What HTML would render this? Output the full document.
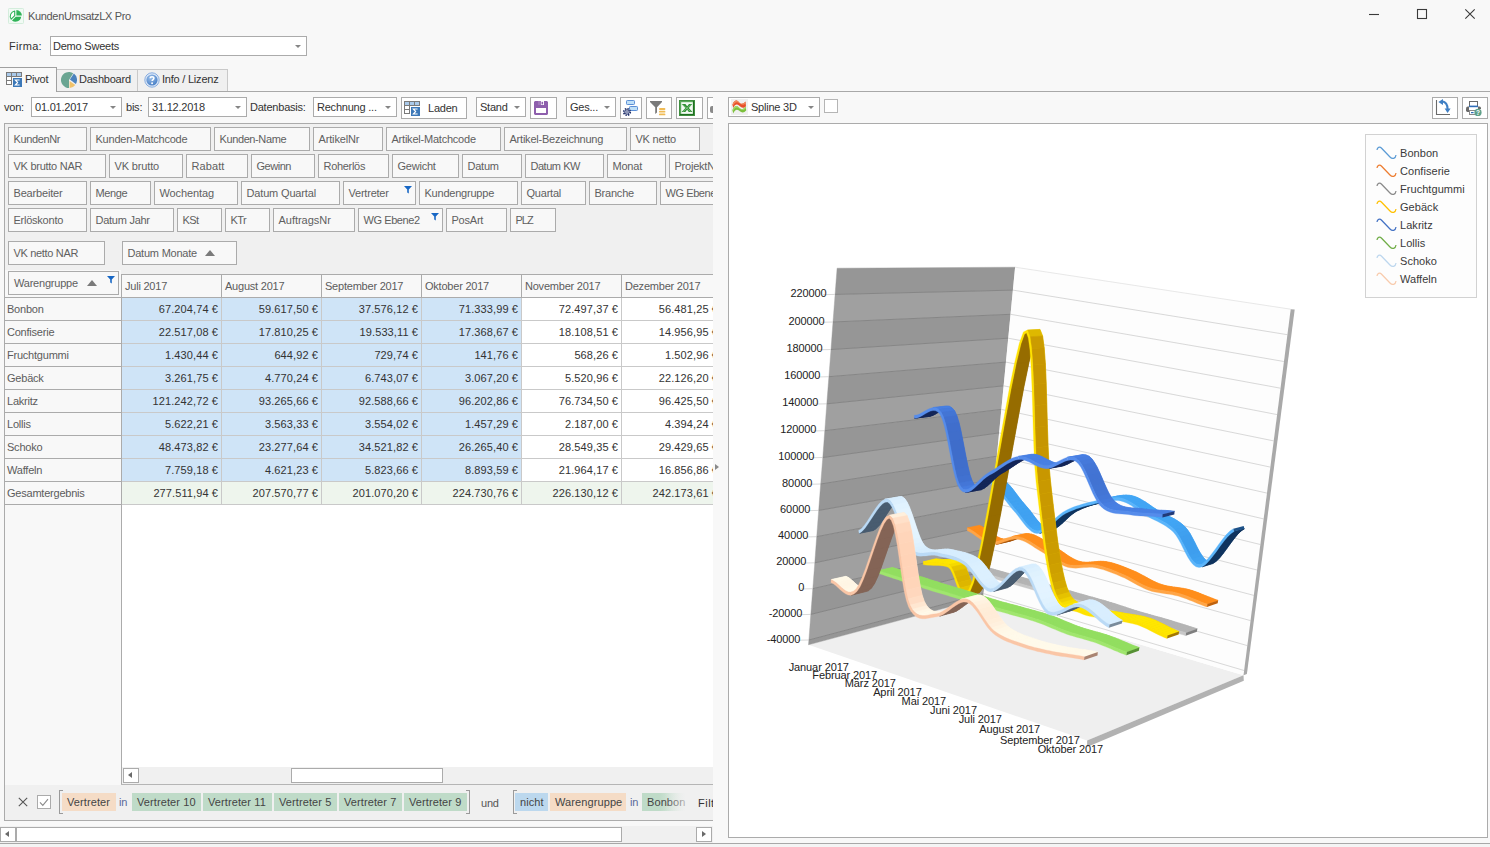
<!DOCTYPE html>
<html lang="de"><head><meta charset="utf-8"><title>KundenUmsatzLX Pro</title>
<style>
*{box-sizing:border-box;margin:0;padding:0}
html,body{width:1490px;height:847px;overflow:hidden;background:#f8f8f8}
body{position:relative;font-family:"Liberation Sans",sans-serif;font-size:11px;color:#333;letter-spacing:-0.22px}
.a{position:absolute}
.t{position:absolute;white-space:nowrap;line-height:13px}
.box{position:absolute;border:1px solid #ababab;background:#fff}
.fld{position:absolute;border:1px solid #ababab;background:#f8f8f8;height:24px;color:#606060;padding-left:4.5px;line-height:22px;white-space:nowrap;overflow:hidden}
.arr{position:absolute;width:0;height:0;border-left:3.5px solid transparent;border-right:3.5px solid transparent;border-top:3.5px solid #858585}
.hl{position:absolute;height:1px;background:#ababab}
.vl{position:absolute;width:1px;background:#ababab}
.cell{position:absolute;height:22px;line-height:22px;text-align:right;padding-right:3px;white-space:nowrap;color:#333;letter-spacing:0.1px}
.chip{position:absolute;top:793px;height:18px;line-height:18px;white-space:nowrap;color:#444;padding-left:5px;letter-spacing:0.1px}
</style></head>
<body>
<div class="t" style="left:28px;top:10px;letter-spacing:-0.33px;color:#555">KundenUmsatzLX Pro</div>
<svg class="a" style="left:8px;top:8px" width="16" height="16" viewBox="0 0 16 16">
<rect x="0.5" y="0.5" width="15" height="15" rx="0.8" fill="#f1faf4" stroke="#d4eddc"/>
<path d="M8.4 7.5V2A5.6 5.6 0 0 1 13.9 7.5Z" fill="#30b358"/>
<path d="M7.8 8.7H13.2A5.6 5.6 0 0 1 4 12.4Z" fill="#30b358"/>
<path d="M6.7 7.7V3A5.3 5.3 0 0 0 3.2 11.2Z" fill="#fff" stroke="#30b358" stroke-width="1.1" stroke-linejoin="round"/>
</svg>
<svg class="a" style="left:1360px;top:4px" width="124" height="22" viewBox="0 0 124 22">
<path d="M9 10.5H19" stroke="#3a3a3a" stroke-width="1.1" fill="none"/>
<rect x="57.5" y="5.5" width="9" height="9" stroke="#3a3a3a" stroke-width="1.1" fill="none"/>
<path d="M105.3 5.3L114.7 14.7M114.7 5.3L105.3 14.7" stroke="#3a3a3a" stroke-width="1.1" fill="none"/>
</svg>
<div class="t" style="left:9px;top:40px;letter-spacing:0.3px">Firma:</div>
<div class="box" style="left:50px;top:36px;width:257px;height:20px"></div>
<div class="t" style="left:53px;top:40px">Demo Sweets</div>
<div class="arr" style="left:295px;top:45px"></div>
<div class="hl" style="left:0;top:91px;width:1490px;background:#a8a8a8"></div>
<div class="a" style="left:56px;top:69px;width:172px;height:22px;background:#f0f0f0;border:1px solid #c9c9c9;border-bottom:none"></div>
<div class="vl" style="left:137px;top:70px;height:21px;background:#c9c9c9"></div>
<div class="a" style="left:-1px;top:67px;width:58px;height:25px;background:#f8f8f8;border:1px solid #a0a0a0;border-bottom:none"></div>
<svg class="a" style="left:6px;top:72px" width="17" height="16" viewBox="0 0 17 16">
<rect x="0.5" y="0.5" width="15" height="4" fill="#a9c9ea" stroke="#7a7a7a"/>
<path d="M5.5 0.5V4.5M10.5 0.5V4.5" stroke="#7a7a7a" fill="none"/>
<rect x="0.5" y="4.5" width="5" height="4" fill="#fff" stroke="#7a7a7a"/>
<rect x="0.5" y="8.5" width="5" height="4" fill="#fff" stroke="#7a7a7a"/>
<rect x="7" y="6" width="9" height="9" fill="#3c78b8"/>
<path d="M13.6 8H9.4L11.6 10.5L9.4 13H13.6" stroke="#fff" stroke-width="1.2" fill="none"/>
</svg>
<div class="t" style="left:25px;top:73px">Pivot</div>
<svg class="a" style="left:61px;top:72px" width="16" height="16" viewBox="0 0 16 16">
<path d="M8 8 L12.2 1.2 A8 8 0 1 0 8 16 Z" fill="#6aa592"/>
<path d="M8.9 7.6 L12.9 1.6 A8 8 0 0 1 14.9 12 Z" fill="#4a82bd"/>
<path d="M8.6 9 L14.3 12.9 A8 8 0 0 1 8.6 16 Z" fill="#f0c26a"/>
</svg>
<div class="t" style="left:79px;top:73px">Dashboard</div>
<svg class="a" style="left:144px;top:72px" width="16" height="16" viewBox="0 0 16 16">
<defs><radialGradient id="ig" cx="0.4" cy="0.3" r="0.8"><stop offset="0" stop-color="#9cc0ea"/><stop offset="1" stop-color="#3f78c2"/></radialGradient></defs>
<circle cx="8" cy="8" r="7.2" fill="#dbe7f7" stroke="#7ea6dc" stroke-width="0.9"/>
<circle cx="8" cy="8" r="5.6" fill="url(#ig)"/>
<path d="M6.2 6.3C6.2 4.2 9.9 4.2 9.9 6.3C9.9 7.6 8.1 7.6 8.1 9.1" stroke="#fff" stroke-width="1.5" fill="none"/>
<circle cx="8.1" cy="11.2" r="0.95" fill="#fff"/>
</svg>
<div class="t" style="left:162px;top:73px">Info / Lizenz</div>
<div class="t" style="left:4px;top:101px">von:</div>
<div class="box" style="left:31px;top:97px;width:91px;height:20px"></div>
<div class="t" style="left:35px;top:101px">01.01.2017</div>
<div class="arr" style="left:110px;top:106px"></div>
<div class="t" style="left:126px;top:101px">bis:</div>
<div class="box" style="left:148px;top:97px;width:99px;height:20px"></div>
<div class="t" style="left:152px;top:101px">31.12.2018</div>
<div class="arr" style="left:235px;top:106px"></div>
<div class="t" style="left:250px;top:101px">Datenbasis:</div>
<div class="box" style="left:313px;top:97px;width:84px;height:20px"></div>
<div class="t" style="left:317px;top:101px">Rechnung ...</div>
<div class="arr" style="left:385px;top:106px"></div>
<div class="box" style="left:401px;top:97px;width:66px;height:22px"></div>
<svg class="a" style="left:404px;top:101px" width="17" height="16" viewBox="0 0 17 16">
<rect x="0.5" y="0.5" width="15" height="4" fill="#a9c9ea" stroke="#7a7a7a"/>
<path d="M5.5 0.5V4.5M10.5 0.5V4.5" stroke="#7a7a7a" fill="none"/>
<rect x="0.5" y="4.5" width="5" height="4" fill="#fff" stroke="#7a7a7a"/>
<rect x="0.5" y="8.5" width="5" height="4" fill="#fff" stroke="#7a7a7a"/>
<rect x="7" y="6" width="9" height="9" fill="#3c78b8"/>
<path d="M13.6 8H9.4L11.6 10.5L9.4 13H13.6" stroke="#fff" stroke-width="1.2" fill="none"/>
</svg>
<div class="t" style="left:428px;top:102px">Laden</div>
<div class="box" style="left:476px;top:97px;width:50px;height:20px"></div>
<div class="t" style="left:480px;top:101px">Stand</div>
<div class="arr" style="left:514px;top:106px"></div>
<div class="box" style="left:530px;top:97px;width:27px;height:22px"></div>
<svg class="a" style="left:534px;top:101px" width="14" height="14" viewBox="0 0 14 14">
<path d="M1 0H13L14 1V13L13 14H1L0 13V1Z" fill="#8e5fad"/>
<rect x="4" y="0" width="6" height="4" fill="#fff"/><rect x="7.5" y="0.8" width="1.6" height="2.6" fill="#8e5fad"/><rect x="4" y="0" width="3" height="4" fill="#8e5fad" opacity="0.85"/>
<rect x="2" y="7" width="10" height="5" fill="#fff"/>
</svg>
<div class="box" style="left:566px;top:97px;width:50px;height:20px"></div>
<div class="t" style="left:570px;top:101px">Ges...</div>
<div class="arr" style="left:604px;top:106px"></div>
<div class="box" style="left:620px;top:97px;width:22px;height:22px"></div>
<svg class="a" style="left:622px;top:99px" width="18" height="18" viewBox="0 0 18 18">
<rect x="4.5" y="1.5" width="8" height="4" rx="0.8" fill="#bfe0f8" stroke="#5b8fd6"/>
<rect x="7.5" y="7.5" width="8" height="4" rx="0.8" fill="#bfe0f8" stroke="#5b8fd6"/>
<circle cx="5" cy="13" r="3.3" fill="none" stroke="#1f2f6a" stroke-width="1.6" stroke-dasharray="1.5 1.09"/>
<circle cx="5" cy="13" r="2.2" fill="#e8ecf6" stroke="#1f2f6a" stroke-width="1"/>
<circle cx="5" cy="13" r="0.8" fill="#1f2f6a"/>
</svg>
<div class="box" style="left:646px;top:97px;width:26px;height:22px"></div>
<svg class="a" style="left:649px;top:100px" width="18" height="17" viewBox="0 0 18 17">
<path d="M1 1H13V2L8 7.2V12.5L6.2 14V7.2L1 2Z" fill="#7a7a7a"/>
<rect x="10" y="8" width="6.4" height="1.9" rx="0.9" fill="#f0bb55"/>
<rect x="10" y="10.7" width="6.4" height="1.9" rx="0.9" fill="#f0bb55"/>
<rect x="10" y="13.4" width="6.4" height="1.9" rx="0.9" fill="#f0bb55"/>
</svg>
<div class="box" style="left:676px;top:97px;width:27px;height:22px"></div>
<svg class="a" style="left:679px;top:100px" width="16" height="16" viewBox="0 0 16 16">
<rect x="0" y="0" width="16" height="16" fill="#3f8f3f"/>
<rect x="1" y="1" width="14" height="14" fill="#1f6f22"/>
<rect x="1" y="1" width="13" height="13" fill="#5aa85a"/>
<rect x="2.2" y="2.2" width="11.6" height="11.6" fill="#f4faf4"/>
<path d="M2.6 4H6.4L8.2 6.2L10 4H13.2L9.9 7.9L13.4 12H9.8L8.1 9.8L6.3 12H2.6L6.4 7.9Z" fill="#2f8f33"/><path d="M3.4 4.5L11.8 11.6M12.2 4.5L4 11.6" stroke="#8fd08f" stroke-width="0.7"/>
</svg>
<div class="a" style="left:707px;top:97px;width:6px;height:22px;border:1px solid #ababab;border-right:none;background:#fff"></div>
<div class="a" style="left:710px;top:106px;width:3px;height:7px;background:#8a8a8a;border-radius:2px 0 0 2px"></div>
<div class="a" style="left:4px;top:123px;width:709px;height:698px;background:#f0f0f0;border:1px solid #ababab;border-right:none"></div>
<div class="a" style="left:5px;top:124px;width:708px;height:150px;overflow:hidden">
<div class="fld" style="left:3px;top:3px;width:79px;letter-spacing:-0.37px">KundenNr</div>
<div class="fld" style="left:85px;top:3px;width:121px">Kunden-Matchcode</div>
<div class="fld" style="left:209px;top:3px;width:96px;letter-spacing:-0.39px">Kunden-Name</div>
<div class="fld" style="left:308px;top:3px;width:70px;letter-spacing:-0.15px">ArtikelNr</div>
<div class="fld" style="left:381px;top:3px;width:115px">Artikel-Matchcode</div>
<div class="fld" style="left:499px;top:3px;width:123px">Artikel-Bezeichnung</div>
<div class="fld" style="left:625px;top:3px;width:70px">VK netto</div>
<div class="fld" style="left:3px;top:30px;width:98px;letter-spacing:-0.27px">VK brutto NAR</div>
<div class="fld" style="left:104px;top:30px;width:74px;letter-spacing:-0.14px">VK brutto</div>
<div class="fld" style="left:181px;top:30px;width:62px;letter-spacing:0.10px">Rabatt</div>
<div class="fld" style="left:246px;top:30px;width:64px;letter-spacing:-0.47px">Gewinn</div>
<div class="fld" style="left:313px;top:30px;width:71px;letter-spacing:-0.30px">Roherlös</div>
<div class="fld" style="left:387px;top:30px;width:67px">Gewicht</div>
<div class="fld" style="left:457px;top:30px;width:60px">Datum</div>
<div class="fld" style="left:520px;top:30px;width:79px;letter-spacing:-0.47px">Datum KW</div>
<div class="fld" style="left:602px;top:30px;width:59px">Monat</div>
<div class="fld" style="left:664px;top:30px;width:91px">ProjektNr</div>
<div class="fld" style="left:3px;top:57px;width:79px;letter-spacing:-0.17px">Bearbeiter</div>
<div class="fld" style="left:85px;top:57px;width:61px;letter-spacing:-0.37px">Menge</div>
<div class="fld" style="left:149px;top:57px;width:84px;letter-spacing:-0.09px">Wochentag</div>
<div class="fld" style="left:236px;top:57px;width:99px;letter-spacing:-0.16px">Datum Quartal</div>
<div class="fld" style="left:338px;top:57px;width:73px">Vertreter</div>
<div class="fld" style="left:414px;top:57px;width:99px">Kundengruppe</div>
<div class="fld" style="left:516px;top:57px;width:65px">Quartal</div>
<div class="fld" style="left:584px;top:57px;width:68px">Branche</div>
<div class="fld" style="left:655px;top:57px;width:100px;letter-spacing:-0.42px">WG Ebene1</div>
<div class="fld" style="left:3px;top:84px;width:79px;letter-spacing:-0.24px">Erlöskonto</div>
<div class="fld" style="left:85px;top:84px;width:84px;letter-spacing:-0.26px">Datum Jahr</div>
<div class="fld" style="left:172px;top:84px;width:45px;letter-spacing:-0.58px">KSt</div>
<div class="fld" style="left:220px;top:84px;width:45px;letter-spacing:-0.60px">KTr</div>
<div class="fld" style="left:268px;top:84px;width:82px;letter-spacing:-0.03px">AuftragsNr</div>
<div class="fld" style="left:353px;top:84px;width:85px;letter-spacing:-0.42px">WG Ebene2</div>
<div class="fld" style="left:441px;top:84px;width:61px">PosArt</div>
<div class="fld" style="left:505px;top:84px;width:46px;letter-spacing:-1.00px">PLZ</div>
<div class="fld" style="left:3px;top:117px;width:97px;letter-spacing:-0.32px">VK netto NAR</div>
<div class="fld" style="left:117px;top:117px;width:115px">Datum Monate</div>
<svg class="a" style="left:399px;top:62px" width="8" height="8" viewBox="0 0 8 8"><path d="M0 0H8L4.8 3.4V7.6L3.2 6.6V3.4Z" fill="#1767c5"/></svg>
<svg class="a" style="left:426px;top:89px" width="8" height="8" viewBox="0 0 8 8"><path d="M0 0H8L4.8 3.4V7.6L3.2 6.6V3.4Z" fill="#1767c5"/></svg>
<div class="a" style="left:200px;top:126px;width:0;height:0;border-left:5px solid transparent;border-right:5px solid transparent;border-bottom:6px solid #7a7a7a"></div>
</div>
<div class="a" style="left:5px;top:270px;width:116px;height:515px;background:#f8f8f8"></div>
<div class="a" style="left:122px;top:275px;width:591px;height:493px;background:#fff"></div>
<div class="fld" style="left:8px;top:271px;width:111px;padding-left:5px">Warengruppe</div>
<div class="a" style="left:87px;top:280px;width:0;height:0;border-left:5px solid transparent;border-right:5px solid transparent;border-bottom:6px solid #7a7a7a"></div>
<svg class="a" style="left:107px;top:276px" width="8" height="8" viewBox="0 0 8 8"><path d="M0 0H8L4.8 3.4V7.6L3.2 6.6V3.4Z" fill="#1767c5"/></svg>
<div class="a" style="left:122px;top:275px;width:591px;height:22px;background:#f8f8f8"></div>
<div class="t" style="left:125px;top:280px;color:#5c5c5c">Juli 2017</div>
<div class="t" style="left:225px;top:280px;color:#5c5c5c">August 2017</div>
<div class="t" style="left:325px;top:280px;color:#5c5c5c">September 2017</div>
<div class="t" style="left:425px;top:280px;color:#5c5c5c">Oktober 2017</div>
<div class="t" style="left:525px;top:280px;color:#5c5c5c">November 2017</div>
<div class="t" style="left:625px;top:280px;color:#5c5c5c">Dezember 2017</div>
<div class="a" style="left:122px;top:298px;width:399px;height:183px;background:#cfe4f7"></div>
<div class="a" style="left:122px;top:482px;width:591px;height:22px;background:#eef5ed"></div>
<div class="a" style="left:122px;top:275px;width:591px;height:240px;overflow:hidden">
<div class="cell" style="left:0px;top:23px;width:99px">67.204,74 €</div>
<div class="cell" style="left:100px;top:23px;width:99px">59.617,50 €</div>
<div class="cell" style="left:200px;top:23px;width:99px">37.576,12 €</div>
<div class="cell" style="left:300px;top:23px;width:99px">71.333,99 €</div>
<div class="cell" style="left:400px;top:23px;width:99px">72.497,37 €</div>
<div class="cell" style="left:500px;top:23px;width:99px">56.481,25 €</div>
<div class="cell" style="left:0px;top:46px;width:99px">22.517,08 €</div>
<div class="cell" style="left:100px;top:46px;width:99px">17.810,25 €</div>
<div class="cell" style="left:200px;top:46px;width:99px">19.533,11 €</div>
<div class="cell" style="left:300px;top:46px;width:99px">17.368,67 €</div>
<div class="cell" style="left:400px;top:46px;width:99px">18.108,51 €</div>
<div class="cell" style="left:500px;top:46px;width:99px">14.956,95 €</div>
<div class="cell" style="left:0px;top:69px;width:99px">1.430,44 €</div>
<div class="cell" style="left:100px;top:69px;width:99px">644,92 €</div>
<div class="cell" style="left:200px;top:69px;width:99px">729,74 €</div>
<div class="cell" style="left:300px;top:69px;width:99px">141,76 €</div>
<div class="cell" style="left:400px;top:69px;width:99px">568,26 €</div>
<div class="cell" style="left:500px;top:69px;width:99px">1.502,96 €</div>
<div class="cell" style="left:0px;top:92px;width:99px">3.261,75 €</div>
<div class="cell" style="left:100px;top:92px;width:99px">4.770,24 €</div>
<div class="cell" style="left:200px;top:92px;width:99px">6.743,07 €</div>
<div class="cell" style="left:300px;top:92px;width:99px">3.067,20 €</div>
<div class="cell" style="left:400px;top:92px;width:99px">5.520,96 €</div>
<div class="cell" style="left:500px;top:92px;width:99px">22.126,20 €</div>
<div class="cell" style="left:0px;top:115px;width:99px">121.242,72 €</div>
<div class="cell" style="left:100px;top:115px;width:99px">93.265,66 €</div>
<div class="cell" style="left:200px;top:115px;width:99px">92.588,66 €</div>
<div class="cell" style="left:300px;top:115px;width:99px">96.202,86 €</div>
<div class="cell" style="left:400px;top:115px;width:99px">76.734,50 €</div>
<div class="cell" style="left:500px;top:115px;width:99px">96.425,50 €</div>
<div class="cell" style="left:0px;top:138px;width:99px">5.622,21 €</div>
<div class="cell" style="left:100px;top:138px;width:99px">3.563,33 €</div>
<div class="cell" style="left:200px;top:138px;width:99px">3.554,02 €</div>
<div class="cell" style="left:300px;top:138px;width:99px">1.457,29 €</div>
<div class="cell" style="left:400px;top:138px;width:99px">2.187,00 €</div>
<div class="cell" style="left:500px;top:138px;width:99px">4.394,24 €</div>
<div class="cell" style="left:0px;top:161px;width:99px">48.473,82 €</div>
<div class="cell" style="left:100px;top:161px;width:99px">23.277,64 €</div>
<div class="cell" style="left:200px;top:161px;width:99px">34.521,82 €</div>
<div class="cell" style="left:300px;top:161px;width:99px">26.265,40 €</div>
<div class="cell" style="left:400px;top:161px;width:99px">28.549,35 €</div>
<div class="cell" style="left:500px;top:161px;width:99px">29.429,65 €</div>
<div class="cell" style="left:0px;top:184px;width:99px">7.759,18 €</div>
<div class="cell" style="left:100px;top:184px;width:99px">4.621,23 €</div>
<div class="cell" style="left:200px;top:184px;width:99px">5.823,66 €</div>
<div class="cell" style="left:300px;top:184px;width:99px">8.893,59 €</div>
<div class="cell" style="left:400px;top:184px;width:99px">21.964,17 €</div>
<div class="cell" style="left:500px;top:184px;width:99px">16.856,86 €</div>
<div class="cell" style="left:0px;top:207px;width:99px">277.511,94 €</div>
<div class="cell" style="left:100px;top:207px;width:99px">207.570,77 €</div>
<div class="cell" style="left:200px;top:207px;width:99px">201.070,20 €</div>
<div class="cell" style="left:300px;top:207px;width:99px">224.730,76 €</div>
<div class="cell" style="left:400px;top:207px;width:99px">226.130,12 €</div>
<div class="cell" style="left:500px;top:207px;width:99px">242.173,61 €</div>
</div>
<div class="t" style="left:7px;top:303px;color:#5c5c5c">Bonbon</div>
<div class="t" style="left:7px;top:326px;color:#5c5c5c">Confiserie</div>
<div class="t" style="left:7px;top:349px;color:#5c5c5c">Fruchtgummi</div>
<div class="t" style="left:7px;top:372px;color:#5c5c5c">Gebäck</div>
<div class="t" style="left:7px;top:395px;color:#5c5c5c">Lakritz</div>
<div class="t" style="left:7px;top:418px;color:#5c5c5c">Lollis</div>
<div class="t" style="left:7px;top:441px;color:#5c5c5c">Schoko</div>
<div class="t" style="left:7px;top:464px;color:#5c5c5c">Waffeln</div>
<div class="t" style="left:7px;top:487px;color:#5c5c5c">Gesamtergebnis</div>
<div class="hl" style="left:121px;top:274px;width:592px"></div>
<div class="hl" style="left:5px;top:297px;width:708px"></div>
<div class="hl" style="left:5px;top:320px;width:117px"></div>
<div class="hl" style="left:122px;top:320px;width:591px;background:#c9c9c9"></div>
<div class="hl" style="left:5px;top:343px;width:117px"></div>
<div class="hl" style="left:122px;top:343px;width:591px;background:#c9c9c9"></div>
<div class="hl" style="left:5px;top:366px;width:117px"></div>
<div class="hl" style="left:122px;top:366px;width:591px;background:#c9c9c9"></div>
<div class="hl" style="left:5px;top:389px;width:117px"></div>
<div class="hl" style="left:122px;top:389px;width:591px;background:#c9c9c9"></div>
<div class="hl" style="left:5px;top:412px;width:117px"></div>
<div class="hl" style="left:122px;top:412px;width:591px;background:#c9c9c9"></div>
<div class="hl" style="left:5px;top:435px;width:117px"></div>
<div class="hl" style="left:122px;top:435px;width:591px;background:#c9c9c9"></div>
<div class="hl" style="left:5px;top:458px;width:117px"></div>
<div class="hl" style="left:122px;top:458px;width:591px;background:#c9c9c9"></div>
<div class="hl" style="left:5px;top:481px;width:117px"></div>
<div class="hl" style="left:122px;top:481px;width:591px;background:#c9c9c9"></div>
<div class="hl" style="left:5px;top:504px;width:117px"></div>
<div class="hl" style="left:122px;top:504px;width:591px;background:#c9c9c9"></div>
<div class="vl" style="left:121px;top:275px;height:22px"></div>
<div class="vl" style="left:221px;top:275px;height:22px"></div>
<div class="vl" style="left:221px;top:298px;height:206px;background:#c9c9c9"></div>
<div class="vl" style="left:321px;top:275px;height:22px"></div>
<div class="vl" style="left:321px;top:298px;height:206px;background:#c9c9c9"></div>
<div class="vl" style="left:421px;top:275px;height:22px"></div>
<div class="vl" style="left:421px;top:298px;height:206px;background:#c9c9c9"></div>
<div class="vl" style="left:521px;top:275px;height:22px"></div>
<div class="vl" style="left:521px;top:298px;height:206px;background:#c9c9c9"></div>
<div class="vl" style="left:621px;top:275px;height:22px"></div>
<div class="vl" style="left:621px;top:298px;height:206px;background:#c9c9c9"></div>
<div class="vl" style="left:121px;top:274px;height:511px"></div>
<div class="a" style="left:715px;top:464px;width:0;height:0;border-top:3.5px solid transparent;border-bottom:3.5px solid transparent;border-left:4px solid #8a8a8a"></div>
<div class="a" style="left:122px;top:767px;width:591px;height:17px;background:#f0f0f0"></div>
<div class="box" style="left:123px;top:768px;width:16px;height:15px"></div>
<div class="a" style="left:128px;top:772px;width:0;height:0;border-top:3.5px solid transparent;border-bottom:3.5px solid transparent;border-right:4px solid #6a6a6a"></div>
<div class="box" style="left:291px;top:768px;width:152px;height:15px"></div>
<div class="hl" style="left:121px;top:784px;width:592px;background:#b5b5b5"></div>
<div class="a" style="left:5px;top:785px;width:708px;height:35px;overflow:hidden;background:#f0f0f0">
<svg class="a" style="left:13px;top:12px" width="10" height="10" viewBox="0 0 10 10"><path d="M0.8 0.8L9.2 9.2M9.2 0.8L0.8 9.2" stroke="#555" stroke-width="1.1"/></svg>
<div class="box" style="left:32px;top:10px;width:14px;height:14px"></div>
<svg class="a" style="left:34px;top:13px" width="10" height="9" viewBox="0 0 10 9"><path d="M1 4.4L3.8 7.4L9 1.2" stroke="#8a8a8a" stroke-width="1.1" fill="none"/></svg>
<div class="a" style="left:54px;top:5px;width:4px;height:24px;border:1px solid #9a9a9a;border-right:none"></div>
<div class="chip" style="left:57px;top:8px;width:54px;background:#f5dcc6;">Vertreter</div>
<div class="t" style="left:114px;top:11px;color:#5a6a9a">in</div>
<div class="chip" style="left:127px;top:8px;width:69px;background:#bfdbc8;">Vertreter 10</div>
<div class="chip" style="left:198px;top:8px;width:69px;background:#bfdbc8;">Vertreter 11</div>
<div class="chip" style="left:269px;top:8px;width:63px;background:#bfdbc8;">Vertreter 5</div>
<div class="chip" style="left:334px;top:8px;width:63px;background:#bfdbc8;">Vertreter 7</div>
<div class="chip" style="left:399px;top:8px;width:63px;background:#bfdbc8;">Vertreter 9</div>
<div class="a" style="left:461px;top:5px;width:4px;height:24px;border:1px solid #9a9a9a;border-left:none"></div>
<div class="t" style="left:476px;top:12px;color:#555">und</div>
<div class="a" style="left:508px;top:5px;width:4px;height:24px;border:1px solid #9a9a9a;border-right:none"></div>
<div class="chip" style="left:510px;top:8px;width:33px;background:#bcd8ee;">nicht</div>
<div class="chip" style="left:545px;top:8px;width:76px;background:#f5dcc6;">Warengruppe</div>
<div class="t" style="left:625px;top:11px;color:#5a6a9a">in</div>
<div class="chip" style="left:637px;top:8px;width:58px;background:linear-gradient(90deg,#bfdbc8 0%,#bfdbc8 30%,#f0f0f0 75%);color:#444">Bonbon</div>
<div class="a" style="left:650px;top:8px;width:50px;height:18px;background:linear-gradient(90deg,rgba(240,240,240,0) 20%,rgba(240,240,240,1) 80%)"></div>
<div class="t" style="left:693px;top:12px;color:#333;letter-spacing:0.5px">Filter</div>
</div>
<div class="hl" style="left:4px;top:820px;width:709px"></div>
<div class="a" style="left:0;top:826px;width:713px;height:17px;background:#f0f0f0"></div>
<div class="box" style="left:0px;top:827px;width:16px;height:15px"></div>
<div class="a" style="left:5px;top:831px;width:0;height:0;border-top:3.5px solid transparent;border-bottom:3.5px solid transparent;border-right:4px solid #6a6a6a"></div>
<div class="box" style="left:16px;top:827px;width:606px;height:15px"></div>
<div class="box" style="left:696px;top:827px;width:16px;height:15px"></div>
<div class="a" style="left:702px;top:831px;width:0;height:0;border-top:3.5px solid transparent;border-bottom:3.5px solid transparent;border-left:4px solid #6a6a6a"></div>
<div class="hl" style="left:0;top:843px;width:1490px;background:#a8a8a8"></div>
<div class="a" style="left:0;top:844px;width:1490px;height:3px;background:#f4f4f4"></div>
<div class="box" style="left:728px;top:123px;width:760px;height:715px"></div>
<div class="box" style="left:728px;top:97px;width:92px;height:20px"></div>
<svg class="a" style="left:731px;top:99px" width="17" height="16" viewBox="0 0 17 16">
<rect x="0" y="0" width="17" height="16" fill="#f0f0f0"/>
<path d="M1.5 5.5C3.5 0.5 6 1 8 3.2S12 5.6 14.5 2.6L15 7.2C12.5 10 10 8.6 8 6.6S4 5 2.2 9Z" fill="#e8502a"/>
<path d="M1.5 5.5C3.5 0.5 6 1 8 3.2S12 5.6 14.5 2.6L14.6 4.2C12 7 10 5.4 8 4S4 2.6 1.9 7Z" fill="#f08a5a"/>
<path d="M1.5 11C3.5 6 6 6.4 8 8.6S12 11 14.8 7.6L15.2 11.6C12.5 14.6 10 13.4 8 11.6S4 10.4 2.2 14.4Z" fill="#7cc03c"/>
<path d="M1.5 11C3.5 6 6 6.4 8 8.6S12 11 14.8 7.6L15 9C12.4 12.4 10 10.8 8 9.4S4 8 1.9 12.4Z" fill="#a6d86a"/>
</svg>
<div class="t" style="left:751px;top:101px">Spline 3D</div>
<div class="arr" style="left:808px;top:106px"></div>
<div class="box" style="left:824px;top:99px;width:14px;height:14px;border-color:#b5b5b5"></div>
<div class="box" style="left:1432px;top:97px;width:26px;height:22px"></div>
<svg class="a" style="left:1435px;top:99px" width="20" height="18" viewBox="0 0 20 18">
<path d="M1.5 1V15.5H15" stroke="#6a6a6a" stroke-width="1.1" fill="none"/>
<path d="M7 2.2C11 3 12.6 6.5 12.6 10" stroke="#3f7fc4" stroke-width="2" fill="none"/>
<path d="M3.4 3L8 0V6Z" fill="#3f7fc4"/>
<path d="M9.6 9.6H15.6L12.6 14Z" fill="#3f7fc4"/>
</svg>
<div class="box" style="left:1462px;top:97px;width:26px;height:22px"></div>
<svg class="a" style="left:1465px;top:100px" width="20" height="17" viewBox="0 0 20 17">
<rect x="4.5" y="1.5" width="8" height="5" fill="#fff" stroke="#6a6a6a"/>
<rect x="4" y="5.6" width="9" height="1.6" fill="#2f6db8"/>
<path d="M1 8.4Q1 6.6 3 6.6H4V12H2.4Q1 12 1 10.6Z" fill="#6a6a6a"/>
<path d="M13 6.6H14.6Q16 6.6 16 8.2V9H13Z" fill="#6a6a6a"/>
<rect x="4.5" y="10.5" width="6" height="4" fill="#fff" stroke="#8a8a8a"/>
<rect x="6" y="12" width="2.6" height="1.2" fill="#2f6db8"/>
<circle cx="13" cy="12.4" r="3.6" fill="#5fa08a"/>
<text x="13" y="14.9" font-size="6.5" font-weight="bold" fill="#fff" text-anchor="middle" font-family="Liberation Sans, sans-serif" letter-spacing="0">?</text>
</svg>
<div class="a" style="left:1365px;top:134px;width:112px;height:164px;border:1px solid #d2d2d2;background:#fdfdfd"></div>
<svg class="a" style="left:1376px;top:146px" width="22" height="14" viewBox="0 0 22 14"><path d="M1 4C1.2 1.4 3.6 0.2 5.6 2.2L14 11C16.2 13.3 19.6 12.8 20 9" stroke="#5b9bd5" stroke-width="1.25" fill="none"/></svg>
<div class="t" style="left:1400px;top:147px;color:#3a3a3a;letter-spacing:0.05px">Bonbon</div>
<svg class="a" style="left:1376px;top:164px" width="22" height="14" viewBox="0 0 22 14"><path d="M1 4C1.2 1.4 3.6 0.2 5.6 2.2L14 11C16.2 13.3 19.6 12.8 20 9" stroke="#ed7d31" stroke-width="1.25" fill="none"/></svg>
<div class="t" style="left:1400px;top:165px;color:#3a3a3a;letter-spacing:0.05px">Confiserie</div>
<svg class="a" style="left:1376px;top:182px" width="22" height="14" viewBox="0 0 22 14"><path d="M1 4C1.2 1.4 3.6 0.2 5.6 2.2L14 11C16.2 13.3 19.6 12.8 20 9" stroke="#8a8a8a" stroke-width="1.25" fill="none"/></svg>
<div class="t" style="left:1400px;top:183px;color:#3a3a3a;letter-spacing:0.05px">Fruchtgummi</div>
<svg class="a" style="left:1376px;top:200px" width="22" height="14" viewBox="0 0 22 14"><path d="M1 4C1.2 1.4 3.6 0.2 5.6 2.2L14 11C16.2 13.3 19.6 12.8 20 9" stroke="#ffc000" stroke-width="1.25" fill="none"/></svg>
<div class="t" style="left:1400px;top:201px;color:#3a3a3a;letter-spacing:0.05px">Gebäck</div>
<svg class="a" style="left:1376px;top:218px" width="22" height="14" viewBox="0 0 22 14"><path d="M1 4C1.2 1.4 3.6 0.2 5.6 2.2L14 11C16.2 13.3 19.6 12.8 20 9" stroke="#4472c4" stroke-width="1.25" fill="none"/></svg>
<div class="t" style="left:1400px;top:219px;color:#3a3a3a;letter-spacing:0.05px">Lakritz</div>
<svg class="a" style="left:1376px;top:236px" width="22" height="14" viewBox="0 0 22 14"><path d="M1 4C1.2 1.4 3.6 0.2 5.6 2.2L14 11C16.2 13.3 19.6 12.8 20 9" stroke="#70ad47" stroke-width="1.25" fill="none"/></svg>
<div class="t" style="left:1400px;top:237px;color:#3a3a3a;letter-spacing:0.05px">Lollis</div>
<svg class="a" style="left:1376px;top:254px" width="22" height="14" viewBox="0 0 22 14"><path d="M1 4C1.2 1.4 3.6 0.2 5.6 2.2L14 11C16.2 13.3 19.6 12.8 20 9" stroke="#bdd7ee" stroke-width="1.25" fill="none"/></svg>
<div class="t" style="left:1400px;top:255px;color:#3a3a3a;letter-spacing:0.05px">Schoko</div>
<svg class="a" style="left:1376px;top:272px" width="22" height="14" viewBox="0 0 22 14"><path d="M1 4C1.2 1.4 3.6 0.2 5.6 2.2L14 11C16.2 13.3 19.6 12.8 20 9" stroke="#f8cbad" stroke-width="1.25" fill="none"/></svg>
<div class="t" style="left:1400px;top:273px;color:#3a3a3a;letter-spacing:0.05px">Waffeln</div>
<svg class="a" style="left:729px;top:124px" width="758" height="713" viewBox="729 124 758 713"><polygon points="808.5,644.8 983.2,597.8 1243.5,675.2 1087.1,740.5" fill="#efefef" /><polygon points="1087.1,740.5 1243.5,675.2 1243.8,680.7 1087.1,747.0" fill="#b2b2b2" /><polygon points="808.5,644.8 983.2,597.8 983.6,593.6 808.9,640.0" fill="#969696" stroke="#969696" stroke-width="0.4"/><polygon points="808.9,640.0 983.6,593.6 985.7,571.0 810.8,614.4" fill="#a0a0a0" stroke="#a0a0a0" stroke-width="0.4"/><polygon points="810.8,614.4 985.7,571.0 987.9,548.3 812.8,588.7" fill="#969696" stroke="#969696" stroke-width="0.4"/><polygon points="812.8,588.7 987.9,548.3 990.1,525.5 814.8,562.8" fill="#a0a0a0" stroke="#a0a0a0" stroke-width="0.4"/><polygon points="814.8,562.8 990.1,525.5 992.4,502.5 816.7,536.7" fill="#969696" stroke="#969696" stroke-width="0.4"/><polygon points="816.7,536.7 992.4,502.5 994.6,479.4 818.7,510.4" fill="#a0a0a0" stroke="#a0a0a0" stroke-width="0.4"/><polygon points="818.7,510.4 994.6,479.4 996.8,456.2 820.7,484.0" fill="#969696" stroke="#969696" stroke-width="0.4"/><polygon points="820.7,484.0 996.8,456.2 999.1,432.9 822.8,457.5" fill="#a0a0a0" stroke="#a0a0a0" stroke-width="0.4"/><polygon points="822.8,457.5 999.1,432.9 1001.3,409.4 824.8,430.7" fill="#969696" stroke="#969696" stroke-width="0.4"/><polygon points="824.8,430.7 1001.3,409.4 1003.6,385.8 826.8,403.8" fill="#a0a0a0" stroke="#a0a0a0" stroke-width="0.4"/><polygon points="826.8,403.8 1003.6,385.8 1005.9,362.1 828.9,376.7" fill="#969696" stroke="#969696" stroke-width="0.4"/><polygon points="828.9,376.7 1005.9,362.1 1008.2,338.2 831.0,349.5" fill="#a0a0a0" stroke="#a0a0a0" stroke-width="0.4"/><polygon points="831.0,349.5 1008.2,338.2 1010.5,314.3 833.0,322.0" fill="#969696" stroke="#969696" stroke-width="0.4"/><polygon points="833.0,322.0 1010.5,314.3 1012.9,290.1 835.1,294.4" fill="#a0a0a0" stroke="#a0a0a0" stroke-width="0.4"/><polygon points="835.1,294.4 1012.9,290.1 1015.1,267.2 837.1,268.2" fill="#969696" stroke="#969696" stroke-width="0.4"/><line x1="808.9" y1="640.0" x2="983.6" y2="593.6" stroke="#868686" stroke-width="1"/><line x1="810.8" y1="614.4" x2="985.7" y2="571.0" stroke="#868686" stroke-width="1"/><line x1="812.8" y1="588.7" x2="987.9" y2="548.3" stroke="#868686" stroke-width="1"/><line x1="814.8" y1="562.8" x2="990.1" y2="525.5" stroke="#868686" stroke-width="1"/><line x1="816.7" y1="536.7" x2="992.4" y2="502.5" stroke="#868686" stroke-width="1"/><line x1="818.7" y1="510.4" x2="994.6" y2="479.4" stroke="#868686" stroke-width="1"/><line x1="820.7" y1="484.0" x2="996.8" y2="456.2" stroke="#868686" stroke-width="1"/><line x1="822.8" y1="457.5" x2="999.1" y2="432.9" stroke="#868686" stroke-width="1"/><line x1="824.8" y1="430.7" x2="1001.3" y2="409.4" stroke="#868686" stroke-width="1"/><line x1="826.8" y1="403.8" x2="1003.6" y2="385.8" stroke="#868686" stroke-width="1"/><line x1="828.9" y1="376.7" x2="1005.9" y2="362.1" stroke="#868686" stroke-width="1"/><line x1="831.0" y1="349.5" x2="1008.2" y2="338.2" stroke="#868686" stroke-width="1"/><line x1="833.0" y1="322.0" x2="1010.5" y2="314.3" stroke="#868686" stroke-width="1"/><line x1="835.1" y1="294.4" x2="1012.9" y2="290.1" stroke="#868686" stroke-width="1"/><polygon points="983.2,597.8 1243.5,675.2 1290.7,309.2 1015.1,267.2" fill="#fdfdfd" /><line x1="983.6" y1="593.6" x2="1244.1" y2="670.5" stroke="#d4d4d4" stroke-width="0.9"/><line x1="985.7" y1="571.0" x2="1247.3" y2="645.6" stroke="#d4d4d4" stroke-width="0.9"/><line x1="987.9" y1="548.3" x2="1250.5" y2="620.6" stroke="#d4d4d4" stroke-width="0.9"/><line x1="990.1" y1="525.5" x2="1253.8" y2="595.4" stroke="#d4d4d4" stroke-width="0.9"/><line x1="992.4" y1="502.5" x2="1257.0" y2="570.0" stroke="#d4d4d4" stroke-width="0.9"/><line x1="994.6" y1="479.4" x2="1260.3" y2="544.5" stroke="#d4d4d4" stroke-width="0.9"/><line x1="996.8" y1="456.2" x2="1263.6" y2="518.9" stroke="#d4d4d4" stroke-width="0.9"/><line x1="999.1" y1="432.9" x2="1267.0" y2="493.1" stroke="#d4d4d4" stroke-width="0.9"/><line x1="1001.3" y1="409.4" x2="1270.3" y2="467.1" stroke="#d4d4d4" stroke-width="0.9"/><line x1="1003.6" y1="385.8" x2="1273.7" y2="440.9" stroke="#d4d4d4" stroke-width="0.9"/><line x1="1005.9" y1="362.1" x2="1277.1" y2="414.6" stroke="#d4d4d4" stroke-width="0.9"/><line x1="1008.2" y1="338.2" x2="1280.5" y2="388.2" stroke="#d4d4d4" stroke-width="0.9"/><line x1="1010.5" y1="314.3" x2="1283.9" y2="361.5" stroke="#d4d4d4" stroke-width="0.9"/><line x1="1012.9" y1="290.1" x2="1287.4" y2="334.7" stroke="#d4d4d4" stroke-width="0.9"/><line x1="1015.1" y1="267.2" x2="1290.7" y2="309.2" stroke="#e2e2e2" stroke-width="0.8"/><polygon points="1290.7,309.2 1294.7,309.6 1246.9,674.0 1243.5,675.2" fill="#a9a9a9" /><polygon points="991.6,481.6 994.0,483.4 996.3,485.6 998.6,488.1 1000.8,490.9 1003.1,493.7 1005.3,496.7 1007.5,499.7 1009.8,502.6 1012.0,505.3 1014.2,507.9 1016.5,510.5 1018.8,513.4 1021.1,516.4 1023.3,519.4 1025.5,522.3 1027.8,524.9 1030.1,527.2 1032.4,529.0 1034.7,530.2 1037.1,530.7 1039.5,530.5 1050.9,527.9 1048.5,528.1 1046.1,527.6 1043.8,526.4 1041.5,524.6 1039.3,522.4 1037.0,519.8 1034.8,517.0 1032.6,514.0 1030.4,511.0 1028.1,508.2 1025.8,505.6 1023.6,503.0 1021.3,500.3 1019.1,497.4 1016.9,494.5 1014.7,491.6 1012.5,488.7 1010.2,486.0 1007.9,483.5 1005.6,481.3 1003.3,479.5" fill="#40a3f2" stroke="#40a3f2" stroke-width="0.5"/><polygon points="991.6,481.6 994.0,483.4 1005.6,481.3 1003.3,479.5" fill="#41a4f3" stroke="#41a4f3" stroke-width="0.4"/><polygon points="994.0,483.4 996.3,485.6 1007.9,483.5 1005.6,481.3" fill="#41a4f3" stroke="#41a4f3" stroke-width="0.4"/><polygon points="996.3,485.6 998.6,488.1 1010.2,486.0 1007.9,483.5" fill="#40a3f2" stroke="#40a3f2" stroke-width="0.4"/><polygon points="998.6,488.1 1000.8,490.9 1012.5,488.7 1010.2,486.0" fill="#40a2f1" stroke="#40a2f1" stroke-width="0.4"/><polygon points="1000.8,490.9 1003.1,493.7 1014.7,491.6 1012.5,488.7" fill="#40a2f1" stroke="#40a2f1" stroke-width="0.4"/><polygon points="1003.1,493.7 1005.3,496.7 1016.9,494.5 1014.7,491.6" fill="#40a1f1" stroke="#40a1f1" stroke-width="0.4"/><polygon points="1005.3,496.7 1007.5,499.7 1019.1,497.4 1016.9,494.5" fill="#40a1f1" stroke="#40a1f1" stroke-width="0.4"/><polygon points="1007.5,499.7 1009.8,502.6 1021.3,500.3 1019.1,497.4" fill="#40a2f1" stroke="#40a2f1" stroke-width="0.4"/><polygon points="1009.8,502.6 1012.0,505.3 1023.6,503.0 1021.3,500.3" fill="#40a2f1" stroke="#40a2f1" stroke-width="0.4"/><polygon points="1012.0,505.3 1014.2,507.9 1025.8,505.6 1023.6,503.0" fill="#40a2f2" stroke="#40a2f2" stroke-width="0.4"/><polygon points="1014.2,507.9 1016.5,510.5 1028.1,508.2 1025.8,505.6" fill="#40a2f1" stroke="#40a2f1" stroke-width="0.4"/><polygon points="1016.5,510.5 1018.8,513.4 1030.4,511.0 1028.1,508.2" fill="#40a2f1" stroke="#40a2f1" stroke-width="0.4"/><polygon points="1018.8,513.4 1021.1,516.4 1032.6,514.0 1030.4,511.0" fill="#40a1f1" stroke="#40a1f1" stroke-width="0.4"/><polygon points="1021.1,516.4 1023.3,519.4 1034.8,517.0 1032.6,514.0" fill="#40a1f1" stroke="#40a1f1" stroke-width="0.4"/><polygon points="1023.3,519.4 1025.5,522.3 1037.0,519.8 1034.8,517.0" fill="#40a2f1" stroke="#40a2f1" stroke-width="0.4"/><polygon points="1025.5,522.3 1027.8,524.9 1039.3,522.4 1037.0,519.8" fill="#40a2f2" stroke="#40a2f2" stroke-width="0.4"/><polygon points="1027.8,524.9 1030.1,527.2 1041.5,524.6 1039.3,522.4" fill="#41a3f3" stroke="#41a3f3" stroke-width="0.4"/><polygon points="1030.1,527.2 1032.4,529.0 1043.8,526.4 1041.5,524.6" fill="#41a5f4" stroke="#41a5f4" stroke-width="0.4"/><polygon points="1032.4,529.0 1034.7,530.2 1046.1,527.6 1043.8,526.4" fill="#42a6f5" stroke="#42a6f5" stroke-width="0.4"/><polygon points="1034.7,530.2 1037.1,530.7 1048.5,528.1 1046.1,527.6" fill="#42a6f5" stroke="#42a6f5" stroke-width="0.4"/><polygon points="1037.1,530.7 1039.5,530.5 1050.9,527.9 1048.5,528.1" fill="#41a5f4" stroke="#41a5f4" stroke-width="0.4"/><polygon points="991.6,481.6 994.0,483.4 996.3,485.6 998.6,488.1 1000.8,490.9 1003.1,493.7 1005.3,496.7 1007.5,499.7 1009.8,502.6 1012.0,505.3 1014.2,507.9 1016.5,510.5 1018.8,513.4 1021.1,516.4 1023.3,519.4 1025.5,522.3 1027.8,524.9 1030.1,527.2 1032.4,529.0 1034.7,530.2 1037.1,530.7 1039.5,530.5 1039.7,533.2 1037.0,533.5 1034.3,532.9 1031.7,531.6 1029.3,529.6 1026.9,527.2 1024.6,524.5 1022.3,521.6 1020.0,518.6 1017.8,515.6 1015.6,512.8 1013.3,510.2 1011.0,507.6 1008.8,504.8 1006.5,501.8 1004.3,498.9 1002.1,495.9 999.9,493.1 997.7,490.4 995.4,488.0 993.2,485.9 990.9,484.1" fill="#5ab4fa" stroke="#5ab4fa" stroke-width="0.3"/><polygon points="1039.7,533.2 1042.6,532.1 1045.4,530.3 1048.3,528.1 1051.2,525.5 1054.1,522.8 1057.0,520.1 1059.9,517.5 1062.7,515.3 1065.5,513.6 1068.2,512.2 1071.0,511.0 1073.8,509.9 1076.5,508.8 1079.3,507.9 1082.1,507.1 1084.8,506.3 1087.6,505.6 1090.4,505.0 1093.1,504.3 1095.9,503.6 1098.7,503.0 1101.5,502.3 1104.3,501.7 1115.5,499.3 1112.7,499.9 1109.9,500.6 1107.1,501.3 1104.3,501.9 1101.6,502.6 1098.8,503.2 1096.1,503.9 1093.3,504.7 1090.6,505.5 1087.8,506.4 1085.1,507.4 1082.3,508.5 1079.6,509.8 1076.8,511.1 1074.0,512.9 1071.2,515.0 1068.4,517.6 1065.5,520.3 1062.6,523.0 1059.7,525.5 1056.8,527.7 1054.0,529.5 1051.2,530.6" fill="#10345f" stroke="#10345f" stroke-width="0.5"/><polygon points="1039.7,533.2 1042.6,532.1 1054.0,529.5 1051.2,530.6" fill="#10345f" stroke="#10345f" stroke-width="0.4"/><polygon points="1042.6,532.1 1045.4,530.3 1056.8,527.7 1054.0,529.5" fill="#10345f" stroke="#10345f" stroke-width="0.4"/><polygon points="1045.4,530.3 1048.3,528.1 1059.7,525.5 1056.8,527.7" fill="#10345f" stroke="#10345f" stroke-width="0.4"/><polygon points="1048.3,528.1 1051.2,525.5 1062.6,523.0 1059.7,525.5" fill="#10345f" stroke="#10345f" stroke-width="0.4"/><polygon points="1051.2,525.5 1054.1,522.8 1065.5,520.3 1062.6,523.0" fill="#10345f" stroke="#10345f" stroke-width="0.4"/><polygon points="1054.1,522.8 1057.0,520.1 1068.4,517.6 1065.5,520.3" fill="#10345f" stroke="#10345f" stroke-width="0.4"/><polygon points="1057.0,520.1 1059.9,517.5 1071.2,515.0 1068.4,517.6" fill="#10345f" stroke="#10345f" stroke-width="0.4"/><polygon points="1059.9,517.5 1062.7,515.3 1074.0,512.9 1071.2,515.0" fill="#10345f" stroke="#10345f" stroke-width="0.4"/><polygon points="1062.7,515.3 1065.5,513.6 1076.8,511.1 1074.0,512.9" fill="#10345f" stroke="#10345f" stroke-width="0.4"/><polygon points="1065.5,513.6 1068.2,512.2 1079.6,509.8 1076.8,511.1" fill="#10345f" stroke="#10345f" stroke-width="0.4"/><polygon points="1068.2,512.2 1071.0,511.0 1082.3,508.5 1079.6,509.8" fill="#10345f" stroke="#10345f" stroke-width="0.4"/><polygon points="1071.0,511.0 1073.8,509.9 1085.1,507.4 1082.3,508.5" fill="#10345f" stroke="#10345f" stroke-width="0.4"/><polygon points="1073.8,509.9 1076.5,508.8 1087.8,506.4 1085.1,507.4" fill="#10345f" stroke="#10345f" stroke-width="0.4"/><polygon points="1076.5,508.8 1079.3,507.9 1090.6,505.5 1087.8,506.4" fill="#10345f" stroke="#10345f" stroke-width="0.4"/><polygon points="1079.3,507.9 1082.1,507.1 1093.3,504.7 1090.6,505.5" fill="#10345f" stroke="#10345f" stroke-width="0.4"/><polygon points="1082.1,507.1 1084.8,506.3 1096.1,503.9 1093.3,504.7" fill="#10345f" stroke="#10345f" stroke-width="0.4"/><polygon points="1084.8,506.3 1087.6,505.6 1098.8,503.2 1096.1,503.9" fill="#10345f" stroke="#10345f" stroke-width="0.4"/><polygon points="1087.6,505.6 1090.4,505.0 1101.6,502.6 1098.8,503.2" fill="#10345f" stroke="#10345f" stroke-width="0.4"/><polygon points="1090.4,505.0 1093.1,504.3 1104.3,501.9 1101.6,502.6" fill="#10345f" stroke="#10345f" stroke-width="0.4"/><polygon points="1093.1,504.3 1095.9,503.6 1107.1,501.3 1104.3,501.9" fill="#10345f" stroke="#10345f" stroke-width="0.4"/><polygon points="1095.9,503.6 1098.7,503.0 1109.9,500.6 1107.1,501.3" fill="#10345f" stroke="#10345f" stroke-width="0.4"/><polygon points="1098.7,503.0 1101.5,502.3 1112.7,499.9 1109.9,500.6" fill="#10345f" stroke="#10345f" stroke-width="0.4"/><polygon points="1101.5,502.3 1104.3,501.7 1115.5,499.3 1112.7,499.9" fill="#10345f" stroke="#10345f" stroke-width="0.4"/><polygon points="1039.5,530.5 1042.1,529.4 1044.8,527.8 1047.6,525.6 1050.4,523.1 1053.3,520.3 1056.2,517.6 1059.2,515.0 1062.1,512.7 1065.0,510.9 1067.8,509.5 1070.6,508.2 1073.4,507.1 1076.2,506.1 1079.0,505.2 1081.8,504.3 1084.6,503.5 1087.4,502.8 1090.1,502.1 1092.9,501.5 1095.7,500.8 1098.5,500.1 1101.3,499.4 1104.1,498.8 1104.3,501.7 1101.5,502.3 1098.7,503.0 1095.9,503.6 1093.1,504.3 1090.4,505.0 1087.6,505.6 1084.8,506.3 1082.1,507.1 1079.3,507.9 1076.5,508.8 1073.8,509.9 1071.0,511.0 1068.2,512.2 1065.5,513.6 1062.7,515.3 1059.9,517.5 1057.0,520.1 1054.1,522.8 1051.2,525.5 1048.3,528.1 1045.4,530.3 1042.6,532.1 1039.7,533.2" fill="#5ab4fa" stroke="#5ab4fa" stroke-width="0.3"/><polygon points="1104.1,498.8 1107.0,498.3 1109.8,497.8 1112.6,497.6 1115.4,497.5 1118.2,497.6 1121.0,498.1 1123.8,498.8 1126.5,499.9 1129.2,501.2 1131.8,502.8 1134.5,504.5 1137.1,506.2 1139.7,508.1 1142.3,509.9 1145.0,511.6 1147.6,513.2 1150.2,514.7 1152.9,516.1 1155.6,517.5 1158.3,518.8 1161.0,520.2 1163.7,521.7 1166.5,523.3 1169.2,525.2 1171.9,527.3 1174.6,529.8 1177.2,533.0 1179.7,536.9 1182.1,541.4 1184.5,546.1 1186.9,550.8 1189.2,555.2 1191.6,559.0 1194.1,562.0 1196.6,564.0 1199.1,564.6 1201.9,563.9 1212.5,560.8 1209.7,561.5 1207.2,560.9 1204.7,559.0 1202.3,556.0 1199.9,552.2 1197.5,547.9 1195.2,543.2 1192.8,538.6 1190.4,534.1 1187.9,530.2 1185.3,527.1 1182.6,524.6 1180.0,522.5 1177.3,520.7 1174.6,519.1 1171.8,517.6 1169.1,516.2 1166.4,514.9 1163.8,513.6 1161.1,512.2 1158.5,510.7 1155.9,509.1 1153.3,507.4 1150.7,505.6 1148.1,503.8 1145.5,502.0 1142.8,500.4 1140.2,498.9 1137.5,497.5 1134.8,496.5 1132.1,495.7 1129.3,495.3 1126.5,495.1 1123.7,495.2 1120.9,495.5 1118.1,495.9 1115.3,496.5" fill="#41a4f3" stroke="#41a4f3" stroke-width="0.5"/><polygon points="1104.1,498.8 1107.0,498.3 1118.1,495.9 1115.3,496.5" fill="#41a5f4" stroke="#41a5f4" stroke-width="0.4"/><polygon points="1107.0,498.3 1109.8,497.8 1120.9,495.5 1118.1,495.9" fill="#41a5f4" stroke="#41a5f4" stroke-width="0.4"/><polygon points="1109.8,497.8 1112.6,497.6 1123.7,495.2 1120.9,495.5" fill="#42a5f4" stroke="#42a5f4" stroke-width="0.4"/><polygon points="1112.6,497.6 1115.4,497.5 1126.5,495.1 1123.7,495.2" fill="#42a5f5" stroke="#42a5f5" stroke-width="0.4"/><polygon points="1115.4,497.5 1118.2,497.6 1129.3,495.3 1126.5,495.1" fill="#42a6f5" stroke="#42a6f5" stroke-width="0.4"/><polygon points="1118.2,497.6 1121.0,498.1 1132.1,495.7 1129.3,495.3" fill="#42a6f5" stroke="#42a6f5" stroke-width="0.4"/><polygon points="1121.0,498.1 1123.8,498.8 1134.8,496.5 1132.1,495.7" fill="#42a6f5" stroke="#42a6f5" stroke-width="0.4"/><polygon points="1123.8,498.8 1126.5,499.9 1137.5,497.5 1134.8,496.5" fill="#42a6f5" stroke="#42a6f5" stroke-width="0.4"/><polygon points="1126.5,499.9 1129.2,501.2 1140.2,498.9 1137.5,497.5" fill="#42a6f5" stroke="#42a6f5" stroke-width="0.4"/><polygon points="1129.2,501.2 1131.8,502.8 1142.8,500.4 1140.2,498.9" fill="#42a5f4" stroke="#42a5f4" stroke-width="0.4"/><polygon points="1131.8,502.8 1134.5,504.5 1145.5,502.0 1142.8,500.4" fill="#42a5f4" stroke="#42a5f4" stroke-width="0.4"/><polygon points="1134.5,504.5 1137.1,506.2 1148.1,503.8 1145.5,502.0" fill="#41a5f4" stroke="#41a5f4" stroke-width="0.4"/><polygon points="1137.1,506.2 1139.7,508.1 1150.7,505.6 1148.1,503.8" fill="#41a5f4" stroke="#41a5f4" stroke-width="0.4"/><polygon points="1139.7,508.1 1142.3,509.9 1153.3,507.4 1150.7,505.6" fill="#41a5f4" stroke="#41a5f4" stroke-width="0.4"/><polygon points="1142.3,509.9 1145.0,511.6 1155.9,509.1 1153.3,507.4" fill="#41a5f4" stroke="#41a5f4" stroke-width="0.4"/><polygon points="1145.0,511.6 1147.6,513.2 1158.5,510.7 1155.9,509.1" fill="#42a5f4" stroke="#42a5f4" stroke-width="0.4"/><polygon points="1147.6,513.2 1150.2,514.7 1161.1,512.2 1158.5,510.7" fill="#42a5f4" stroke="#42a5f4" stroke-width="0.4"/><polygon points="1150.2,514.7 1152.9,516.1 1163.8,513.6 1161.1,512.2" fill="#42a5f5" stroke="#42a5f5" stroke-width="0.4"/><polygon points="1152.9,516.1 1155.6,517.5 1166.4,514.9 1163.8,513.6" fill="#42a6f5" stroke="#42a6f5" stroke-width="0.4"/><polygon points="1155.6,517.5 1158.3,518.8 1169.1,516.2 1166.4,514.9" fill="#42a6f5" stroke="#42a6f5" stroke-width="0.4"/><polygon points="1158.3,518.8 1161.0,520.2 1171.8,517.6 1169.1,516.2" fill="#42a5f5" stroke="#42a5f5" stroke-width="0.4"/><polygon points="1161.0,520.2 1163.7,521.7 1174.6,519.1 1171.8,517.6" fill="#42a5f4" stroke="#42a5f4" stroke-width="0.4"/><polygon points="1163.7,521.7 1166.5,523.3 1177.3,520.7 1174.6,519.1" fill="#42a5f4" stroke="#42a5f4" stroke-width="0.4"/><polygon points="1166.5,523.3 1169.2,525.2 1180.0,522.5 1177.3,520.7" fill="#41a5f4" stroke="#41a5f4" stroke-width="0.4"/><polygon points="1169.2,525.2 1171.9,527.3 1182.6,524.6 1180.0,522.5" fill="#41a4f3" stroke="#41a4f3" stroke-width="0.4"/><polygon points="1171.9,527.3 1174.6,529.8 1185.3,527.1 1182.6,524.6" fill="#41a3f2" stroke="#41a3f2" stroke-width="0.4"/><polygon points="1174.6,529.8 1177.2,533.0 1187.9,530.2 1185.3,527.1" fill="#40a2f1" stroke="#40a2f1" stroke-width="0.4"/><polygon points="1177.2,533.0 1179.7,536.9 1190.4,534.1 1187.9,530.2" fill="#3fa0ef" stroke="#3fa0ef" stroke-width="0.4"/><polygon points="1179.7,536.9 1182.1,541.4 1192.8,538.6 1190.4,534.1" fill="#3e9eee" stroke="#3e9eee" stroke-width="0.4"/><polygon points="1182.1,541.4 1184.5,546.1 1195.2,543.2 1192.8,538.6" fill="#3e9eed" stroke="#3e9eed" stroke-width="0.4"/><polygon points="1184.5,546.1 1186.9,550.8 1197.5,547.9 1195.2,543.2" fill="#3e9eed" stroke="#3e9eed" stroke-width="0.4"/><polygon points="1186.9,550.8 1189.2,555.2 1199.9,552.2 1197.5,547.9" fill="#3e9eee" stroke="#3e9eee" stroke-width="0.4"/><polygon points="1189.2,555.2 1191.6,559.0 1202.3,556.0 1199.9,552.2" fill="#3fa0ef" stroke="#3fa0ef" stroke-width="0.4"/><polygon points="1191.6,559.0 1194.1,562.0 1204.7,559.0 1202.3,556.0" fill="#40a2f1" stroke="#40a2f1" stroke-width="0.4"/><polygon points="1194.1,562.0 1196.6,564.0 1207.2,560.9 1204.7,559.0" fill="#41a4f3" stroke="#41a4f3" stroke-width="0.4"/><polygon points="1196.6,564.0 1199.1,564.6 1209.7,561.5 1207.2,560.9" fill="#42a5f5" stroke="#42a5f5" stroke-width="0.4"/><polygon points="1199.1,564.6 1201.9,563.9 1212.5,560.8 1209.7,561.5" fill="#41a4f3" stroke="#41a4f3" stroke-width="0.4"/><polygon points="1104.1,498.8 1107.0,498.3 1109.8,497.8 1112.6,497.6 1115.4,497.5 1118.2,497.6 1121.0,498.1 1123.8,498.8 1126.5,499.9 1129.2,501.2 1131.8,502.8 1134.5,504.5 1137.1,506.2 1139.7,508.1 1142.3,509.9 1145.0,511.6 1147.6,513.2 1150.2,514.7 1152.9,516.1 1155.6,517.5 1158.3,518.8 1161.0,520.2 1163.7,521.7 1166.5,523.3 1169.2,525.2 1171.9,527.3 1174.6,529.8 1177.2,533.0 1179.7,536.9 1182.1,541.4 1184.5,546.1 1186.9,550.8 1189.2,555.2 1191.6,559.0 1194.1,562.0 1196.6,564.0 1199.1,564.6 1201.9,563.9 1202.5,566.7 1199.1,567.6 1196.0,566.8 1193.0,564.5 1190.4,561.3 1187.8,557.2 1185.4,552.7 1183.0,548.0 1180.7,543.3 1178.3,539.0 1175.9,535.2 1173.5,532.2 1171.0,529.9 1168.4,527.9 1165.7,526.1 1163.1,524.4 1160.4,523.0 1157.7,521.6 1155.0,520.3 1152.3,518.9 1149.6,517.5 1146.9,516.0 1144.2,514.3 1141.6,512.5 1139.0,510.7 1136.3,508.9 1133.8,507.2 1131.2,505.5 1128.6,504.0 1126.0,502.7 1123.3,501.7 1120.7,500.9 1118.0,500.5 1115.3,500.4 1112.6,500.4 1109.9,500.7 1107.1,501.1 1104.3,501.7" fill="#5ab4fa" stroke="#5ab4fa" stroke-width="0.3"/><polygon points="1202.5,566.7 1205.9,564.2 1209.4,560.5 1213.0,556.1 1216.7,551.2 1220.3,546.1 1223.9,541.3 1227.4,537.1 1230.8,533.7 1234.0,531.6 1244.4,528.8 1241.2,530.9 1237.8,534.2 1234.3,538.4 1230.7,543.2 1227.1,548.2 1223.5,553.1 1220.0,557.5 1216.5,561.1 1213.0,563.5" fill="#10345f" stroke="#10345f" stroke-width="0.5"/><polygon points="1202.5,566.7 1205.9,564.2 1216.5,561.1 1213.0,563.5" fill="#10345f" stroke="#10345f" stroke-width="0.4"/><polygon points="1205.9,564.2 1209.4,560.5 1220.0,557.5 1216.5,561.1" fill="#10345f" stroke="#10345f" stroke-width="0.4"/><polygon points="1209.4,560.5 1213.0,556.1 1223.5,553.1 1220.0,557.5" fill="#10345f" stroke="#10345f" stroke-width="0.4"/><polygon points="1213.0,556.1 1216.7,551.2 1227.1,548.2 1223.5,553.1" fill="#10345f" stroke="#10345f" stroke-width="0.4"/><polygon points="1216.7,551.2 1220.3,546.1 1230.7,543.2 1227.1,548.2" fill="#10345f" stroke="#10345f" stroke-width="0.4"/><polygon points="1220.3,546.1 1223.9,541.3 1234.3,538.4 1230.7,543.2" fill="#10345f" stroke="#10345f" stroke-width="0.4"/><polygon points="1223.9,541.3 1227.4,537.1 1237.8,534.2 1234.3,538.4" fill="#10345f" stroke="#10345f" stroke-width="0.4"/><polygon points="1227.4,537.1 1230.8,533.7 1241.2,530.9 1237.8,534.2" fill="#10345f" stroke="#10345f" stroke-width="0.4"/><polygon points="1230.8,533.7 1234.0,531.6 1244.4,528.8 1241.2,530.9" fill="#10345f" stroke="#10345f" stroke-width="0.4"/><polygon points="1201.9,563.9 1205.0,561.6 1208.3,558.2 1211.8,553.8 1215.4,549.0 1219.0,543.9 1222.7,539.0 1226.3,534.6 1229.9,531.1 1233.3,528.8 1234.0,531.6 1230.8,533.7 1227.4,537.1 1223.9,541.3 1220.3,546.1 1216.7,551.2 1213.0,556.1 1209.4,560.5 1205.9,564.2 1202.5,566.7" fill="#5ab4fa" stroke="#5ab4fa" stroke-width="0.3"/><polygon points="1233.3,528.8 1243.7,526.0 1244.4,528.8 1234.0,531.6" fill="#1d5188" /><polygon points="967.5,527.9 969.9,529.1 972.3,530.5 974.7,532.1 977.0,533.8 979.4,535.5 981.7,537.2 984.1,538.7 986.4,540.0 988.8,541.0 991.2,541.6 993.6,541.8 996.1,541.5 1008.0,538.8 1005.5,539.1 1003.1,538.9 1000.7,538.3 998.4,537.3 996.0,536.1 993.7,534.6 991.4,532.9 989.0,531.2 986.7,529.5 984.3,527.9 981.9,526.5 979.5,525.4" fill="#ff8d1c" stroke="#ff8d1c" stroke-width="0.5"/><polygon points="967.5,527.9 969.9,529.1 981.9,526.5 979.5,525.4" fill="#ff8e1c" stroke="#ff8e1c" stroke-width="0.4"/><polygon points="969.9,529.1 972.3,530.5 984.3,527.9 981.9,526.5" fill="#ff8d1c" stroke="#ff8d1c" stroke-width="0.4"/><polygon points="972.3,530.5 974.7,532.1 986.7,529.5 984.3,527.9" fill="#fe8d1c" stroke="#fe8d1c" stroke-width="0.4"/><polygon points="974.7,532.1 977.0,533.8 989.0,531.2 986.7,529.5" fill="#fe8d1b" stroke="#fe8d1b" stroke-width="0.4"/><polygon points="977.0,533.8 979.4,535.5 991.4,532.9 989.0,531.2" fill="#fe8d1b" stroke="#fe8d1b" stroke-width="0.4"/><polygon points="979.4,535.5 981.7,537.2 993.7,534.6 991.4,532.9" fill="#fe8d1b" stroke="#fe8d1b" stroke-width="0.4"/><polygon points="981.7,537.2 984.1,538.7 996.0,536.1 993.7,534.6" fill="#ff8d1c" stroke="#ff8d1c" stroke-width="0.4"/><polygon points="984.1,538.7 986.4,540.0 998.4,537.3 996.0,536.1" fill="#ff8e1c" stroke="#ff8e1c" stroke-width="0.4"/><polygon points="986.4,540.0 988.8,541.0 1000.7,538.3 998.4,537.3" fill="#ff8e1c" stroke="#ff8e1c" stroke-width="0.4"/><polygon points="988.8,541.0 991.2,541.6 1003.1,538.9 1000.7,538.3" fill="#ff8e1c" stroke="#ff8e1c" stroke-width="0.4"/><polygon points="991.2,541.6 993.6,541.8 1005.5,539.1 1003.1,538.9" fill="#ff8e1c" stroke="#ff8e1c" stroke-width="0.4"/><polygon points="993.6,541.8 996.1,541.5 1008.0,538.8 1005.5,539.1" fill="#fe8d1c" stroke="#fe8d1c" stroke-width="0.4"/><polygon points="967.5,527.9 969.9,529.1 972.3,530.5 974.7,532.1 977.0,533.8 979.4,535.5 981.7,537.2 984.1,538.7 986.4,540.0 988.8,541.0 991.2,541.6 993.6,541.8 996.1,541.5 996.3,544.3 993.6,544.6 991.0,544.4 988.5,543.7 986.0,542.7 983.5,541.3 981.1,539.8 978.8,538.1 976.4,536.4 974.1,534.7 971.7,533.1 969.4,531.7 967.1,530.6" fill="#ffa546" stroke="#ffa546" stroke-width="0.3"/><polygon points="996.3,544.3 999.0,543.7 1001.6,542.8 1004.3,541.8 1007.0,540.9 1009.6,540.0 1012.2,539.4 1024.0,536.7 1021.5,537.3 1018.8,538.2 1016.2,539.1 1013.5,540.1 1010.8,540.9 1008.2,541.6" fill="#aa550a" stroke="#aa550a" stroke-width="0.5"/><polygon points="996.3,544.3 999.0,543.7 1010.8,540.9 1008.2,541.6" fill="#aa550a" stroke="#aa550a" stroke-width="0.4"/><polygon points="999.0,543.7 1001.6,542.8 1013.5,540.1 1010.8,540.9" fill="#aa550a" stroke="#aa550a" stroke-width="0.4"/><polygon points="1001.6,542.8 1004.3,541.8 1016.2,539.1 1013.5,540.1" fill="#aa550a" stroke="#aa550a" stroke-width="0.4"/><polygon points="1004.3,541.8 1007.0,540.9 1018.8,538.2 1016.2,539.1" fill="#aa550a" stroke="#aa550a" stroke-width="0.4"/><polygon points="1007.0,540.9 1009.6,540.0 1021.5,537.3 1018.8,538.2" fill="#aa550a" stroke="#aa550a" stroke-width="0.4"/><polygon points="1009.6,540.0 1012.2,539.4 1024.0,536.7 1021.5,537.3" fill="#aa550a" stroke="#aa550a" stroke-width="0.4"/><polygon points="996.1,541.5 998.7,540.9 1001.3,540.1 1004.0,539.1 1006.6,538.1 1009.3,537.2 1012.0,536.6 1012.2,539.4 1009.6,540.0 1007.0,540.9 1004.3,541.8 1001.6,542.8 999.0,543.7 996.3,544.3" fill="#ffa546" stroke="#ffa546" stroke-width="0.3"/><polygon points="1012.0,536.6 1014.7,536.2 1017.4,536.4 1020.0,536.9 1022.6,537.8 1025.2,538.9 1027.7,540.2 1030.2,541.6 1032.7,543.2 1035.2,544.8 1037.6,546.4 1040.1,547.9 1042.6,549.4 1045.1,550.9 1047.7,552.5 1050.2,554.2 1052.7,555.9 1055.2,557.7 1057.7,559.3 1060.2,560.9 1062.7,562.3 1065.2,563.4 1067.8,564.4 1070.4,564.9 1073.0,565.2 1075.7,565.3 1078.4,565.2 1081.2,564.9 1084.0,564.7 1086.8,564.5 1089.6,564.4 1092.4,564.4 1095.2,564.8 1097.9,565.3 1100.7,566.0 1103.4,566.8 1106.1,567.7 1108.8,568.6 1111.6,569.6 1114.3,570.7 1117.0,571.8 1119.7,572.9 1122.4,574.1 1125.2,575.3 1127.9,576.6 1130.6,578.1 1133.3,579.6 1136.0,581.1 1138.7,582.6 1141.4,584.0 1144.2,585.3 1146.9,586.5 1149.6,587.6 1152.4,588.4 1155.2,589.1 1158.1,589.7 1160.9,590.1 1163.8,590.5 1166.7,590.9 1169.6,591.4 1172.6,591.8 1175.5,592.4 1178.4,593.2 1181.3,594.1 1184.2,595.0 1187.1,596.1 1190.0,597.2 1192.9,598.4 1195.8,599.6 1198.6,600.8 1201.5,601.9 1204.4,603.0 1207.4,604.0 1218.1,600.4 1215.2,599.4 1212.3,598.3 1209.5,597.2 1206.6,596.1 1203.7,594.9 1200.9,593.8 1198.0,592.6 1195.1,591.6 1192.3,590.6 1189.4,589.7 1186.5,589.0 1183.5,588.4 1180.6,588.0 1177.7,587.5 1174.8,587.2 1172.0,586.8 1169.1,586.3 1166.3,585.8 1163.5,585.1 1160.7,584.2 1158.0,583.2 1155.3,582.0 1152.6,580.7 1149.9,579.3 1147.2,577.8 1144.5,576.3 1141.8,574.9 1139.1,573.4 1136.4,572.1 1133.7,570.9 1131.0,569.8 1128.3,568.7 1125.6,567.6 1122.9,566.5 1120.2,565.5 1117.5,564.6 1114.8,563.7 1112.1,562.9 1109.3,562.3 1106.6,561.7 1103.8,561.4 1101.0,561.3 1098.2,561.4 1095.4,561.7 1092.7,561.9 1089.9,562.1 1087.2,562.3 1084.5,562.2 1081.9,561.9 1079.3,561.3 1076.8,560.4 1074.3,559.3 1071.8,557.9 1069.3,556.4 1066.8,554.8 1064.3,553.0 1061.8,551.3 1059.3,549.6 1056.8,548.0 1054.3,546.5 1051.8,545.1 1049.3,543.6 1046.9,542.0 1044.4,540.4 1041.9,538.9 1039.4,537.4 1036.9,536.2 1034.4,535.1 1031.8,534.2 1029.2,533.7 1026.6,533.6 1023.9,533.9" fill="#ff8e1c" stroke="#ff8e1c" stroke-width="0.5"/><polygon points="1012.0,536.6 1014.7,536.2 1026.6,533.6 1023.9,533.9" fill="#fe8d1b" stroke="#fe8d1b" stroke-width="0.4"/><polygon points="1014.7,536.2 1017.4,536.4 1029.2,533.7 1026.6,533.6" fill="#ff8e1c" stroke="#ff8e1c" stroke-width="0.4"/><polygon points="1017.4,536.4 1020.0,536.9 1031.8,534.2 1029.2,533.7" fill="#ff8e1c" stroke="#ff8e1c" stroke-width="0.4"/><polygon points="1020.0,536.9 1022.6,537.8 1034.4,535.1 1031.8,534.2" fill="#ff8e1c" stroke="#ff8e1c" stroke-width="0.4"/><polygon points="1022.6,537.8 1025.2,538.9 1036.9,536.2 1034.4,535.1" fill="#ff8e1c" stroke="#ff8e1c" stroke-width="0.4"/><polygon points="1025.2,538.9 1027.7,540.2 1039.4,537.4 1036.9,536.2" fill="#ff8e1c" stroke="#ff8e1c" stroke-width="0.4"/><polygon points="1027.7,540.2 1030.2,541.6 1041.9,538.9 1039.4,537.4" fill="#ff8d1c" stroke="#ff8d1c" stroke-width="0.4"/><polygon points="1030.2,541.6 1032.7,543.2 1044.4,540.4 1041.9,538.9" fill="#ff8d1c" stroke="#ff8d1c" stroke-width="0.4"/><polygon points="1032.7,543.2 1035.2,544.8 1046.9,542.0 1044.4,540.4" fill="#fe8d1c" stroke="#fe8d1c" stroke-width="0.4"/><polygon points="1035.2,544.8 1037.6,546.4 1049.3,543.6 1046.9,542.0" fill="#fe8d1c" stroke="#fe8d1c" stroke-width="0.4"/><polygon points="1037.6,546.4 1040.1,547.9 1051.8,545.1 1049.3,543.6" fill="#ff8d1c" stroke="#ff8d1c" stroke-width="0.4"/><polygon points="1040.1,547.9 1042.6,549.4 1054.3,546.5 1051.8,545.1" fill="#ff8d1c" stroke="#ff8d1c" stroke-width="0.4"/><polygon points="1042.6,549.4 1045.1,550.9 1056.8,548.0 1054.3,546.5" fill="#ff8d1c" stroke="#ff8d1c" stroke-width="0.4"/><polygon points="1045.1,550.9 1047.7,552.5 1059.3,549.6 1056.8,548.0" fill="#fe8d1c" stroke="#fe8d1c" stroke-width="0.4"/><polygon points="1047.7,552.5 1050.2,554.2 1061.8,551.3 1059.3,549.6" fill="#fe8d1c" stroke="#fe8d1c" stroke-width="0.4"/><polygon points="1050.2,554.2 1052.7,555.9 1064.3,553.0 1061.8,551.3" fill="#fe8d1b" stroke="#fe8d1b" stroke-width="0.4"/><polygon points="1052.7,555.9 1055.2,557.7 1066.8,554.8 1064.3,553.0" fill="#fe8d1b" stroke="#fe8d1b" stroke-width="0.4"/><polygon points="1055.2,557.7 1057.7,559.3 1069.3,556.4 1066.8,554.8" fill="#fe8d1c" stroke="#fe8d1c" stroke-width="0.4"/><polygon points="1057.7,559.3 1060.2,560.9 1071.8,557.9 1069.3,556.4" fill="#ff8d1c" stroke="#ff8d1c" stroke-width="0.4"/><polygon points="1060.2,560.9 1062.7,562.3 1074.3,559.3 1071.8,557.9" fill="#ff8e1c" stroke="#ff8e1c" stroke-width="0.4"/><polygon points="1062.7,562.3 1065.2,563.4 1076.8,560.4 1074.3,559.3" fill="#ff8e1c" stroke="#ff8e1c" stroke-width="0.4"/><polygon points="1065.2,563.4 1067.8,564.4 1079.3,561.3 1076.8,560.4" fill="#ff8e1c" stroke="#ff8e1c" stroke-width="0.4"/><polygon points="1067.8,564.4 1070.4,564.9 1081.9,561.9 1079.3,561.3" fill="#ff8e1c" stroke="#ff8e1c" stroke-width="0.4"/><polygon points="1070.4,564.9 1073.0,565.2 1084.5,562.2 1081.9,561.9" fill="#ff8e1c" stroke="#ff8e1c" stroke-width="0.4"/><polygon points="1073.0,565.2 1075.7,565.3 1087.2,562.3 1084.5,562.2" fill="#ff8e1c" stroke="#ff8e1c" stroke-width="0.4"/><polygon points="1075.7,565.3 1078.4,565.2 1089.9,562.1 1087.2,562.3" fill="#ff8d1c" stroke="#ff8d1c" stroke-width="0.4"/><polygon points="1078.4,565.2 1081.2,564.9 1092.7,561.9 1089.9,562.1" fill="#fe8d1c" stroke="#fe8d1c" stroke-width="0.4"/><polygon points="1081.2,564.9 1084.0,564.7 1095.4,561.7 1092.7,561.9" fill="#fe8d1c" stroke="#fe8d1c" stroke-width="0.4"/><polygon points="1084.0,564.7 1086.8,564.5 1098.2,561.4 1095.4,561.7" fill="#fe8d1c" stroke="#fe8d1c" stroke-width="0.4"/><polygon points="1086.8,564.5 1089.6,564.4 1101.0,561.3 1098.2,561.4" fill="#ff8d1c" stroke="#ff8d1c" stroke-width="0.4"/><polygon points="1089.6,564.4 1092.4,564.4 1103.8,561.4 1101.0,561.3" fill="#ff8e1c" stroke="#ff8e1c" stroke-width="0.4"/><polygon points="1092.4,564.4 1095.2,564.8 1106.6,561.7 1103.8,561.4" fill="#ff8e1c" stroke="#ff8e1c" stroke-width="0.4"/><polygon points="1095.2,564.8 1097.9,565.3 1109.3,562.3 1106.6,561.7" fill="#ff8e1c" stroke="#ff8e1c" stroke-width="0.4"/><polygon points="1097.9,565.3 1100.7,566.0 1112.1,562.9 1109.3,562.3" fill="#ff8e1c" stroke="#ff8e1c" stroke-width="0.4"/><polygon points="1100.7,566.0 1103.4,566.8 1114.8,563.7 1112.1,562.9" fill="#ff8e1c" stroke="#ff8e1c" stroke-width="0.4"/><polygon points="1103.4,566.8 1106.1,567.7 1117.5,564.6 1114.8,563.7" fill="#ff8e1c" stroke="#ff8e1c" stroke-width="0.4"/><polygon points="1106.1,567.7 1108.8,568.6 1120.2,565.5 1117.5,564.6" fill="#ff8e1c" stroke="#ff8e1c" stroke-width="0.4"/><polygon points="1108.8,568.6 1111.6,569.6 1122.9,566.5 1120.2,565.5" fill="#ff8e1c" stroke="#ff8e1c" stroke-width="0.4"/><polygon points="1111.6,569.6 1114.3,570.7 1125.6,567.6 1122.9,566.5" fill="#ff8e1c" stroke="#ff8e1c" stroke-width="0.4"/><polygon points="1114.3,570.7 1117.0,571.8 1128.3,568.7 1125.6,567.6" fill="#ff8e1c" stroke="#ff8e1c" stroke-width="0.4"/><polygon points="1117.0,571.8 1119.7,572.9 1131.0,569.8 1128.3,568.7" fill="#ff8e1c" stroke="#ff8e1c" stroke-width="0.4"/><polygon points="1119.7,572.9 1122.4,574.1 1133.7,570.9 1131.0,569.8" fill="#ff8e1c" stroke="#ff8e1c" stroke-width="0.4"/><polygon points="1122.4,574.1 1125.2,575.3 1136.4,572.1 1133.7,570.9" fill="#ff8e1c" stroke="#ff8e1c" stroke-width="0.4"/><polygon points="1125.2,575.3 1127.9,576.6 1139.1,573.4 1136.4,572.1" fill="#ff8e1c" stroke="#ff8e1c" stroke-width="0.4"/><polygon points="1127.9,576.6 1130.6,578.1 1141.8,574.9 1139.1,573.4" fill="#ff8e1c" stroke="#ff8e1c" stroke-width="0.4"/><polygon points="1130.6,578.1 1133.3,579.6 1144.5,576.3 1141.8,574.9" fill="#ff8e1c" stroke="#ff8e1c" stroke-width="0.4"/><polygon points="1133.3,579.6 1136.0,581.1 1147.2,577.8 1144.5,576.3" fill="#ff8e1c" stroke="#ff8e1c" stroke-width="0.4"/><polygon points="1136.0,581.1 1138.7,582.6 1149.9,579.3 1147.2,577.8" fill="#ff8e1c" stroke="#ff8e1c" stroke-width="0.4"/><polygon points="1138.7,582.6 1141.4,584.0 1152.6,580.7 1149.9,579.3" fill="#ff8e1c" stroke="#ff8e1c" stroke-width="0.4"/><polygon points="1141.4,584.0 1144.2,585.3 1155.3,582.0 1152.6,580.7" fill="#ff8e1c" stroke="#ff8e1c" stroke-width="0.4"/><polygon points="1144.2,585.3 1146.9,586.5 1158.0,583.2 1155.3,582.0" fill="#ff8e1c" stroke="#ff8e1c" stroke-width="0.4"/><polygon points="1146.9,586.5 1149.6,587.6 1160.7,584.2 1158.0,583.2" fill="#ff8e1c" stroke="#ff8e1c" stroke-width="0.4"/><polygon points="1149.6,587.6 1152.4,588.4 1163.5,585.1 1160.7,584.2" fill="#ff8e1c" stroke="#ff8e1c" stroke-width="0.4"/><polygon points="1152.4,588.4 1155.2,589.1 1166.3,585.8 1163.5,585.1" fill="#ff8e1c" stroke="#ff8e1c" stroke-width="0.4"/><polygon points="1155.2,589.1 1158.1,589.7 1169.1,586.3 1166.3,585.8" fill="#ff8e1c" stroke="#ff8e1c" stroke-width="0.4"/><polygon points="1158.1,589.7 1160.9,590.1 1172.0,586.8 1169.1,586.3" fill="#ff8e1c" stroke="#ff8e1c" stroke-width="0.4"/><polygon points="1160.9,590.1 1163.8,590.5 1174.8,587.2 1172.0,586.8" fill="#ff8e1c" stroke="#ff8e1c" stroke-width="0.4"/><polygon points="1163.8,590.5 1166.7,590.9 1177.7,587.5 1174.8,587.2" fill="#ff8e1c" stroke="#ff8e1c" stroke-width="0.4"/><polygon points="1166.7,590.9 1169.6,591.4 1180.6,588.0 1177.7,587.5" fill="#ff8e1c" stroke="#ff8e1c" stroke-width="0.4"/><polygon points="1169.6,591.4 1172.6,591.8 1183.5,588.4 1180.6,588.0" fill="#ff8e1c" stroke="#ff8e1c" stroke-width="0.4"/><polygon points="1172.6,591.8 1175.5,592.4 1186.5,589.0 1183.5,588.4" fill="#ff8e1c" stroke="#ff8e1c" stroke-width="0.4"/><polygon points="1175.5,592.4 1178.4,593.2 1189.4,589.7 1186.5,589.0" fill="#ff8e1c" stroke="#ff8e1c" stroke-width="0.4"/><polygon points="1178.4,593.2 1181.3,594.1 1192.3,590.6 1189.4,589.7" fill="#ff8e1c" stroke="#ff8e1c" stroke-width="0.4"/><polygon points="1181.3,594.1 1184.2,595.0 1195.1,591.6 1192.3,590.6" fill="#ff8e1c" stroke="#ff8e1c" stroke-width="0.4"/><polygon points="1184.2,595.0 1187.1,596.1 1198.0,592.6 1195.1,591.6" fill="#ff8e1c" stroke="#ff8e1c" stroke-width="0.4"/><polygon points="1187.1,596.1 1190.0,597.2 1200.9,593.8 1198.0,592.6" fill="#ff8e1c" stroke="#ff8e1c" stroke-width="0.4"/><polygon points="1190.0,597.2 1192.9,598.4 1203.7,594.9 1200.9,593.8" fill="#ff8e1c" stroke="#ff8e1c" stroke-width="0.4"/><polygon points="1192.9,598.4 1195.8,599.6 1206.6,596.1 1203.7,594.9" fill="#ff8e1c" stroke="#ff8e1c" stroke-width="0.4"/><polygon points="1195.8,599.6 1198.6,600.8 1209.5,597.2 1206.6,596.1" fill="#ff8e1c" stroke="#ff8e1c" stroke-width="0.4"/><polygon points="1198.6,600.8 1201.5,601.9 1212.3,598.3 1209.5,597.2" fill="#ff8e1c" stroke="#ff8e1c" stroke-width="0.4"/><polygon points="1201.5,601.9 1204.4,603.0 1215.2,599.4 1212.3,598.3" fill="#ff8e1c" stroke="#ff8e1c" stroke-width="0.4"/><polygon points="1204.4,603.0 1207.4,604.0 1218.1,600.4 1215.2,599.4" fill="#ff8e1c" stroke="#ff8e1c" stroke-width="0.4"/><polygon points="1012.0,536.6 1014.7,536.2 1017.4,536.4 1020.0,536.9 1022.6,537.8 1025.2,538.9 1027.7,540.2 1030.2,541.6 1032.7,543.2 1035.2,544.8 1037.6,546.4 1040.1,547.9 1042.6,549.4 1045.1,550.9 1047.7,552.5 1050.2,554.2 1052.7,555.9 1055.2,557.7 1057.7,559.3 1060.2,560.9 1062.7,562.3 1065.2,563.4 1067.8,564.4 1070.4,564.9 1073.0,565.2 1075.7,565.3 1078.4,565.2 1081.2,564.9 1084.0,564.7 1086.8,564.5 1089.6,564.4 1092.4,564.4 1095.2,564.8 1097.9,565.3 1100.7,566.0 1103.4,566.8 1106.1,567.7 1108.8,568.6 1111.6,569.6 1114.3,570.7 1117.0,571.8 1119.7,572.9 1122.4,574.1 1125.2,575.3 1127.9,576.6 1130.6,578.1 1133.3,579.6 1136.0,581.1 1138.7,582.6 1141.4,584.0 1144.2,585.3 1146.9,586.5 1149.6,587.6 1152.4,588.4 1155.2,589.1 1158.1,589.7 1160.9,590.1 1163.8,590.5 1166.7,590.9 1169.6,591.4 1172.6,591.8 1175.5,592.4 1178.4,593.2 1181.3,594.1 1184.2,595.0 1187.1,596.1 1190.0,597.2 1192.9,598.4 1195.8,599.6 1198.6,600.8 1201.5,601.9 1204.4,603.0 1207.4,604.0 1206.9,606.9 1204.0,605.9 1201.0,604.8 1198.1,603.7 1195.2,602.5 1192.4,601.3 1189.5,600.2 1186.6,599.0 1183.8,598.0 1180.9,597.0 1178.1,596.1 1175.2,595.4 1172.3,594.8 1169.4,594.3 1166.5,593.9 1163.6,593.5 1160.7,593.1 1157.8,592.6 1154.9,592.1 1152.1,591.4 1149.2,590.5 1146.4,589.4 1143.6,588.2 1140.8,586.8 1138.1,585.4 1135.4,583.9 1132.7,582.4 1130.0,580.9 1127.3,579.4 1124.6,578.1 1121.9,576.9 1119.2,575.8 1116.5,574.6 1113.8,573.5 1111.1,572.5 1108.4,571.5 1105.7,570.5 1103.0,569.6 1100.4,568.9 1097.7,568.2 1095.0,567.7 1092.3,567.3 1089.6,567.3 1086.8,567.4 1084.0,567.6 1081.3,567.8 1078.5,568.0 1075.7,568.2 1072.9,568.1 1070.2,567.8 1067.5,567.2 1064.8,566.2 1062.2,565.0 1059.6,563.6 1057.0,562.0 1054.5,560.3 1052.0,558.6 1049.5,556.8 1047.0,555.1 1044.5,553.5 1042.0,552.0 1039.5,550.6 1037.0,549.0 1034.5,547.4 1032.1,545.8 1029.6,544.3 1027.1,542.8 1024.7,541.6 1022.2,540.5 1019.7,539.7 1017.3,539.2 1014.8,539.0 1012.2,539.4" fill="#ffa546" stroke="#ffa546" stroke-width="0.3"/><polygon points="1207.4,604.0 1218.1,600.4 1217.7,603.3 1206.9,606.9" fill="#c0620d" /><polygon points="944.1,561.6 946.6,562.3 949.0,563.0 951.5,563.7 953.9,564.4 956.4,565.1 958.8,565.8 961.3,566.5 963.8,567.2 966.3,567.9 968.7,568.6 971.2,569.3 973.7,570.0 976.2,570.8 978.7,571.5 981.2,572.2 983.7,572.9 986.3,573.6 988.8,574.4 991.3,575.1 993.9,575.8 996.4,576.5 998.9,577.3 1001.5,578.0 1004.1,578.7 1006.6,579.5 1009.2,580.2 1011.8,580.9 1014.4,581.7 1016.9,582.4 1019.5,583.2 1022.1,583.9 1024.7,584.7 1027.4,585.4 1030.0,586.2 1032.6,586.9 1035.2,587.7 1037.9,588.4 1040.5,589.2 1043.1,589.9 1045.8,590.7 1048.4,591.4 1051.1,592.2 1053.8,593.0 1056.5,593.7 1059.1,594.5 1061.8,595.3 1064.5,596.0 1067.2,596.8 1069.9,597.6 1072.6,598.4 1075.3,599.2 1078.1,599.9 1080.8,600.7 1083.5,601.5 1086.3,602.3 1089.0,603.1 1091.8,603.9 1094.5,604.7 1097.3,605.5 1100.1,606.3 1102.9,607.2 1105.6,608.1 1108.4,609.0 1111.2,609.9 1114.0,610.8 1116.8,611.8 1119.6,612.7 1122.4,613.6 1125.2,614.5 1128.1,615.4 1130.9,616.2 1133.7,617.1 1136.6,617.9 1139.5,618.6 1142.3,619.4 1145.2,620.2 1148.1,621.0 1151.0,621.8 1153.9,622.7 1156.8,623.5 1159.7,624.4 1162.6,625.3 1165.5,626.2 1168.5,627.2 1171.4,628.1 1174.3,629.0 1177.3,630.0 1180.2,630.9 1183.2,631.8 1186.1,632.7 1197.3,628.8 1194.3,627.9 1191.4,627.0 1188.5,626.1 1185.5,625.1 1182.6,624.2 1179.7,623.3 1176.8,622.4 1173.9,621.5 1171.0,620.6 1168.1,619.7 1165.2,618.9 1162.4,618.1 1159.5,617.3 1156.6,616.5 1153.7,615.7 1150.9,614.9 1148.0,614.1 1145.2,613.3 1142.4,612.5 1139.5,611.7 1136.7,610.8 1133.9,610.0 1131.1,609.1 1128.4,608.2 1125.6,607.2 1122.8,606.3 1120.0,605.4 1117.3,604.5 1114.5,603.6 1111.7,602.8 1109.0,602.0 1106.2,601.1 1103.5,600.3 1100.7,599.6 1098.0,598.8 1095.3,598.0 1092.6,597.2 1089.8,596.5 1087.1,595.7 1084.4,594.9 1081.7,594.2 1079.0,593.4 1076.4,592.7 1073.7,591.9 1071.0,591.1 1068.3,590.4 1065.7,589.6 1063.0,588.9 1060.4,588.1 1057.7,587.4 1055.1,586.6 1052.5,585.9 1049.8,585.1 1047.2,584.4 1044.6,583.6 1042.0,582.9 1039.4,582.2 1036.8,581.4 1034.2,580.7 1031.6,580.0 1029.0,579.2 1026.4,578.5 1023.9,577.8 1021.3,577.0 1018.8,576.3 1016.2,575.6 1013.7,574.9 1011.1,574.2 1008.6,573.4 1006.0,572.7 1003.5,572.0 1001.0,571.3 998.5,570.6 996.0,569.9 993.5,569.2 991.0,568.4 988.5,567.7 986.0,567.0 983.5,566.3 981.0,565.6 978.6,564.9 976.1,564.2 973.6,563.5 971.2,562.8 968.7,562.1 966.3,561.4 963.8,560.7 961.4,560.1 959.0,559.4 956.6,558.7" fill="#b4b4b4" stroke="#b4b4b4" stroke-width="0.5"/><polygon points="944.1,561.6 946.6,562.3 959.0,559.4 956.6,558.7" fill="#b4b4b4" stroke="#b4b4b4" stroke-width="0.4"/><polygon points="946.6,562.3 949.0,563.0 961.4,560.1 959.0,559.4" fill="#b4b4b4" stroke="#b4b4b4" stroke-width="0.4"/><polygon points="949.0,563.0 951.5,563.7 963.8,560.7 961.4,560.1" fill="#b4b4b4" stroke="#b4b4b4" stroke-width="0.4"/><polygon points="951.5,563.7 953.9,564.4 966.3,561.4 963.8,560.7" fill="#b4b4b4" stroke="#b4b4b4" stroke-width="0.4"/><polygon points="953.9,564.4 956.4,565.1 968.7,562.1 966.3,561.4" fill="#b4b4b4" stroke="#b4b4b4" stroke-width="0.4"/><polygon points="956.4,565.1 958.8,565.8 971.2,562.8 968.7,562.1" fill="#b4b4b4" stroke="#b4b4b4" stroke-width="0.4"/><polygon points="958.8,565.8 961.3,566.5 973.6,563.5 971.2,562.8" fill="#b4b4b4" stroke="#b4b4b4" stroke-width="0.4"/><polygon points="961.3,566.5 963.8,567.2 976.1,564.2 973.6,563.5" fill="#b4b4b4" stroke="#b4b4b4" stroke-width="0.4"/><polygon points="963.8,567.2 966.3,567.9 978.6,564.9 976.1,564.2" fill="#b4b4b4" stroke="#b4b4b4" stroke-width="0.4"/><polygon points="966.3,567.9 968.7,568.6 981.0,565.6 978.6,564.9" fill="#b4b4b4" stroke="#b4b4b4" stroke-width="0.4"/><polygon points="968.7,568.6 971.2,569.3 983.5,566.3 981.0,565.6" fill="#b4b4b4" stroke="#b4b4b4" stroke-width="0.4"/><polygon points="971.2,569.3 973.7,570.0 986.0,567.0 983.5,566.3" fill="#b4b4b4" stroke="#b4b4b4" stroke-width="0.4"/><polygon points="973.7,570.0 976.2,570.8 988.5,567.7 986.0,567.0" fill="#b4b4b4" stroke="#b4b4b4" stroke-width="0.4"/><polygon points="976.2,570.8 978.7,571.5 991.0,568.4 988.5,567.7" fill="#b4b4b4" stroke="#b4b4b4" stroke-width="0.4"/><polygon points="978.7,571.5 981.2,572.2 993.5,569.2 991.0,568.4" fill="#b4b4b4" stroke="#b4b4b4" stroke-width="0.4"/><polygon points="981.2,572.2 983.7,572.9 996.0,569.9 993.5,569.2" fill="#b4b4b4" stroke="#b4b4b4" stroke-width="0.4"/><polygon points="983.7,572.9 986.3,573.6 998.5,570.6 996.0,569.9" fill="#b4b4b4" stroke="#b4b4b4" stroke-width="0.4"/><polygon points="986.3,573.6 988.8,574.4 1001.0,571.3 998.5,570.6" fill="#b4b4b4" stroke="#b4b4b4" stroke-width="0.4"/><polygon points="988.8,574.4 991.3,575.1 1003.5,572.0 1001.0,571.3" fill="#b4b4b4" stroke="#b4b4b4" stroke-width="0.4"/><polygon points="991.3,575.1 993.9,575.8 1006.0,572.7 1003.5,572.0" fill="#b4b4b4" stroke="#b4b4b4" stroke-width="0.4"/><polygon points="993.9,575.8 996.4,576.5 1008.6,573.4 1006.0,572.7" fill="#b4b4b4" stroke="#b4b4b4" stroke-width="0.4"/><polygon points="996.4,576.5 998.9,577.3 1011.1,574.2 1008.6,573.4" fill="#b4b4b4" stroke="#b4b4b4" stroke-width="0.4"/><polygon points="998.9,577.3 1001.5,578.0 1013.7,574.9 1011.1,574.2" fill="#b4b4b4" stroke="#b4b4b4" stroke-width="0.4"/><polygon points="1001.5,578.0 1004.1,578.7 1016.2,575.6 1013.7,574.9" fill="#b4b4b4" stroke="#b4b4b4" stroke-width="0.4"/><polygon points="1004.1,578.7 1006.6,579.5 1018.8,576.3 1016.2,575.6" fill="#b4b4b4" stroke="#b4b4b4" stroke-width="0.4"/><polygon points="1006.6,579.5 1009.2,580.2 1021.3,577.0 1018.8,576.3" fill="#b4b4b4" stroke="#b4b4b4" stroke-width="0.4"/><polygon points="1009.2,580.2 1011.8,580.9 1023.9,577.8 1021.3,577.0" fill="#b4b4b4" stroke="#b4b4b4" stroke-width="0.4"/><polygon points="1011.8,580.9 1014.4,581.7 1026.4,578.5 1023.9,577.8" fill="#b4b4b4" stroke="#b4b4b4" stroke-width="0.4"/><polygon points="1014.4,581.7 1016.9,582.4 1029.0,579.2 1026.4,578.5" fill="#b4b4b4" stroke="#b4b4b4" stroke-width="0.4"/><polygon points="1016.9,582.4 1019.5,583.2 1031.6,580.0 1029.0,579.2" fill="#b4b4b4" stroke="#b4b4b4" stroke-width="0.4"/><polygon points="1019.5,583.2 1022.1,583.9 1034.2,580.7 1031.6,580.0" fill="#b4b4b4" stroke="#b4b4b4" stroke-width="0.4"/><polygon points="1022.1,583.9 1024.7,584.7 1036.8,581.4 1034.2,580.7" fill="#b4b4b4" stroke="#b4b4b4" stroke-width="0.4"/><polygon points="1024.7,584.7 1027.4,585.4 1039.4,582.2 1036.8,581.4" fill="#b4b4b4" stroke="#b4b4b4" stroke-width="0.4"/><polygon points="1027.4,585.4 1030.0,586.2 1042.0,582.9 1039.4,582.2" fill="#b4b4b4" stroke="#b4b4b4" stroke-width="0.4"/><polygon points="1030.0,586.2 1032.6,586.9 1044.6,583.6 1042.0,582.9" fill="#b4b4b4" stroke="#b4b4b4" stroke-width="0.4"/><polygon points="1032.6,586.9 1035.2,587.7 1047.2,584.4 1044.6,583.6" fill="#b4b4b4" stroke="#b4b4b4" stroke-width="0.4"/><polygon points="1035.2,587.7 1037.9,588.4 1049.8,585.1 1047.2,584.4" fill="#b4b4b4" stroke="#b4b4b4" stroke-width="0.4"/><polygon points="1037.9,588.4 1040.5,589.2 1052.5,585.9 1049.8,585.1" fill="#b4b4b4" stroke="#b4b4b4" stroke-width="0.4"/><polygon points="1040.5,589.2 1043.1,589.9 1055.1,586.6 1052.5,585.9" fill="#b4b4b4" stroke="#b4b4b4" stroke-width="0.4"/><polygon points="1043.1,589.9 1045.8,590.7 1057.7,587.4 1055.1,586.6" fill="#b4b4b4" stroke="#b4b4b4" stroke-width="0.4"/><polygon points="1045.8,590.7 1048.4,591.4 1060.4,588.1 1057.7,587.4" fill="#b4b4b4" stroke="#b4b4b4" stroke-width="0.4"/><polygon points="1048.4,591.4 1051.1,592.2 1063.0,588.9 1060.4,588.1" fill="#b4b4b4" stroke="#b4b4b4" stroke-width="0.4"/><polygon points="1051.1,592.2 1053.8,593.0 1065.7,589.6 1063.0,588.9" fill="#b4b4b4" stroke="#b4b4b4" stroke-width="0.4"/><polygon points="1053.8,593.0 1056.5,593.7 1068.3,590.4 1065.7,589.6" fill="#b4b4b4" stroke="#b4b4b4" stroke-width="0.4"/><polygon points="1056.5,593.7 1059.1,594.5 1071.0,591.1 1068.3,590.4" fill="#b4b4b4" stroke="#b4b4b4" stroke-width="0.4"/><polygon points="1059.1,594.5 1061.8,595.3 1073.7,591.9 1071.0,591.1" fill="#b4b4b4" stroke="#b4b4b4" stroke-width="0.4"/><polygon points="1061.8,595.3 1064.5,596.0 1076.4,592.7 1073.7,591.9" fill="#b4b4b4" stroke="#b4b4b4" stroke-width="0.4"/><polygon points="1064.5,596.0 1067.2,596.8 1079.0,593.4 1076.4,592.7" fill="#b4b4b4" stroke="#b4b4b4" stroke-width="0.4"/><polygon points="1067.2,596.8 1069.9,597.6 1081.7,594.2 1079.0,593.4" fill="#b4b4b4" stroke="#b4b4b4" stroke-width="0.4"/><polygon points="1069.9,597.6 1072.6,598.4 1084.4,594.9 1081.7,594.2" fill="#b4b4b4" stroke="#b4b4b4" stroke-width="0.4"/><polygon points="1072.6,598.4 1075.3,599.2 1087.1,595.7 1084.4,594.9" fill="#b4b4b4" stroke="#b4b4b4" stroke-width="0.4"/><polygon points="1075.3,599.2 1078.1,599.9 1089.8,596.5 1087.1,595.7" fill="#b4b4b4" stroke="#b4b4b4" stroke-width="0.4"/><polygon points="1078.1,599.9 1080.8,600.7 1092.6,597.2 1089.8,596.5" fill="#b4b4b4" stroke="#b4b4b4" stroke-width="0.4"/><polygon points="1080.8,600.7 1083.5,601.5 1095.3,598.0 1092.6,597.2" fill="#b4b4b4" stroke="#b4b4b4" stroke-width="0.4"/><polygon points="1083.5,601.5 1086.3,602.3 1098.0,598.8 1095.3,598.0" fill="#b4b4b4" stroke="#b4b4b4" stroke-width="0.4"/><polygon points="1086.3,602.3 1089.0,603.1 1100.7,599.6 1098.0,598.8" fill="#b4b4b4" stroke="#b4b4b4" stroke-width="0.4"/><polygon points="1089.0,603.1 1091.8,603.9 1103.5,600.3 1100.7,599.6" fill="#b4b4b4" stroke="#b4b4b4" stroke-width="0.4"/><polygon points="1091.8,603.9 1094.5,604.7 1106.2,601.1 1103.5,600.3" fill="#b4b4b4" stroke="#b4b4b4" stroke-width="0.4"/><polygon points="1094.5,604.7 1097.3,605.5 1109.0,602.0 1106.2,601.1" fill="#b4b4b4" stroke="#b4b4b4" stroke-width="0.4"/><polygon points="1097.3,605.5 1100.1,606.3 1111.7,602.8 1109.0,602.0" fill="#b4b4b4" stroke="#b4b4b4" stroke-width="0.4"/><polygon points="1100.1,606.3 1102.9,607.2 1114.5,603.6 1111.7,602.8" fill="#b4b4b4" stroke="#b4b4b4" stroke-width="0.4"/><polygon points="1102.9,607.2 1105.6,608.1 1117.3,604.5 1114.5,603.6" fill="#b4b4b4" stroke="#b4b4b4" stroke-width="0.4"/><polygon points="1105.6,608.1 1108.4,609.0 1120.0,605.4 1117.3,604.5" fill="#b4b4b4" stroke="#b4b4b4" stroke-width="0.4"/><polygon points="1108.4,609.0 1111.2,609.9 1122.8,606.3 1120.0,605.4" fill="#b4b4b4" stroke="#b4b4b4" stroke-width="0.4"/><polygon points="1111.2,609.9 1114.0,610.8 1125.6,607.2 1122.8,606.3" fill="#b4b4b4" stroke="#b4b4b4" stroke-width="0.4"/><polygon points="1114.0,610.8 1116.8,611.8 1128.4,608.2 1125.6,607.2" fill="#b4b4b4" stroke="#b4b4b4" stroke-width="0.4"/><polygon points="1116.8,611.8 1119.6,612.7 1131.1,609.1 1128.4,608.2" fill="#b4b4b4" stroke="#b4b4b4" stroke-width="0.4"/><polygon points="1119.6,612.7 1122.4,613.6 1133.9,610.0 1131.1,609.1" fill="#b4b4b4" stroke="#b4b4b4" stroke-width="0.4"/><polygon points="1122.4,613.6 1125.2,614.5 1136.7,610.8 1133.9,610.0" fill="#b4b4b4" stroke="#b4b4b4" stroke-width="0.4"/><polygon points="1125.2,614.5 1128.1,615.4 1139.5,611.7 1136.7,610.8" fill="#b4b4b4" stroke="#b4b4b4" stroke-width="0.4"/><polygon points="1128.1,615.4 1130.9,616.2 1142.4,612.5 1139.5,611.7" fill="#b4b4b4" stroke="#b4b4b4" stroke-width="0.4"/><polygon points="1130.9,616.2 1133.7,617.1 1145.2,613.3 1142.4,612.5" fill="#b4b4b4" stroke="#b4b4b4" stroke-width="0.4"/><polygon points="1133.7,617.1 1136.6,617.9 1148.0,614.1 1145.2,613.3" fill="#b4b4b4" stroke="#b4b4b4" stroke-width="0.4"/><polygon points="1136.6,617.9 1139.5,618.6 1150.9,614.9 1148.0,614.1" fill="#b4b4b4" stroke="#b4b4b4" stroke-width="0.4"/><polygon points="1139.5,618.6 1142.3,619.4 1153.7,615.7 1150.9,614.9" fill="#b4b4b4" stroke="#b4b4b4" stroke-width="0.4"/><polygon points="1142.3,619.4 1145.2,620.2 1156.6,616.5 1153.7,615.7" fill="#b4b4b4" stroke="#b4b4b4" stroke-width="0.4"/><polygon points="1145.2,620.2 1148.1,621.0 1159.5,617.3 1156.6,616.5" fill="#b4b4b4" stroke="#b4b4b4" stroke-width="0.4"/><polygon points="1148.1,621.0 1151.0,621.8 1162.4,618.1 1159.5,617.3" fill="#b4b4b4" stroke="#b4b4b4" stroke-width="0.4"/><polygon points="1151.0,621.8 1153.9,622.7 1165.2,618.9 1162.4,618.1" fill="#b4b4b4" stroke="#b4b4b4" stroke-width="0.4"/><polygon points="1153.9,622.7 1156.8,623.5 1168.1,619.7 1165.2,618.9" fill="#b4b4b4" stroke="#b4b4b4" stroke-width="0.4"/><polygon points="1156.8,623.5 1159.7,624.4 1171.0,620.6 1168.1,619.7" fill="#b4b4b4" stroke="#b4b4b4" stroke-width="0.4"/><polygon points="1159.7,624.4 1162.6,625.3 1173.9,621.5 1171.0,620.6" fill="#b4b4b4" stroke="#b4b4b4" stroke-width="0.4"/><polygon points="1162.6,625.3 1165.5,626.2 1176.8,622.4 1173.9,621.5" fill="#b4b4b4" stroke="#b4b4b4" stroke-width="0.4"/><polygon points="1165.5,626.2 1168.5,627.2 1179.7,623.3 1176.8,622.4" fill="#b4b4b4" stroke="#b4b4b4" stroke-width="0.4"/><polygon points="1168.5,627.2 1171.4,628.1 1182.6,624.2 1179.7,623.3" fill="#b4b4b4" stroke="#b4b4b4" stroke-width="0.4"/><polygon points="1171.4,628.1 1174.3,629.0 1185.5,625.1 1182.6,624.2" fill="#b4b4b4" stroke="#b4b4b4" stroke-width="0.4"/><polygon points="1174.3,629.0 1177.3,630.0 1188.5,626.1 1185.5,625.1" fill="#b4b4b4" stroke="#b4b4b4" stroke-width="0.4"/><polygon points="1177.3,630.0 1180.2,630.9 1191.4,627.0 1188.5,626.1" fill="#b4b4b4" stroke="#b4b4b4" stroke-width="0.4"/><polygon points="1180.2,630.9 1183.2,631.8 1194.3,627.9 1191.4,627.0" fill="#b4b4b4" stroke="#b4b4b4" stroke-width="0.4"/><polygon points="1183.2,631.8 1186.1,632.7 1197.3,628.8 1194.3,627.9" fill="#b4b4b4" stroke="#b4b4b4" stroke-width="0.4"/><polygon points="944.1,561.6 946.6,562.3 949.0,563.0 951.5,563.7 953.9,564.4 956.4,565.1 958.8,565.8 961.3,566.5 963.8,567.2 966.3,567.9 968.7,568.6 971.2,569.3 973.7,570.0 976.2,570.8 978.7,571.5 981.2,572.2 983.7,572.9 986.3,573.6 988.8,574.4 991.3,575.1 993.9,575.8 996.4,576.5 998.9,577.3 1001.5,578.0 1004.1,578.7 1006.6,579.5 1009.2,580.2 1011.8,580.9 1014.4,581.7 1016.9,582.4 1019.5,583.2 1022.1,583.9 1024.7,584.7 1027.4,585.4 1030.0,586.2 1032.6,586.9 1035.2,587.7 1037.9,588.4 1040.5,589.2 1043.1,589.9 1045.8,590.7 1048.4,591.4 1051.1,592.2 1053.8,593.0 1056.5,593.7 1059.1,594.5 1061.8,595.3 1064.5,596.0 1067.2,596.8 1069.9,597.6 1072.6,598.4 1075.3,599.2 1078.1,599.9 1080.8,600.7 1083.5,601.5 1086.3,602.3 1089.0,603.1 1091.8,603.9 1094.5,604.7 1097.3,605.5 1100.1,606.3 1102.9,607.2 1105.6,608.1 1108.4,609.0 1111.2,609.9 1114.0,610.8 1116.8,611.8 1119.6,612.7 1122.4,613.6 1125.2,614.5 1128.1,615.4 1130.9,616.2 1133.7,617.1 1136.6,617.9 1139.5,618.6 1142.3,619.4 1145.2,620.2 1148.1,621.0 1151.0,621.8 1153.9,622.7 1156.8,623.5 1159.7,624.4 1162.6,625.3 1165.5,626.2 1168.5,627.2 1171.4,628.1 1174.3,629.0 1177.3,630.0 1180.2,630.9 1183.2,631.8 1186.1,632.7 1185.7,635.7 1182.8,634.8 1179.8,633.9 1176.9,633.0 1173.9,632.0 1171.0,631.1 1168.1,630.1 1165.2,629.2 1162.2,628.3 1159.3,627.4 1156.4,626.5 1153.5,625.6 1150.7,624.8 1147.8,624.0 1144.9,623.2 1142.0,622.4 1139.1,621.6 1136.3,620.8 1133.4,620.0 1130.5,619.2 1127.7,618.3 1124.9,617.4 1122.0,616.5 1119.2,615.6 1116.4,614.7 1113.6,613.8 1110.8,612.8 1108.1,611.9 1105.3,611.0 1102.5,610.1 1099.7,609.2 1097.0,608.4 1094.2,607.6 1091.5,606.8 1088.7,606.0 1086.0,605.2 1083.2,604.4 1080.5,603.6 1077.8,602.8 1075.0,602.0 1072.3,601.3 1069.6,600.5 1066.9,599.7 1064.2,598.9 1061.5,598.1 1058.8,597.4 1056.2,596.6 1053.5,595.8 1050.8,595.1 1048.1,594.3 1045.5,593.5 1042.8,592.8 1040.2,592.0 1037.6,591.3 1034.9,590.5 1032.3,589.7 1029.7,589.0 1027.1,588.2 1024.5,587.5 1021.8,586.7 1019.3,586.0 1016.7,585.2 1014.1,584.5 1011.5,583.8 1008.9,583.0 1006.3,582.3 1003.8,581.5 1001.2,580.8 998.7,580.1 996.1,579.3 993.6,578.6 991.0,577.9 988.5,577.2 986.0,576.4 983.5,575.7 981.0,575.0 978.5,574.3 975.9,573.5 973.5,572.8 971.0,572.1 968.5,571.4 966.0,570.7 963.5,570.0 961.0,569.3 958.6,568.5 956.1,567.8 953.7,567.1 951.2,566.4 948.8,565.7 946.3,565.0 943.9,564.3" fill="#c8c8c8" stroke="#c8c8c8" stroke-width="0.3"/><polygon points="1186.1,632.7 1197.3,628.8 1196.9,631.8 1185.7,635.7" fill="#7e7e7e" /><polygon points="923.3,561.8 925.7,562.2 928.2,562.4 930.7,562.5 933.2,562.6 935.8,562.6 938.3,562.7 940.9,562.9 943.5,563.2 946.0,563.7 948.7,564.6 951.3,567.0 953.6,571.5 955.7,577.0 957.8,582.8 959.8,588.0 961.9,592.0 963.9,593.9 966.1,593.5 978.7,590.1 976.6,590.6 974.6,588.7 972.5,584.8 970.5,579.6 968.4,573.8 966.3,568.4 964.0,564.0 961.4,561.6 958.7,560.7 956.2,560.2 953.7,559.9 951.1,559.7 948.6,559.6 946.0,559.6 943.5,559.5 941.0,559.4 938.6,559.2 936.1,558.8" fill="#f4d800" stroke="#f4d800" stroke-width="0.5"/><polygon points="923.3,561.8 925.7,562.2 938.6,559.2 936.1,558.8" fill="#fee700" stroke="#fee700" stroke-width="0.4"/><polygon points="925.7,562.2 928.2,562.4 941.0,559.4 938.6,559.2" fill="#fee700" stroke="#fee700" stroke-width="0.4"/><polygon points="928.2,562.4 930.7,562.5 943.5,559.5 941.0,559.4" fill="#fee600" stroke="#fee600" stroke-width="0.4"/><polygon points="930.7,562.5 933.2,562.6 946.0,559.6 943.5,559.5" fill="#fde600" stroke="#fde600" stroke-width="0.4"/><polygon points="933.2,562.6 935.8,562.6 948.6,559.6 946.0,559.6" fill="#fde600" stroke="#fde600" stroke-width="0.4"/><polygon points="935.8,562.6 938.3,562.7 951.1,559.7 948.6,559.6" fill="#fee600" stroke="#fee600" stroke-width="0.4"/><polygon points="938.3,562.7 940.9,562.9 953.7,559.9 951.1,559.7" fill="#fee600" stroke="#fee600" stroke-width="0.4"/><polygon points="940.9,562.9 943.5,563.2 956.2,560.2 953.7,559.9" fill="#fee700" stroke="#fee700" stroke-width="0.4"/><polygon points="943.5,563.2 946.0,563.7 958.7,560.7 956.2,560.2" fill="#ffe800" stroke="#ffe800" stroke-width="0.4"/><polygon points="946.0,563.7 948.7,564.6 961.4,561.6 958.7,560.7" fill="#fee600" stroke="#fee600" stroke-width="0.4"/><polygon points="948.7,564.6 951.3,567.0 964.0,564.0 961.4,561.6" fill="#f5d900" stroke="#f5d900" stroke-width="0.4"/><polygon points="951.3,567.0 953.6,571.5 966.3,568.4 964.0,564.0" fill="#e6c400" stroke="#e6c400" stroke-width="0.4"/><polygon points="953.6,571.5 955.7,577.0 968.4,573.8 966.3,568.4" fill="#ddb600" stroke="#ddb600" stroke-width="0.4"/><polygon points="955.7,577.0 957.8,582.8 970.5,579.6 968.4,573.8" fill="#dab200" stroke="#dab200" stroke-width="0.4"/><polygon points="957.8,582.8 959.8,588.0 972.5,584.8 970.5,579.6" fill="#ddb600" stroke="#ddb600" stroke-width="0.4"/><polygon points="959.8,588.0 961.9,592.0 974.6,588.7 972.5,584.8" fill="#e6c400" stroke="#e6c400" stroke-width="0.4"/><polygon points="961.9,592.0 963.9,593.9 976.6,590.6 974.6,588.7" fill="#f6db00" stroke="#f6db00" stroke-width="0.4"/><polygon points="963.9,593.9 966.1,593.5 978.7,590.1 976.6,590.6" fill="#f2d500" stroke="#f2d500" stroke-width="0.4"/><polygon points="923.3,561.8 925.7,562.2 928.2,562.4 930.7,562.5 933.2,562.6 935.8,562.6 938.3,562.7 940.9,562.9 943.5,563.2 946.0,563.7 948.7,564.6 951.3,567.0 953.6,571.5 955.7,577.0 957.8,582.8 959.8,588.0 961.9,592.0 963.9,593.9 966.1,593.5 966.8,596.0 963.6,596.7 960.9,594.2 958.5,589.8 956.4,584.3 954.4,578.5 952.3,573.2 950.3,569.2 948.1,567.3 945.8,566.6 943.3,566.0 940.8,565.7 938.3,565.5 935.8,565.4 933.2,565.4 930.7,565.3 928.2,565.2 925.6,565.0 923.2,564.6" fill="#ffe200" stroke="#ffe200" stroke-width="0.3"/><polygon points="966.8,596.0 970.1,591.5 973.7,582.6 977.8,567.1 982.6,544.6 988.0,516.7 993.7,485.3 999.6,452.2 1005.4,419.5 1011.1,389.2 1016.4,363.3 1021.0,344.1 1024.6,333.9 1026.5,332.9 1039.1,332.1 1037.2,333.2 1033.6,343.2 1029.0,362.2 1023.7,387.8 1018.1,417.9 1012.2,450.3 1006.3,483.0 1000.6,514.1 995.2,541.7 990.4,564.1 986.3,579.4 982.7,588.2 979.4,592.7" fill="#966c00" stroke="#966c00" stroke-width="0.5"/><polygon points="966.8,596.0 970.1,591.5 982.7,588.2 979.4,592.7" fill="#966c00" stroke="#966c00" stroke-width="0.4"/><polygon points="970.1,591.5 973.7,582.6 986.3,579.4 982.7,588.2" fill="#966c00" stroke="#966c00" stroke-width="0.4"/><polygon points="973.7,582.6 977.8,567.1 990.4,564.1 986.3,579.4" fill="#966c00" stroke="#966c00" stroke-width="0.4"/><polygon points="977.8,567.1 982.6,544.6 995.2,541.7 990.4,564.1" fill="#966c00" stroke="#966c00" stroke-width="0.4"/><polygon points="982.6,544.6 988.0,516.7 1000.6,514.1 995.2,541.7" fill="#966c00" stroke="#966c00" stroke-width="0.4"/><polygon points="988.0,516.7 993.7,485.3 1006.3,483.0 1000.6,514.1" fill="#966c00" stroke="#966c00" stroke-width="0.4"/><polygon points="993.7,485.3 999.6,452.2 1012.2,450.3 1006.3,483.0" fill="#966c00" stroke="#966c00" stroke-width="0.4"/><polygon points="999.6,452.2 1005.4,419.5 1018.1,417.9 1012.2,450.3" fill="#966c00" stroke="#966c00" stroke-width="0.4"/><polygon points="1005.4,419.5 1011.1,389.2 1023.7,387.8 1018.1,417.9" fill="#966c00" stroke="#966c00" stroke-width="0.4"/><polygon points="1011.1,389.2 1016.4,363.3 1029.0,362.2 1023.7,387.8" fill="#966c00" stroke="#966c00" stroke-width="0.4"/><polygon points="1016.4,363.3 1021.0,344.1 1033.6,343.2 1029.0,362.2" fill="#966c00" stroke="#966c00" stroke-width="0.4"/><polygon points="1021.0,344.1 1024.6,333.9 1037.2,333.2 1033.6,343.2" fill="#966c00" stroke="#966c00" stroke-width="0.4"/><polygon points="1024.6,333.9 1026.5,332.9 1039.1,332.1 1037.2,333.2" fill="#966c00" stroke="#966c00" stroke-width="0.4"/><polygon points="966.1,593.5 968.8,589.6 972.2,581.2 976.2,566.0 981.0,543.6 986.3,515.8 992.0,484.4 997.9,451.4 1003.8,418.7 1009.4,388.3 1014.7,362.4 1019.4,342.9 1023.4,331.9 1027.4,330.1 1026.5,332.9 1024.6,333.9 1021.0,344.1 1016.4,363.3 1011.1,389.2 1005.4,419.5 999.6,452.2 993.7,485.3 988.0,516.7 982.6,544.6 977.8,567.1 973.7,582.6 970.1,591.5 966.8,596.0" fill="#ffe200" stroke="#ffe200" stroke-width="0.3"/><polygon points="1027.4,330.1 1030.0,336.7 1031.7,348.7 1032.8,365.1 1033.7,384.5 1034.4,405.7 1035.0,427.4 1035.7,448.1 1036.6,466.6 1037.9,481.6 1039.3,494.5 1040.8,507.3 1042.3,520.0 1043.9,532.3 1045.4,544.1 1047.1,555.3 1048.8,565.6 1050.6,575.0 1052.6,583.3 1054.6,590.3 1056.8,595.8 1059.0,599.9 1061.4,602.8 1063.9,604.9 1066.5,606.2 1069.2,607.1 1071.9,607.7 1074.7,608.3 1077.6,609.0 1080.4,610.1 1083.2,611.3 1085.9,612.2 1088.7,613.0 1091.5,613.6 1094.4,614.1 1097.3,614.5 1100.2,614.9 1103.1,615.3 1106.0,615.7 1108.9,616.3 1111.8,616.9 1114.7,617.4 1117.6,617.8 1120.6,618.3 1123.5,618.7 1126.5,619.3 1129.4,619.8 1132.4,620.5 1135.4,621.2 1138.3,622.1 1141.3,623.2 1144.2,624.4 1147.1,625.8 1150.0,627.2 1152.9,628.7 1155.9,630.2 1158.8,631.7 1161.7,633.1 1164.6,634.4 1167.5,635.6 1179.1,631.6 1176.2,630.4 1173.3,629.1 1170.4,627.7 1167.5,626.2 1164.6,624.7 1161.7,623.3 1158.8,621.9 1155.9,620.5 1153.0,619.3 1150.1,618.3 1147.1,617.4 1144.2,616.6 1141.2,616.0 1138.3,615.4 1135.3,614.9 1132.4,614.5 1129.5,614.0 1126.6,613.6 1123.7,613.1 1120.8,612.5 1117.9,612.0 1115.0,611.6 1112.1,611.2 1109.2,610.8 1106.4,610.4 1103.5,609.9 1100.7,609.3 1098.0,608.5 1095.2,607.6 1092.5,606.4 1089.7,605.3 1086.8,604.6 1084.0,604.1 1081.3,603.5 1078.6,602.6 1076.0,601.3 1073.6,599.3 1071.2,596.4 1069.0,592.3 1066.8,586.9 1064.8,579.9 1062.9,571.7 1061.1,562.5 1059.4,552.2 1057.7,541.2 1056.2,529.5 1054.7,517.3 1053.2,504.8 1051.7,492.0 1050.3,479.3 1049.0,464.5 1048.1,446.2 1047.4,425.7 1046.8,404.2 1046.2,383.2 1045.4,364.0 1044.2,347.8 1042.6,335.9 1040.0,329.4" fill="#edcd00" stroke="#edcd00" stroke-width="0.5"/><polygon points="1027.4,330.1 1030.0,336.7 1042.6,335.9 1040.0,329.4" fill="#deb800" stroke="#deb800" stroke-width="0.4"/><polygon points="1030.0,336.7 1031.7,348.7 1044.2,347.8 1042.6,335.9" fill="#cb9c00" stroke="#cb9c00" stroke-width="0.4"/><polygon points="1031.7,348.7 1032.8,365.1 1045.4,364.0 1044.2,347.8" fill="#c89700" stroke="#c89700" stroke-width="0.4"/><polygon points="1032.8,365.1 1033.7,384.5 1046.2,383.2 1045.4,364.0" fill="#c79600" stroke="#c79600" stroke-width="0.4"/><polygon points="1033.7,384.5 1034.4,405.7 1046.8,404.2 1046.2,383.2" fill="#c69500" stroke="#c69500" stroke-width="0.4"/><polygon points="1034.4,405.7 1035.0,427.4 1047.4,425.7 1046.8,404.2" fill="#c69500" stroke="#c69500" stroke-width="0.4"/><polygon points="1035.0,427.4 1035.7,448.1 1048.1,446.2 1047.4,425.7" fill="#c69500" stroke="#c69500" stroke-width="0.4"/><polygon points="1035.7,448.1 1036.6,466.6 1049.0,464.5 1048.1,446.2" fill="#c79600" stroke="#c79600" stroke-width="0.4"/><polygon points="1036.6,466.6 1037.9,481.6 1050.3,479.3 1049.0,464.5" fill="#c89700" stroke="#c89700" stroke-width="0.4"/><polygon points="1037.9,481.6 1039.3,494.5 1051.7,492.0 1050.3,479.3" fill="#c99900" stroke="#c99900" stroke-width="0.4"/><polygon points="1039.3,494.5 1040.8,507.3 1053.2,504.8 1051.7,492.0" fill="#c99900" stroke="#c99900" stroke-width="0.4"/><polygon points="1040.8,507.3 1042.3,520.0 1054.7,517.3 1053.2,504.8" fill="#c99900" stroke="#c99900" stroke-width="0.4"/><polygon points="1042.3,520.0 1043.9,532.3 1056.2,529.5 1054.7,517.3" fill="#ca9a00" stroke="#ca9a00" stroke-width="0.4"/><polygon points="1043.9,532.3 1045.4,544.1 1057.7,541.2 1056.2,529.5" fill="#ca9b00" stroke="#ca9b00" stroke-width="0.4"/><polygon points="1045.4,544.1 1047.1,555.3 1059.4,552.2 1057.7,541.2" fill="#cb9c00" stroke="#cb9c00" stroke-width="0.4"/><polygon points="1047.1,555.3 1048.8,565.6 1061.1,562.5 1059.4,552.2" fill="#cc9d00" stroke="#cc9d00" stroke-width="0.4"/><polygon points="1048.8,565.6 1050.6,575.0 1062.9,571.7 1061.1,562.5" fill="#cea000" stroke="#cea000" stroke-width="0.4"/><polygon points="1050.6,575.0 1052.6,583.3 1064.8,579.9 1062.9,571.7" fill="#d0a300" stroke="#d0a300" stroke-width="0.4"/><polygon points="1052.6,583.3 1054.6,590.3 1066.8,586.9 1064.8,579.9" fill="#d4a900" stroke="#d4a900" stroke-width="0.4"/><polygon points="1054.6,590.3 1056.8,595.8 1069.0,592.3 1066.8,586.9" fill="#dbb300" stroke="#dbb300" stroke-width="0.4"/><polygon points="1056.8,595.8 1059.0,599.9 1071.2,596.4 1069.0,592.3" fill="#e5c200" stroke="#e5c200" stroke-width="0.4"/><polygon points="1059.0,599.9 1061.4,602.8 1073.6,599.3 1071.2,596.4" fill="#f0d100" stroke="#f0d100" stroke-width="0.4"/><polygon points="1061.4,602.8 1063.9,604.9 1076.0,601.3 1073.6,599.3" fill="#f8de00" stroke="#f8de00" stroke-width="0.4"/><polygon points="1063.9,604.9 1066.5,606.2 1078.6,602.6 1076.0,601.3" fill="#fde500" stroke="#fde500" stroke-width="0.4"/><polygon points="1066.5,606.2 1069.2,607.1 1081.3,603.5 1078.6,602.6" fill="#ffe800" stroke="#ffe800" stroke-width="0.4"/><polygon points="1069.2,607.1 1071.9,607.7 1084.0,604.1 1081.3,603.5" fill="#ffe800" stroke="#ffe800" stroke-width="0.4"/><polygon points="1071.9,607.7 1074.7,608.3 1086.8,604.6 1084.0,604.1" fill="#ffe800" stroke="#ffe800" stroke-width="0.4"/><polygon points="1074.7,608.3 1077.6,609.0 1089.7,605.3 1086.8,604.6" fill="#ffe800" stroke="#ffe800" stroke-width="0.4"/><polygon points="1077.6,609.0 1080.4,610.1 1092.5,606.4 1089.7,605.3" fill="#ffe800" stroke="#ffe800" stroke-width="0.4"/><polygon points="1080.4,610.1 1083.2,611.3 1095.2,607.6 1092.5,606.4" fill="#ffe800" stroke="#ffe800" stroke-width="0.4"/><polygon points="1083.2,611.3 1085.9,612.2 1098.0,608.5 1095.2,607.6" fill="#ffe800" stroke="#ffe800" stroke-width="0.4"/><polygon points="1085.9,612.2 1088.7,613.0 1100.7,609.3 1098.0,608.5" fill="#ffe800" stroke="#ffe800" stroke-width="0.4"/><polygon points="1088.7,613.0 1091.5,613.6 1103.5,609.9 1100.7,609.3" fill="#ffe800" stroke="#ffe800" stroke-width="0.4"/><polygon points="1091.5,613.6 1094.4,614.1 1106.4,610.4 1103.5,609.9" fill="#ffe700" stroke="#ffe700" stroke-width="0.4"/><polygon points="1094.4,614.1 1097.3,614.5 1109.2,610.8 1106.4,610.4" fill="#fee700" stroke="#fee700" stroke-width="0.4"/><polygon points="1097.3,614.5 1100.2,614.9 1112.1,611.2 1109.2,610.8" fill="#fee700" stroke="#fee700" stroke-width="0.4"/><polygon points="1100.2,614.9 1103.1,615.3 1115.0,611.6 1112.1,611.2" fill="#fee700" stroke="#fee700" stroke-width="0.4"/><polygon points="1103.1,615.3 1106.0,615.7 1117.9,612.0 1115.0,611.6" fill="#ffe700" stroke="#ffe700" stroke-width="0.4"/><polygon points="1106.0,615.7 1108.9,616.3 1120.8,612.5 1117.9,612.0" fill="#ffe800" stroke="#ffe800" stroke-width="0.4"/><polygon points="1108.9,616.3 1111.8,616.9 1123.7,613.1 1120.8,612.5" fill="#ffe800" stroke="#ffe800" stroke-width="0.4"/><polygon points="1111.8,616.9 1114.7,617.4 1126.6,613.6 1123.7,613.1" fill="#ffe700" stroke="#ffe700" stroke-width="0.4"/><polygon points="1114.7,617.4 1117.6,617.8 1129.5,614.0 1126.6,613.6" fill="#ffe700" stroke="#ffe700" stroke-width="0.4"/><polygon points="1117.6,617.8 1120.6,618.3 1132.4,614.5 1129.5,614.0" fill="#ffe700" stroke="#ffe700" stroke-width="0.4"/><polygon points="1120.6,618.3 1123.5,618.7 1135.3,614.9 1132.4,614.5" fill="#ffe700" stroke="#ffe700" stroke-width="0.4"/><polygon points="1123.5,618.7 1126.5,619.3 1138.3,615.4 1135.3,614.9" fill="#ffe700" stroke="#ffe700" stroke-width="0.4"/><polygon points="1126.5,619.3 1129.4,619.8 1141.2,616.0 1138.3,615.4" fill="#ffe800" stroke="#ffe800" stroke-width="0.4"/><polygon points="1129.4,619.8 1132.4,620.5 1144.2,616.6 1141.2,616.0" fill="#ffe800" stroke="#ffe800" stroke-width="0.4"/><polygon points="1132.4,620.5 1135.4,621.2 1147.1,617.4 1144.2,616.6" fill="#ffe800" stroke="#ffe800" stroke-width="0.4"/><polygon points="1135.4,621.2 1138.3,622.1 1150.1,618.3 1147.1,617.4" fill="#ffe800" stroke="#ffe800" stroke-width="0.4"/><polygon points="1138.3,622.1 1141.3,623.2 1153.0,619.3 1150.1,618.3" fill="#ffe800" stroke="#ffe800" stroke-width="0.4"/><polygon points="1141.3,623.2 1144.2,624.4 1155.9,620.5 1153.0,619.3" fill="#ffe700" stroke="#ffe700" stroke-width="0.4"/><polygon points="1144.2,624.4 1147.1,625.8 1158.8,621.9 1155.9,620.5" fill="#fee700" stroke="#fee700" stroke-width="0.4"/><polygon points="1147.1,625.8 1150.0,627.2 1161.7,623.3 1158.8,621.9" fill="#fee600" stroke="#fee600" stroke-width="0.4"/><polygon points="1150.0,627.2 1152.9,628.7 1164.6,624.7 1161.7,623.3" fill="#fee600" stroke="#fee600" stroke-width="0.4"/><polygon points="1152.9,628.7 1155.9,630.2 1167.5,626.2 1164.6,624.7" fill="#fee600" stroke="#fee600" stroke-width="0.4"/><polygon points="1155.9,630.2 1158.8,631.7 1170.4,627.7 1167.5,626.2" fill="#fee600" stroke="#fee600" stroke-width="0.4"/><polygon points="1158.8,631.7 1161.7,633.1 1173.3,629.1 1170.4,627.7" fill="#fee700" stroke="#fee700" stroke-width="0.4"/><polygon points="1161.7,633.1 1164.6,634.4 1176.2,630.4 1173.3,629.1" fill="#fee700" stroke="#fee700" stroke-width="0.4"/><polygon points="1164.6,634.4 1167.5,635.6 1179.1,631.6 1176.2,630.4" fill="#ffe700" stroke="#ffe700" stroke-width="0.4"/><polygon points="1027.4,330.1 1030.0,336.7 1031.7,348.7 1032.8,365.1 1033.7,384.5 1034.4,405.7 1035.0,427.4 1035.7,448.1 1036.6,466.6 1037.9,481.6 1039.3,494.5 1040.8,507.3 1042.3,520.0 1043.9,532.3 1045.4,544.1 1047.1,555.3 1048.8,565.6 1050.6,575.0 1052.6,583.3 1054.6,590.3 1056.8,595.8 1059.0,599.9 1061.4,602.8 1063.9,604.9 1066.5,606.2 1069.2,607.1 1071.9,607.7 1074.7,608.3 1077.6,609.0 1080.4,610.1 1083.2,611.3 1085.9,612.2 1088.7,613.0 1091.5,613.6 1094.4,614.1 1097.3,614.5 1100.2,614.9 1103.1,615.3 1106.0,615.7 1108.9,616.3 1111.8,616.9 1114.7,617.4 1117.6,617.8 1120.6,618.3 1123.5,618.7 1126.5,619.3 1129.4,619.8 1132.4,620.5 1135.4,621.2 1138.3,622.1 1141.3,623.2 1144.2,624.4 1147.1,625.8 1150.0,627.2 1152.9,628.7 1155.9,630.2 1158.8,631.7 1161.7,633.1 1164.6,634.4 1167.5,635.6 1167.0,638.6 1164.1,637.4 1161.1,636.1 1158.2,634.7 1155.2,633.2 1152.3,631.7 1149.4,630.2 1146.6,628.7 1143.7,627.4 1140.8,626.2 1137.9,625.1 1135.0,624.3 1132.1,623.5 1129.2,622.9 1126.2,622.3 1123.3,621.8 1120.4,621.3 1117.4,620.9 1114.5,620.4 1111.6,619.9 1108.7,619.3 1105.8,618.8 1102.9,618.3 1100.0,617.9 1097.1,617.5 1094.2,617.1 1091.3,616.6 1088.4,616.0 1085.6,615.2 1082.8,614.2 1080.0,613.0 1077.3,611.9 1074.5,611.2 1071.7,610.7 1068.9,610.1 1066.0,609.1 1063.2,607.6 1060.4,605.4 1057.8,602.1 1055.3,597.6 1053.0,591.7 1050.9,584.5 1048.9,576.0 1047.1,566.5 1045.3,556.0 1043.7,544.8 1042.1,533.0 1040.6,520.6 1039.1,507.9 1037.6,495.1 1036.1,482.2 1034.8,467.0 1033.9,448.4 1033.2,427.7 1032.6,406.0 1031.9,384.9 1031.0,365.5 1029.9,349.4 1028.3,337.9 1026.5,332.9" fill="#ffe200" stroke="#ffe200" stroke-width="0.3"/><polygon points="1167.5,635.6 1179.1,631.6 1178.6,634.6 1167.0,638.6" fill="#a47800" /><polygon points="914.4,418.2 917.1,417.9 919.8,416.9 922.6,415.4 925.3,413.8 928.0,412.3 930.7,411.1 933.2,410.5 946.5,409.0 944.0,409.6 941.3,410.7 938.6,412.2 935.9,413.8 933.2,415.3 930.4,416.3 927.7,416.6" fill="#142658" stroke="#142658" stroke-width="0.5"/><polygon points="914.4,418.2 917.1,417.9 930.4,416.3 927.7,416.6" fill="#142658" stroke="#142658" stroke-width="0.4"/><polygon points="917.1,417.9 919.8,416.9 933.2,415.3 930.4,416.3" fill="#142658" stroke="#142658" stroke-width="0.4"/><polygon points="919.8,416.9 922.6,415.4 935.9,413.8 933.2,415.3" fill="#142658" stroke="#142658" stroke-width="0.4"/><polygon points="922.6,415.4 925.3,413.8 938.6,412.2 935.9,413.8" fill="#142658" stroke="#142658" stroke-width="0.4"/><polygon points="925.3,413.8 928.0,412.3 941.3,410.7 938.6,412.2" fill="#142658" stroke="#142658" stroke-width="0.4"/><polygon points="928.0,412.3 930.7,411.1 944.0,409.6 941.3,410.7" fill="#142658" stroke="#142658" stroke-width="0.4"/><polygon points="930.7,411.1 933.2,410.5 946.5,409.0 944.0,409.6" fill="#142658" stroke="#142658" stroke-width="0.4"/><polygon points="914.3,415.2 916.9,414.9 919.5,414.0 922.1,412.6 924.9,410.9 927.6,409.4 930.4,408.2 933.2,407.5 933.2,410.5 930.7,411.1 928.0,412.3 925.3,413.8 922.6,415.4 919.8,416.9 917.1,417.9 914.4,418.2" fill="#558ceb" stroke="#558ceb" stroke-width="0.3"/><polygon points="933.2,407.5 936.0,407.8 938.7,409.3 941.3,412.3 943.7,417.3 945.8,424.1 947.7,432.3 949.6,441.4 951.4,450.9 953.2,460.3 955.0,469.2 956.9,476.9 958.9,483.0 961.1,486.9 963.3,488.9 965.7,489.5 978.7,487.2 976.4,486.5 974.2,484.6 972.1,480.7 970.0,474.7 968.1,467.0 966.3,458.3 964.5,449.0 962.7,439.6 960.9,430.6 959.0,422.4 956.9,415.7 954.6,410.8 952.0,407.8 949.3,406.3 946.5,406.0" fill="#4374d4" stroke="#4374d4" stroke-width="0.5"/><polygon points="933.2,407.5 936.0,407.8 949.3,406.3 946.5,406.0" fill="#4880e3" stroke="#4880e3" stroke-width="0.4"/><polygon points="936.0,407.8 938.7,409.3 952.0,407.8 949.3,406.3" fill="#477fe2" stroke="#477fe2" stroke-width="0.4"/><polygon points="938.7,409.3 941.3,412.3 954.6,410.8 952.0,407.8" fill="#457adc" stroke="#457adc" stroke-width="0.4"/><polygon points="941.3,412.3 943.7,417.3 956.9,415.7 954.6,410.8" fill="#4375d4" stroke="#4375d4" stroke-width="0.4"/><polygon points="943.7,417.3 945.8,424.1 959.0,422.4 956.9,415.7" fill="#4170cf" stroke="#4170cf" stroke-width="0.4"/><polygon points="945.8,424.1 947.7,432.3 960.9,430.6 959.0,422.4" fill="#406ecc" stroke="#406ecc" stroke-width="0.4"/><polygon points="947.7,432.3 949.6,441.4 962.7,439.6 960.9,430.6" fill="#406ecb" stroke="#406ecb" stroke-width="0.4"/><polygon points="949.6,441.4 951.4,450.9 964.5,449.0 962.7,439.6" fill="#3f6dca" stroke="#3f6dca" stroke-width="0.4"/><polygon points="951.4,450.9 953.2,460.3 966.3,458.3 964.5,449.0" fill="#3f6dca" stroke="#3f6dca" stroke-width="0.4"/><polygon points="953.2,460.3 955.0,469.2 968.1,467.0 966.3,458.3" fill="#406ecb" stroke="#406ecb" stroke-width="0.4"/><polygon points="955.0,469.2 956.9,476.9 970.0,474.7 968.1,467.0" fill="#406fcd" stroke="#406fcd" stroke-width="0.4"/><polygon points="956.9,476.9 958.9,483.0 972.1,480.7 970.0,474.7" fill="#4171d0" stroke="#4171d0" stroke-width="0.4"/><polygon points="958.9,483.0 961.1,486.9 974.2,484.6 972.1,480.7" fill="#4476d7" stroke="#4476d7" stroke-width="0.4"/><polygon points="961.1,486.9 963.3,488.9 976.4,486.5 974.2,484.6" fill="#467cdf" stroke="#467cdf" stroke-width="0.4"/><polygon points="963.3,488.9 965.7,489.5 978.7,487.2 976.4,486.5" fill="#487fe3" stroke="#487fe3" stroke-width="0.4"/><polygon points="933.2,407.5 936.0,407.8 938.7,409.3 941.3,412.3 943.7,417.3 945.8,424.1 947.7,432.3 949.6,441.4 951.4,450.9 953.2,460.3 955.0,469.2 956.9,476.9 958.9,483.0 961.1,486.9 963.3,488.9 965.7,489.5 965.6,492.5 962.7,491.7 960.0,489.3 957.5,484.7 955.4,478.3 953.4,470.3 951.5,461.4 949.7,451.9 947.9,442.5 946.1,433.5 944.2,425.5 942.2,419.0 940.1,414.6 937.9,412.0 935.6,410.8 933.2,410.5" fill="#558ceb" stroke="#558ceb" stroke-width="0.3"/><polygon points="965.6,492.5 968.6,491.9 971.5,490.4 974.5,488.1 977.5,485.3 980.5,482.4 983.5,479.6 986.4,477.2 989.3,475.3 992.2,473.7 995.2,471.9 998.2,469.9 1001.1,467.9 1004.1,465.9 1007.0,464.1 1010.0,462.4 1012.9,461.1 1015.7,460.1 1018.5,459.5 1031.4,457.4 1028.6,458.0 1025.7,459.0 1022.9,460.3 1019.9,462.0 1017.0,463.8 1014.1,465.7 1011.1,467.7 1008.1,469.6 1005.2,471.5 1002.3,473.1 999.4,474.9 996.5,477.4 993.5,480.1 990.6,483.0 987.6,485.7 984.6,488.0 981.6,489.6 978.7,490.1" fill="#142658" stroke="#142658" stroke-width="0.5"/><polygon points="965.6,492.5 968.6,491.9 981.6,489.6 978.7,490.1" fill="#142658" stroke="#142658" stroke-width="0.4"/><polygon points="968.6,491.9 971.5,490.4 984.6,488.0 981.6,489.6" fill="#142658" stroke="#142658" stroke-width="0.4"/><polygon points="971.5,490.4 974.5,488.1 987.6,485.7 984.6,488.0" fill="#142658" stroke="#142658" stroke-width="0.4"/><polygon points="974.5,488.1 977.5,485.3 990.6,483.0 987.6,485.7" fill="#142658" stroke="#142658" stroke-width="0.4"/><polygon points="977.5,485.3 980.5,482.4 993.5,480.1 990.6,483.0" fill="#142658" stroke="#142658" stroke-width="0.4"/><polygon points="980.5,482.4 983.5,479.6 996.5,477.4 993.5,480.1" fill="#142658" stroke="#142658" stroke-width="0.4"/><polygon points="983.5,479.6 986.4,477.2 999.4,474.9 996.5,477.4" fill="#142658" stroke="#142658" stroke-width="0.4"/><polygon points="986.4,477.2 989.3,475.3 1002.3,473.1 999.4,474.9" fill="#142658" stroke="#142658" stroke-width="0.4"/><polygon points="989.3,475.3 992.2,473.7 1005.2,471.5 1002.3,473.1" fill="#142658" stroke="#142658" stroke-width="0.4"/><polygon points="992.2,473.7 995.2,471.9 1008.1,469.6 1005.2,471.5" fill="#142658" stroke="#142658" stroke-width="0.4"/><polygon points="995.2,471.9 998.2,469.9 1011.1,467.7 1008.1,469.6" fill="#142658" stroke="#142658" stroke-width="0.4"/><polygon points="998.2,469.9 1001.1,467.9 1014.1,465.7 1011.1,467.7" fill="#142658" stroke="#142658" stroke-width="0.4"/><polygon points="1001.1,467.9 1004.1,465.9 1017.0,463.8 1014.1,465.7" fill="#142658" stroke="#142658" stroke-width="0.4"/><polygon points="1004.1,465.9 1007.0,464.1 1019.9,462.0 1017.0,463.8" fill="#142658" stroke="#142658" stroke-width="0.4"/><polygon points="1007.0,464.1 1010.0,462.4 1022.9,460.3 1019.9,462.0" fill="#142658" stroke="#142658" stroke-width="0.4"/><polygon points="1010.0,462.4 1012.9,461.1 1025.7,459.0 1022.9,460.3" fill="#142658" stroke="#142658" stroke-width="0.4"/><polygon points="1012.9,461.1 1015.7,460.1 1028.6,458.0 1025.7,459.0" fill="#142658" stroke="#142658" stroke-width="0.4"/><polygon points="1015.7,460.1 1018.5,459.5 1031.4,457.4 1028.6,458.0" fill="#142658" stroke="#142658" stroke-width="0.4"/><polygon points="965.7,489.5 968.2,489.0 970.9,487.5 973.8,485.4 976.7,482.7 979.7,479.8 982.7,476.9 985.8,474.4 988.8,472.5 991.7,470.8 994.6,469.0 997.5,467.0 1000.5,465.0 1003.5,463.1 1006.5,461.2 1009.5,459.5 1012.5,458.1 1015.5,457.0 1018.4,456.4 1018.5,459.5 1015.7,460.1 1012.9,461.1 1010.0,462.4 1007.0,464.1 1004.1,465.9 1001.1,467.9 998.2,469.9 995.2,471.9 992.2,473.7 989.3,475.3 986.4,477.2 983.5,479.6 980.5,482.4 977.5,485.3 974.5,488.1 971.5,490.4 968.6,491.9 965.6,492.5" fill="#558ceb" stroke="#558ceb" stroke-width="0.3"/><polygon points="1018.4,456.4 1021.4,456.4 1024.3,456.9 1027.1,457.8 1029.9,459.1 1032.6,460.5 1035.3,461.9 1038.0,463.3 1040.7,464.4 1043.5,465.2 1046.2,465.6 1049.0,465.3 1061.7,463.1 1058.9,463.4 1056.2,463.1 1053.5,462.3 1050.8,461.1 1048.1,459.8 1045.4,458.4 1042.7,457.0 1039.9,455.7 1037.1,454.8 1034.2,454.3 1031.3,454.3" fill="#4880e3" stroke="#4880e3" stroke-width="0.5"/><polygon points="1018.4,456.4 1021.4,456.4 1034.2,454.3 1031.3,454.3" fill="#487fe3" stroke="#487fe3" stroke-width="0.4"/><polygon points="1021.4,456.4 1024.3,456.9 1037.1,454.8 1034.2,454.3" fill="#4880e4" stroke="#4880e4" stroke-width="0.4"/><polygon points="1024.3,456.9 1027.1,457.8 1039.9,455.7 1037.1,454.8" fill="#4880e4" stroke="#4880e4" stroke-width="0.4"/><polygon points="1027.1,457.8 1029.9,459.1 1042.7,457.0 1039.9,455.7" fill="#4880e3" stroke="#4880e3" stroke-width="0.4"/><polygon points="1029.9,459.1 1032.6,460.5 1045.4,458.4 1042.7,457.0" fill="#487fe3" stroke="#487fe3" stroke-width="0.4"/><polygon points="1032.6,460.5 1035.3,461.9 1048.1,459.8 1045.4,458.4" fill="#487fe3" stroke="#487fe3" stroke-width="0.4"/><polygon points="1035.3,461.9 1038.0,463.3 1050.8,461.1 1048.1,459.8" fill="#487fe3" stroke="#487fe3" stroke-width="0.4"/><polygon points="1038.0,463.3 1040.7,464.4 1053.5,462.3 1050.8,461.1" fill="#4880e4" stroke="#4880e4" stroke-width="0.4"/><polygon points="1040.7,464.4 1043.5,465.2 1056.2,463.1 1053.5,462.3" fill="#4880e4" stroke="#4880e4" stroke-width="0.4"/><polygon points="1043.5,465.2 1046.2,465.6 1058.9,463.4 1056.2,463.1" fill="#4880e4" stroke="#4880e4" stroke-width="0.4"/><polygon points="1046.2,465.6 1049.0,465.3 1061.7,463.1 1058.9,463.4" fill="#477fe2" stroke="#477fe2" stroke-width="0.4"/><polygon points="1018.4,456.4 1021.4,456.4 1024.3,456.9 1027.1,457.8 1029.9,459.1 1032.6,460.5 1035.3,461.9 1038.0,463.3 1040.7,464.4 1043.5,465.2 1046.2,465.6 1049.0,465.3 1049.2,468.4 1046.1,468.7 1043.2,468.3 1040.3,467.5 1037.5,466.3 1034.7,464.9 1032.0,463.5 1029.3,462.1 1026.6,460.9 1023.9,460.0 1021.2,459.5 1018.5,459.5" fill="#558ceb" stroke="#558ceb" stroke-width="0.3"/><polygon points="1049.2,468.4 1052.3,467.5 1055.4,466.1 1058.5,464.5 1061.6,462.9 1064.6,461.4 1067.6,460.4 1080.2,458.2 1077.2,459.3 1074.2,460.7 1071.1,462.3 1068.0,463.9 1064.9,465.3 1061.9,466.2" fill="#142658" stroke="#142658" stroke-width="0.5"/><polygon points="1049.2,468.4 1052.3,467.5 1064.9,465.3 1061.9,466.2" fill="#142658" stroke="#142658" stroke-width="0.4"/><polygon points="1052.3,467.5 1055.4,466.1 1068.0,463.9 1064.9,465.3" fill="#142658" stroke="#142658" stroke-width="0.4"/><polygon points="1055.4,466.1 1058.5,464.5 1071.1,462.3 1068.0,463.9" fill="#142658" stroke="#142658" stroke-width="0.4"/><polygon points="1058.5,464.5 1061.6,462.9 1074.2,460.7 1071.1,462.3" fill="#142658" stroke="#142658" stroke-width="0.4"/><polygon points="1061.6,462.9 1064.6,461.4 1077.2,459.3 1074.2,460.7" fill="#142658" stroke="#142658" stroke-width="0.4"/><polygon points="1064.6,461.4 1067.6,460.4 1080.2,458.2 1077.2,459.3" fill="#142658" stroke="#142658" stroke-width="0.4"/><polygon points="1049.0,465.3 1051.9,464.4 1054.9,463.1 1058.0,461.5 1061.1,459.9 1064.2,458.4 1067.4,457.3 1067.6,460.4 1064.6,461.4 1061.6,462.9 1058.5,464.5 1055.4,466.1 1052.3,467.5 1049.2,468.4" fill="#558ceb" stroke="#558ceb" stroke-width="0.3"/><polygon points="1067.4,457.3 1070.5,456.8 1073.6,457.1 1076.6,458.5 1079.5,461.2 1082.2,465.0 1084.8,469.7 1087.3,475.0 1089.7,480.5 1092.1,486.2 1094.5,491.6 1096.9,496.5 1099.4,500.6 1102.0,503.7 1104.6,506.0 1107.4,507.7 1110.2,508.9 1113.1,509.7 1116.1,510.3 1119.1,510.6 1122.1,510.8 1125.2,511.0 1128.3,511.3 1131.3,511.7 1134.4,512.2 1137.5,512.5 1140.6,512.7 1143.7,512.9 1146.8,513.0 1149.9,513.1 1153.1,513.2 1156.3,513.4 1159.4,513.7 1162.6,514.2 1174.6,511.3 1171.5,510.9 1168.3,510.6 1165.2,510.4 1162.0,510.3 1158.9,510.2 1155.8,510.1 1152.7,509.9 1149.6,509.7 1146.6,509.4 1143.5,508.9 1140.5,508.5 1137.4,508.3 1134.3,508.1 1131.3,507.9 1128.3,507.5 1125.4,507.0 1122.5,506.2 1119.7,505.0 1117.0,503.3 1114.3,501.1 1111.8,498.0 1109.3,493.9 1106.9,489.0 1104.5,483.7 1102.1,478.1 1099.7,472.6 1097.3,467.4 1094.7,462.8 1092.1,459.0 1089.2,456.3 1086.2,455.0 1083.1,454.6 1080.0,455.2" fill="#477de0" stroke="#477de0" stroke-width="0.5"/><polygon points="1067.4,457.3 1070.5,456.8 1083.1,454.6 1080.0,455.2" fill="#477fe2" stroke="#477fe2" stroke-width="0.4"/><polygon points="1070.5,456.8 1073.6,457.1 1086.2,455.0 1083.1,454.6" fill="#4880e4" stroke="#4880e4" stroke-width="0.4"/><polygon points="1073.6,457.1 1076.6,458.5 1089.2,456.3 1086.2,455.0" fill="#487fe3" stroke="#487fe3" stroke-width="0.4"/><polygon points="1076.6,458.5 1079.5,461.2 1092.1,459.0 1089.2,456.3" fill="#467cdf" stroke="#467cdf" stroke-width="0.4"/><polygon points="1079.5,461.2 1082.2,465.0 1094.7,462.8 1092.1,459.0" fill="#4579da" stroke="#4579da" stroke-width="0.4"/><polygon points="1082.2,465.0 1084.8,469.7 1097.3,467.4 1094.7,462.8" fill="#4376d6" stroke="#4376d6" stroke-width="0.4"/><polygon points="1084.8,469.7 1087.3,475.0 1099.7,472.6 1097.3,467.4" fill="#4374d4" stroke="#4374d4" stroke-width="0.4"/><polygon points="1087.3,475.0 1089.7,480.5 1102.1,478.1 1099.7,472.6" fill="#4273d3" stroke="#4273d3" stroke-width="0.4"/><polygon points="1089.7,480.5 1092.1,486.2 1104.5,483.7 1102.1,478.1" fill="#4273d2" stroke="#4273d2" stroke-width="0.4"/><polygon points="1092.1,486.2 1094.5,491.6 1106.9,489.0 1104.5,483.7" fill="#4274d3" stroke="#4274d3" stroke-width="0.4"/><polygon points="1094.5,491.6 1096.9,496.5 1109.3,493.9 1106.9,489.0" fill="#4375d5" stroke="#4375d5" stroke-width="0.4"/><polygon points="1096.9,496.5 1099.4,500.6 1111.8,498.0 1109.3,493.9" fill="#4477d8" stroke="#4477d8" stroke-width="0.4"/><polygon points="1099.4,500.6 1102.0,503.7 1114.3,501.1 1111.8,498.0" fill="#457adc" stroke="#457adc" stroke-width="0.4"/><polygon points="1102.0,503.7 1104.6,506.0 1117.0,503.3 1114.3,501.1" fill="#477de0" stroke="#477de0" stroke-width="0.4"/><polygon points="1104.6,506.0 1107.4,507.7 1119.7,505.0 1117.0,503.3" fill="#477fe2" stroke="#477fe2" stroke-width="0.4"/><polygon points="1107.4,507.7 1110.2,508.9 1122.5,506.2 1119.7,505.0" fill="#4880e3" stroke="#4880e3" stroke-width="0.4"/><polygon points="1110.2,508.9 1113.1,509.7 1125.4,507.0 1122.5,506.2" fill="#4880e4" stroke="#4880e4" stroke-width="0.4"/><polygon points="1113.1,509.7 1116.1,510.3 1128.3,507.5 1125.4,507.0" fill="#4880e4" stroke="#4880e4" stroke-width="0.4"/><polygon points="1116.1,510.3 1119.1,510.6 1131.3,507.9 1128.3,507.5" fill="#4880e4" stroke="#4880e4" stroke-width="0.4"/><polygon points="1119.1,510.6 1122.1,510.8 1134.3,508.1 1131.3,507.9" fill="#4880e4" stroke="#4880e4" stroke-width="0.4"/><polygon points="1122.1,510.8 1125.2,511.0 1137.4,508.3 1134.3,508.1" fill="#4880e4" stroke="#4880e4" stroke-width="0.4"/><polygon points="1125.2,511.0 1128.3,511.3 1140.5,508.5 1137.4,508.3" fill="#4880e4" stroke="#4880e4" stroke-width="0.4"/><polygon points="1128.3,511.3 1131.3,511.7 1143.5,508.9 1140.5,508.5" fill="#4880e4" stroke="#4880e4" stroke-width="0.4"/><polygon points="1131.3,511.7 1134.4,512.2 1146.6,509.4 1143.5,508.9" fill="#4880e4" stroke="#4880e4" stroke-width="0.4"/><polygon points="1134.4,512.2 1137.5,512.5 1149.6,509.7 1146.6,509.4" fill="#4880e4" stroke="#4880e4" stroke-width="0.4"/><polygon points="1137.5,512.5 1140.6,512.7 1152.7,509.9 1149.6,509.7" fill="#4880e4" stroke="#4880e4" stroke-width="0.4"/><polygon points="1140.6,512.7 1143.7,512.9 1155.8,510.1 1152.7,509.9" fill="#4880e3" stroke="#4880e3" stroke-width="0.4"/><polygon points="1143.7,512.9 1146.8,513.0 1158.9,510.2 1155.8,510.1" fill="#4880e3" stroke="#4880e3" stroke-width="0.4"/><polygon points="1146.8,513.0 1149.9,513.1 1162.0,510.3 1158.9,510.2" fill="#4880e3" stroke="#4880e3" stroke-width="0.4"/><polygon points="1149.9,513.1 1153.1,513.2 1165.2,510.4 1162.0,510.3" fill="#4880e3" stroke="#4880e3" stroke-width="0.4"/><polygon points="1153.1,513.2 1156.3,513.4 1168.3,510.6 1165.2,510.4" fill="#4880e4" stroke="#4880e4" stroke-width="0.4"/><polygon points="1156.3,513.4 1159.4,513.7 1171.5,510.9 1168.3,510.6" fill="#4880e4" stroke="#4880e4" stroke-width="0.4"/><polygon points="1159.4,513.7 1162.6,514.2 1174.6,511.3 1171.5,510.9" fill="#4880e4" stroke="#4880e4" stroke-width="0.4"/><polygon points="1067.4,457.3 1070.5,456.8 1073.6,457.1 1076.6,458.5 1079.5,461.2 1082.2,465.0 1084.8,469.7 1087.3,475.0 1089.7,480.5 1092.1,486.2 1094.5,491.6 1096.9,496.5 1099.4,500.6 1102.0,503.7 1104.6,506.0 1107.4,507.7 1110.2,508.9 1113.1,509.7 1116.1,510.3 1119.1,510.6 1122.1,510.8 1125.2,511.0 1128.3,511.3 1131.3,511.7 1134.4,512.2 1137.5,512.5 1140.6,512.7 1143.7,512.9 1146.8,513.0 1149.9,513.1 1153.1,513.2 1156.3,513.4 1159.4,513.7 1162.6,514.2 1162.4,517.4 1159.2,517.0 1156.1,516.7 1153.0,516.5 1149.8,516.3 1146.7,516.2 1143.6,516.1 1140.4,515.9 1137.3,515.7 1134.2,515.4 1131.1,514.9 1128.1,514.5 1125.0,514.2 1122.0,514.0 1118.9,513.8 1115.8,513.5 1112.8,512.9 1109.7,512.0 1106.7,510.7 1103.8,508.9 1100.9,506.4 1098.1,503.0 1095.5,498.6 1092.9,493.5 1090.5,488.1 1088.1,482.4 1085.7,476.9 1083.3,471.8 1080.9,467.3 1078.4,463.8 1075.9,461.4 1073.2,460.2 1070.5,459.9 1067.6,460.4" fill="#558ceb" stroke="#558ceb" stroke-width="0.3"/><polygon points="1162.6,514.2 1174.6,511.3 1174.3,514.5 1162.4,517.4" fill="#213a79" /><polygon points="878.8,570.6 881.3,571.4 883.8,572.2 886.3,573.0 888.8,573.8 891.3,574.7 893.8,575.5 896.3,576.3 898.9,577.1 901.4,578.0 903.9,578.8 906.5,579.6 909.0,580.5 911.5,581.3 914.1,582.1 916.7,583.0 919.2,583.8 921.8,584.7 924.4,585.5 927.0,586.3 929.6,587.1 932.2,587.9 934.8,588.7 937.4,589.5 940.0,590.3 942.6,591.0 945.3,591.8 947.9,592.6 950.5,593.4 953.2,594.2 955.9,595.0 958.5,595.9 961.2,596.7 963.9,597.6 966.5,598.5 969.2,599.4 971.9,600.3 974.6,601.2 977.3,602.0 980.0,602.9 982.7,603.7 985.4,604.5 988.2,605.3 990.9,606.1 993.7,606.8 996.4,607.6 999.2,608.3 1002.0,609.0 1004.7,609.8 1007.5,610.5 1010.3,611.3 1013.1,612.1 1015.9,612.9 1018.7,613.7 1021.6,614.4 1024.4,615.2 1027.2,616.0 1030.1,616.9 1032.9,617.8 1035.7,618.7 1038.6,619.6 1041.5,620.7 1044.3,621.8 1047.2,622.9 1050.0,624.1 1052.9,625.3 1055.7,626.5 1058.6,627.7 1061.5,628.9 1064.3,630.0 1067.2,631.1 1070.1,632.1 1073.0,633.0 1076.0,633.8 1078.9,634.7 1081.9,635.5 1084.9,636.3 1087.8,637.2 1090.8,638.0 1093.8,639.0 1096.8,640.0 1099.8,641.1 1102.8,642.2 1105.8,643.5 1108.8,644.7 1111.8,646.0 1114.8,647.3 1117.8,648.5 1120.8,649.7 1123.8,650.9 1126.9,652.0 1139.3,647.6 1136.3,646.5 1133.3,645.4 1130.3,644.2 1127.3,642.9 1124.3,641.7 1121.3,640.4 1118.4,639.2 1115.4,638.0 1112.4,636.9 1109.4,635.8 1106.5,634.8 1103.5,633.9 1100.5,633.0 1097.6,632.2 1094.6,631.4 1091.7,630.6 1088.7,629.7 1085.8,628.9 1082.9,628.0 1080.0,627.0 1077.1,626.0 1074.3,624.9 1071.4,623.7 1068.6,622.5 1065.7,621.4 1062.9,620.2 1060.1,619.0 1057.2,617.8 1054.4,616.8 1051.6,615.7 1048.7,614.8 1045.9,613.9 1043.1,613.0 1040.2,612.2 1037.4,611.4 1034.6,610.6 1031.8,609.9 1029.0,609.1 1026.2,608.4 1023.4,607.6 1020.7,606.8 1017.9,606.1 1015.1,605.3 1012.3,604.6 1009.6,603.9 1006.8,603.1 1004.1,602.4 1001.4,601.7 998.7,600.9 996.0,600.1 993.3,599.3 990.6,598.4 987.9,597.6 985.2,596.7 982.5,595.8 979.9,594.9 977.2,594.1 974.5,593.2 971.9,592.3 969.2,591.5 966.6,590.7 963.9,589.9 961.3,589.1 958.7,588.4 956.1,587.6 953.4,586.9 950.8,586.1 948.2,585.3 945.6,584.5 943.0,583.8 940.5,583.0 937.9,582.1 935.3,581.3 932.8,580.5 930.2,579.7 927.7,578.8 925.1,578.0 922.6,577.2 920.0,576.4 917.5,575.5 915.0,574.7 912.5,573.9 910.0,573.1 907.5,572.3 905.0,571.5 902.5,570.7 900.0,569.9 897.5,569.1 895.0,568.3 892.5,567.5" fill="#92de60" stroke="#92de60" stroke-width="0.5"/><polygon points="878.8,570.6 881.3,571.4 895.0,568.3 892.5,567.5" fill="#92de60" stroke="#92de60" stroke-width="0.4"/><polygon points="881.3,571.4 883.8,572.2 897.5,569.1 895.0,568.3" fill="#92de60" stroke="#92de60" stroke-width="0.4"/><polygon points="883.8,572.2 886.3,573.0 900.0,569.9 897.5,569.1" fill="#92de60" stroke="#92de60" stroke-width="0.4"/><polygon points="886.3,573.0 888.8,573.8 902.5,570.7 900.0,569.9" fill="#92de60" stroke="#92de60" stroke-width="0.4"/><polygon points="888.8,573.8 891.3,574.7 905.0,571.5 902.5,570.7" fill="#92de60" stroke="#92de60" stroke-width="0.4"/><polygon points="891.3,574.7 893.8,575.5 907.5,572.3 905.0,571.5" fill="#92de60" stroke="#92de60" stroke-width="0.4"/><polygon points="893.8,575.5 896.3,576.3 910.0,573.1 907.5,572.3" fill="#92de60" stroke="#92de60" stroke-width="0.4"/><polygon points="896.3,576.3 898.9,577.1 912.5,573.9 910.0,573.1" fill="#92de60" stroke="#92de60" stroke-width="0.4"/><polygon points="898.9,577.1 901.4,578.0 915.0,574.7 912.5,573.9" fill="#92de60" stroke="#92de60" stroke-width="0.4"/><polygon points="901.4,578.0 903.9,578.8 917.5,575.5 915.0,574.7" fill="#92de60" stroke="#92de60" stroke-width="0.4"/><polygon points="903.9,578.8 906.5,579.6 920.0,576.4 917.5,575.5" fill="#92de60" stroke="#92de60" stroke-width="0.4"/><polygon points="906.5,579.6 909.0,580.5 922.6,577.2 920.0,576.4" fill="#92de60" stroke="#92de60" stroke-width="0.4"/><polygon points="909.0,580.5 911.5,581.3 925.1,578.0 922.6,577.2" fill="#92de60" stroke="#92de60" stroke-width="0.4"/><polygon points="911.5,581.3 914.1,582.1 927.7,578.8 925.1,578.0" fill="#92de60" stroke="#92de60" stroke-width="0.4"/><polygon points="914.1,582.1 916.7,583.0 930.2,579.7 927.7,578.8" fill="#92de60" stroke="#92de60" stroke-width="0.4"/><polygon points="916.7,583.0 919.2,583.8 932.8,580.5 930.2,579.7" fill="#92de60" stroke="#92de60" stroke-width="0.4"/><polygon points="919.2,583.8 921.8,584.7 935.3,581.3 932.8,580.5" fill="#92de60" stroke="#92de60" stroke-width="0.4"/><polygon points="921.8,584.7 924.4,585.5 937.9,582.1 935.3,581.3" fill="#92de60" stroke="#92de60" stroke-width="0.4"/><polygon points="924.4,585.5 927.0,586.3 940.5,583.0 937.9,582.1" fill="#92de60" stroke="#92de60" stroke-width="0.4"/><polygon points="927.0,586.3 929.6,587.1 943.0,583.8 940.5,583.0" fill="#92de60" stroke="#92de60" stroke-width="0.4"/><polygon points="929.6,587.1 932.2,587.9 945.6,584.5 943.0,583.8" fill="#92de60" stroke="#92de60" stroke-width="0.4"/><polygon points="932.2,587.9 934.8,588.7 948.2,585.3 945.6,584.5" fill="#92de60" stroke="#92de60" stroke-width="0.4"/><polygon points="934.8,588.7 937.4,589.5 950.8,586.1 948.2,585.3" fill="#92de60" stroke="#92de60" stroke-width="0.4"/><polygon points="937.4,589.5 940.0,590.3 953.4,586.9 950.8,586.1" fill="#92de60" stroke="#92de60" stroke-width="0.4"/><polygon points="940.0,590.3 942.6,591.0 956.1,587.6 953.4,586.9" fill="#92de60" stroke="#92de60" stroke-width="0.4"/><polygon points="942.6,591.0 945.3,591.8 958.7,588.4 956.1,587.6" fill="#92de60" stroke="#92de60" stroke-width="0.4"/><polygon points="945.3,591.8 947.9,592.6 961.3,589.1 958.7,588.4" fill="#92de60" stroke="#92de60" stroke-width="0.4"/><polygon points="947.9,592.6 950.5,593.4 963.9,589.9 961.3,589.1" fill="#92de60" stroke="#92de60" stroke-width="0.4"/><polygon points="950.5,593.4 953.2,594.2 966.6,590.7 963.9,589.9" fill="#92de60" stroke="#92de60" stroke-width="0.4"/><polygon points="953.2,594.2 955.9,595.0 969.2,591.5 966.6,590.7" fill="#92de60" stroke="#92de60" stroke-width="0.4"/><polygon points="955.9,595.0 958.5,595.9 971.9,592.3 969.2,591.5" fill="#92de60" stroke="#92de60" stroke-width="0.4"/><polygon points="958.5,595.9 961.2,596.7 974.5,593.2 971.9,592.3" fill="#92de60" stroke="#92de60" stroke-width="0.4"/><polygon points="961.2,596.7 963.9,597.6 977.2,594.1 974.5,593.2" fill="#92de60" stroke="#92de60" stroke-width="0.4"/><polygon points="963.9,597.6 966.5,598.5 979.9,594.9 977.2,594.1" fill="#92de60" stroke="#92de60" stroke-width="0.4"/><polygon points="966.5,598.5 969.2,599.4 982.5,595.8 979.9,594.9" fill="#92de60" stroke="#92de60" stroke-width="0.4"/><polygon points="969.2,599.4 971.9,600.3 985.2,596.7 982.5,595.8" fill="#92de60" stroke="#92de60" stroke-width="0.4"/><polygon points="971.9,600.3 974.6,601.2 987.9,597.6 985.2,596.7" fill="#92de60" stroke="#92de60" stroke-width="0.4"/><polygon points="974.6,601.2 977.3,602.0 990.6,598.4 987.9,597.6" fill="#92de60" stroke="#92de60" stroke-width="0.4"/><polygon points="977.3,602.0 980.0,602.9 993.3,599.3 990.6,598.4" fill="#92de60" stroke="#92de60" stroke-width="0.4"/><polygon points="980.0,602.9 982.7,603.7 996.0,600.1 993.3,599.3" fill="#92de60" stroke="#92de60" stroke-width="0.4"/><polygon points="982.7,603.7 985.4,604.5 998.7,600.9 996.0,600.1" fill="#92de60" stroke="#92de60" stroke-width="0.4"/><polygon points="985.4,604.5 988.2,605.3 1001.4,601.7 998.7,600.9" fill="#92de60" stroke="#92de60" stroke-width="0.4"/><polygon points="988.2,605.3 990.9,606.1 1004.1,602.4 1001.4,601.7" fill="#92de60" stroke="#92de60" stroke-width="0.4"/><polygon points="990.9,606.1 993.7,606.8 1006.8,603.1 1004.1,602.4" fill="#92de60" stroke="#92de60" stroke-width="0.4"/><polygon points="993.7,606.8 996.4,607.6 1009.6,603.9 1006.8,603.1" fill="#92de60" stroke="#92de60" stroke-width="0.4"/><polygon points="996.4,607.6 999.2,608.3 1012.3,604.6 1009.6,603.9" fill="#92de60" stroke="#92de60" stroke-width="0.4"/><polygon points="999.2,608.3 1002.0,609.0 1015.1,605.3 1012.3,604.6" fill="#92de60" stroke="#92de60" stroke-width="0.4"/><polygon points="1002.0,609.0 1004.7,609.8 1017.9,606.1 1015.1,605.3" fill="#92de60" stroke="#92de60" stroke-width="0.4"/><polygon points="1004.7,609.8 1007.5,610.5 1020.7,606.8 1017.9,606.1" fill="#92de60" stroke="#92de60" stroke-width="0.4"/><polygon points="1007.5,610.5 1010.3,611.3 1023.4,607.6 1020.7,606.8" fill="#92de60" stroke="#92de60" stroke-width="0.4"/><polygon points="1010.3,611.3 1013.1,612.1 1026.2,608.4 1023.4,607.6" fill="#92de60" stroke="#92de60" stroke-width="0.4"/><polygon points="1013.1,612.1 1015.9,612.9 1029.0,609.1 1026.2,608.4" fill="#92de60" stroke="#92de60" stroke-width="0.4"/><polygon points="1015.9,612.9 1018.7,613.7 1031.8,609.9 1029.0,609.1" fill="#92de60" stroke="#92de60" stroke-width="0.4"/><polygon points="1018.7,613.7 1021.6,614.4 1034.6,610.6 1031.8,609.9" fill="#92de60" stroke="#92de60" stroke-width="0.4"/><polygon points="1021.6,614.4 1024.4,615.2 1037.4,611.4 1034.6,610.6" fill="#92de60" stroke="#92de60" stroke-width="0.4"/><polygon points="1024.4,615.2 1027.2,616.0 1040.2,612.2 1037.4,611.4" fill="#92de60" stroke="#92de60" stroke-width="0.4"/><polygon points="1027.2,616.0 1030.1,616.9 1043.1,613.0 1040.2,612.2" fill="#92de60" stroke="#92de60" stroke-width="0.4"/><polygon points="1030.1,616.9 1032.9,617.8 1045.9,613.9 1043.1,613.0" fill="#92de60" stroke="#92de60" stroke-width="0.4"/><polygon points="1032.9,617.8 1035.7,618.7 1048.7,614.8 1045.9,613.9" fill="#92de60" stroke="#92de60" stroke-width="0.4"/><polygon points="1035.7,618.7 1038.6,619.6 1051.6,615.7 1048.7,614.8" fill="#92de60" stroke="#92de60" stroke-width="0.4"/><polygon points="1038.6,619.6 1041.5,620.7 1054.4,616.8 1051.6,615.7" fill="#92de60" stroke="#92de60" stroke-width="0.4"/><polygon points="1041.5,620.7 1044.3,621.8 1057.2,617.8 1054.4,616.8" fill="#92de60" stroke="#92de60" stroke-width="0.4"/><polygon points="1044.3,621.8 1047.2,622.9 1060.1,619.0 1057.2,617.8" fill="#92de60" stroke="#92de60" stroke-width="0.4"/><polygon points="1047.2,622.9 1050.0,624.1 1062.9,620.2 1060.1,619.0" fill="#92de60" stroke="#92de60" stroke-width="0.4"/><polygon points="1050.0,624.1 1052.9,625.3 1065.7,621.4 1062.9,620.2" fill="#92de60" stroke="#92de60" stroke-width="0.4"/><polygon points="1052.9,625.3 1055.7,626.5 1068.6,622.5 1065.7,621.4" fill="#92de60" stroke="#92de60" stroke-width="0.4"/><polygon points="1055.7,626.5 1058.6,627.7 1071.4,623.7 1068.6,622.5" fill="#92de60" stroke="#92de60" stroke-width="0.4"/><polygon points="1058.6,627.7 1061.5,628.9 1074.3,624.9 1071.4,623.7" fill="#92de60" stroke="#92de60" stroke-width="0.4"/><polygon points="1061.5,628.9 1064.3,630.0 1077.1,626.0 1074.3,624.9" fill="#92de60" stroke="#92de60" stroke-width="0.4"/><polygon points="1064.3,630.0 1067.2,631.1 1080.0,627.0 1077.1,626.0" fill="#92de60" stroke="#92de60" stroke-width="0.4"/><polygon points="1067.2,631.1 1070.1,632.1 1082.9,628.0 1080.0,627.0" fill="#92de60" stroke="#92de60" stroke-width="0.4"/><polygon points="1070.1,632.1 1073.0,633.0 1085.8,628.9 1082.9,628.0" fill="#92de60" stroke="#92de60" stroke-width="0.4"/><polygon points="1073.0,633.0 1076.0,633.8 1088.7,629.7 1085.8,628.9" fill="#92de60" stroke="#92de60" stroke-width="0.4"/><polygon points="1076.0,633.8 1078.9,634.7 1091.7,630.6 1088.7,629.7" fill="#92de60" stroke="#92de60" stroke-width="0.4"/><polygon points="1078.9,634.7 1081.9,635.5 1094.6,631.4 1091.7,630.6" fill="#92de60" stroke="#92de60" stroke-width="0.4"/><polygon points="1081.9,635.5 1084.9,636.3 1097.6,632.2 1094.6,631.4" fill="#92de60" stroke="#92de60" stroke-width="0.4"/><polygon points="1084.9,636.3 1087.8,637.2 1100.5,633.0 1097.6,632.2" fill="#92de60" stroke="#92de60" stroke-width="0.4"/><polygon points="1087.8,637.2 1090.8,638.0 1103.5,633.9 1100.5,633.0" fill="#92de60" stroke="#92de60" stroke-width="0.4"/><polygon points="1090.8,638.0 1093.8,639.0 1106.5,634.8 1103.5,633.9" fill="#92de60" stroke="#92de60" stroke-width="0.4"/><polygon points="1093.8,639.0 1096.8,640.0 1109.4,635.8 1106.5,634.8" fill="#92de60" stroke="#92de60" stroke-width="0.4"/><polygon points="1096.8,640.0 1099.8,641.1 1112.4,636.9 1109.4,635.8" fill="#92de60" stroke="#92de60" stroke-width="0.4"/><polygon points="1099.8,641.1 1102.8,642.2 1115.4,638.0 1112.4,636.9" fill="#92de60" stroke="#92de60" stroke-width="0.4"/><polygon points="1102.8,642.2 1105.8,643.5 1118.4,639.2 1115.4,638.0" fill="#92de60" stroke="#92de60" stroke-width="0.4"/><polygon points="1105.8,643.5 1108.8,644.7 1121.3,640.4 1118.4,639.2" fill="#92de60" stroke="#92de60" stroke-width="0.4"/><polygon points="1108.8,644.7 1111.8,646.0 1124.3,641.7 1121.3,640.4" fill="#92de60" stroke="#92de60" stroke-width="0.4"/><polygon points="1111.8,646.0 1114.8,647.3 1127.3,642.9 1124.3,641.7" fill="#92de60" stroke="#92de60" stroke-width="0.4"/><polygon points="1114.8,647.3 1117.8,648.5 1130.3,644.2 1127.3,642.9" fill="#92de60" stroke="#92de60" stroke-width="0.4"/><polygon points="1117.8,648.5 1120.8,649.7 1133.3,645.4 1130.3,644.2" fill="#92de60" stroke="#92de60" stroke-width="0.4"/><polygon points="1120.8,649.7 1123.8,650.9 1136.3,646.5 1133.3,645.4" fill="#92de60" stroke="#92de60" stroke-width="0.4"/><polygon points="1123.8,650.9 1126.9,652.0 1139.3,647.6 1136.3,646.5" fill="#92de60" stroke="#92de60" stroke-width="0.4"/><polygon points="878.8,570.6 881.3,571.4 883.8,572.2 886.3,573.0 888.8,573.8 891.3,574.7 893.8,575.5 896.3,576.3 898.9,577.1 901.4,578.0 903.9,578.8 906.5,579.6 909.0,580.5 911.5,581.3 914.1,582.1 916.7,583.0 919.2,583.8 921.8,584.7 924.4,585.5 927.0,586.3 929.6,587.1 932.2,587.9 934.8,588.7 937.4,589.5 940.0,590.3 942.6,591.0 945.3,591.8 947.9,592.6 950.5,593.4 953.2,594.2 955.9,595.0 958.5,595.9 961.2,596.7 963.9,597.6 966.5,598.5 969.2,599.4 971.9,600.3 974.6,601.2 977.3,602.0 980.0,602.9 982.7,603.7 985.4,604.5 988.2,605.3 990.9,606.1 993.7,606.8 996.4,607.6 999.2,608.3 1002.0,609.0 1004.7,609.8 1007.5,610.5 1010.3,611.3 1013.1,612.1 1015.9,612.9 1018.7,613.7 1021.6,614.4 1024.4,615.2 1027.2,616.0 1030.1,616.9 1032.9,617.8 1035.7,618.7 1038.6,619.6 1041.5,620.7 1044.3,621.8 1047.2,622.9 1050.0,624.1 1052.9,625.3 1055.7,626.5 1058.6,627.7 1061.5,628.9 1064.3,630.0 1067.2,631.1 1070.1,632.1 1073.0,633.0 1076.0,633.8 1078.9,634.7 1081.9,635.5 1084.9,636.3 1087.8,637.2 1090.8,638.0 1093.8,639.0 1096.8,640.0 1099.8,641.1 1102.8,642.2 1105.8,643.5 1108.8,644.7 1111.8,646.0 1114.8,647.3 1117.8,648.5 1120.8,649.7 1123.8,650.9 1126.9,652.0 1126.4,655.2 1123.4,654.1 1120.3,652.9 1117.3,651.6 1114.3,650.4 1111.3,649.1 1108.3,647.8 1105.3,646.6 1102.4,645.4 1099.4,644.2 1096.4,643.1 1093.5,642.1 1090.5,641.2 1087.5,640.3 1084.5,639.4 1081.6,638.6 1078.6,637.8 1075.7,637.0 1072.7,636.1 1069.8,635.2 1066.8,634.2 1063.9,633.1 1061.0,632.0 1058.1,630.8 1055.3,629.6 1052.4,628.4 1049.6,627.2 1046.7,626.0 1043.9,624.8 1041.1,623.7 1038.2,622.7 1035.4,621.7 1032.6,620.8 1029.7,619.9 1026.9,619.1 1024.1,618.3 1021.3,617.5 1018.5,616.7 1015.6,615.9 1012.8,615.2 1010.0,614.4 1007.3,613.6 1004.5,612.8 1001.7,612.1 998.9,611.3 996.2,610.6 993.4,609.8 990.6,609.1 987.9,608.3 985.2,607.5 982.4,606.7 979.7,605.9 977.0,605.0 974.3,604.2 971.6,603.3 968.9,602.4 966.2,601.5 963.5,600.6 960.9,599.7 958.2,598.8 955.6,598.0 952.9,597.2 950.3,596.4 947.6,595.6 945.0,594.8 942.4,594.0 939.7,593.2 937.1,592.5 934.5,591.7 931.9,590.9 929.3,590.1 926.7,589.3 924.1,588.4 921.5,587.6 918.9,586.7 916.4,585.9 913.8,585.1 911.3,584.2 908.7,583.4 906.2,582.5 903.6,581.7 901.1,580.9 898.6,580.0 896.1,579.2 893.5,578.4 891.0,577.6 888.5,576.7 886.0,575.9 883.5,575.1 881.1,574.3 878.6,573.5" fill="#a0e66e" stroke="#a0e66e" stroke-width="0.3"/><polygon points="1126.9,652.0 1139.3,647.6 1138.9,650.7 1126.4,655.2" fill="#569034" /><polygon points="859.2,533.4 862.0,531.4 865.0,528.2 867.9,524.1 870.9,519.6 873.9,514.9 876.9,510.5 879.8,506.7 882.6,503.8 885.1,502.2 899.3,499.6 896.7,501.2 893.9,504.1 891.1,507.9 888.1,512.3 885.1,516.9 882.1,521.4 879.2,525.4 876.2,528.6 873.4,530.5" fill="#485c70" stroke="#485c70" stroke-width="0.5"/><polygon points="859.2,533.4 862.0,531.4 876.2,528.6 873.4,530.5" fill="#485c70" stroke="#485c70" stroke-width="0.4"/><polygon points="862.0,531.4 865.0,528.2 879.2,525.4 876.2,528.6" fill="#485c70" stroke="#485c70" stroke-width="0.4"/><polygon points="865.0,528.2 867.9,524.1 882.1,521.4 879.2,525.4" fill="#485c70" stroke="#485c70" stroke-width="0.4"/><polygon points="867.9,524.1 870.9,519.6 885.1,516.9 882.1,521.4" fill="#485c70" stroke="#485c70" stroke-width="0.4"/><polygon points="870.9,519.6 873.9,514.9 888.1,512.3 885.1,516.9" fill="#485c70" stroke="#485c70" stroke-width="0.4"/><polygon points="873.9,514.9 876.9,510.5 891.1,507.9 888.1,512.3" fill="#485c70" stroke="#485c70" stroke-width="0.4"/><polygon points="876.9,510.5 879.8,506.7 893.9,504.1 891.1,507.9" fill="#485c70" stroke="#485c70" stroke-width="0.4"/><polygon points="879.8,506.7 882.6,503.8 896.7,501.2 893.9,504.1" fill="#485c70" stroke="#485c70" stroke-width="0.4"/><polygon points="882.6,503.8 885.1,502.2 899.3,499.6 896.7,501.2" fill="#485c70" stroke="#485c70" stroke-width="0.4"/><polygon points="858.6,530.6 861.3,528.7 864.0,525.7 866.9,521.8 869.8,517.3 872.8,512.6 875.8,508.1 878.8,504.1 881.8,501.0 884.8,499.2 885.1,502.2 882.6,503.8 879.8,506.7 876.9,510.5 873.9,514.9 870.9,519.6 867.9,524.1 865.0,528.2 862.0,531.4 859.2,533.4" fill="#badaf6" stroke="#badaf6" stroke-width="0.3"/><polygon points="884.8,499.2 887.8,499.1 890.6,501.1 893.1,504.9 895.4,509.9 897.7,515.8 899.8,522.2 901.9,528.7 904.0,535.0 906.2,540.7 908.4,545.3 910.7,548.6 913.0,550.7 915.5,552.1 918.0,552.8 920.6,553.1 923.3,553.0 926.1,552.8 928.8,552.4 931.7,552.2 934.5,552.2 937.3,552.6 940.0,553.3 942.7,553.9 945.5,554.5 948.2,555.1 951.0,555.8 953.7,556.6 956.5,557.6 959.2,558.8 962.0,560.2 964.7,561.8 967.5,564.1 970.1,567.0 972.7,570.3 975.3,573.8 977.8,577.4 980.3,580.8 982.8,583.8 985.4,586.2 988.0,587.9 990.6,588.7 993.3,588.3 1006.9,584.7 1004.2,585.1 1001.6,584.3 999.0,582.7 996.5,580.2 994.0,577.3 991.5,573.9 988.9,570.4 986.4,567.0 983.8,563.7 981.2,560.8 978.5,558.6 975.7,556.9 973.0,555.5 970.3,554.4 967.5,553.4 964.8,552.6 962.0,551.9 959.3,551.3 956.6,550.7 953.9,550.1 951.1,549.5 948.4,549.1 945.6,549.1 942.8,549.3 940.0,549.7 937.3,549.9 934.6,550.0 932.0,549.7 929.5,549.0 927.0,547.6 924.7,545.6 922.4,542.3 920.2,537.7 918.1,532.1 916.0,525.9 913.9,519.4 911.7,513.1 909.5,507.2 907.2,502.3 904.7,498.6 901.9,496.6 899.0,496.7" fill="#daeffe" stroke="#daeffe" stroke-width="0.5"/><polygon points="884.8,499.2 887.8,499.1 901.9,496.6 899.0,496.7" fill="#d7eefe" stroke="#d7eefe" stroke-width="0.4"/><polygon points="887.8,499.1 890.6,501.1 904.7,498.6 901.9,496.6" fill="#d8eefe" stroke="#d8eefe" stroke-width="0.4"/><polygon points="890.6,501.1 893.1,504.9 907.2,502.3 904.7,498.6" fill="#ddf0fe" stroke="#ddf0fe" stroke-width="0.4"/><polygon points="893.1,504.9 895.4,509.9 909.5,507.2 907.2,502.3" fill="#e1f3ff" stroke="#e1f3ff" stroke-width="0.4"/><polygon points="895.4,509.9 897.7,515.8 911.7,513.1 909.5,507.2" fill="#e4f4ff" stroke="#e4f4ff" stroke-width="0.4"/><polygon points="897.7,515.8 899.8,522.2 913.9,519.4 911.7,513.1" fill="#e5f4ff" stroke="#e5f4ff" stroke-width="0.4"/><polygon points="899.8,522.2 901.9,528.7 916.0,525.9 913.9,519.4" fill="#e5f5ff" stroke="#e5f5ff" stroke-width="0.4"/><polygon points="901.9,528.7 904.0,535.0 918.1,532.1 916.0,525.9" fill="#e5f4ff" stroke="#e5f4ff" stroke-width="0.4"/><polygon points="904.0,535.0 906.2,540.7 920.2,537.7 918.1,532.1" fill="#e3f4ff" stroke="#e3f4ff" stroke-width="0.4"/><polygon points="906.2,540.7 908.4,545.3 922.4,542.3 920.2,537.7" fill="#e1f2fe" stroke="#e1f2fe" stroke-width="0.4"/><polygon points="908.4,545.3 910.7,548.6 924.7,545.6 922.4,542.3" fill="#ddf0fe" stroke="#ddf0fe" stroke-width="0.4"/><polygon points="910.7,548.6 913.0,550.7 927.0,547.6 924.7,545.6" fill="#d9effe" stroke="#d9effe" stroke-width="0.4"/><polygon points="913.0,550.7 915.5,552.1 929.5,549.0 927.0,547.6" fill="#d7edfe" stroke="#d7edfe" stroke-width="0.4"/><polygon points="915.5,552.1 918.0,552.8 932.0,549.7 929.5,549.0" fill="#d6edfe" stroke="#d6edfe" stroke-width="0.4"/><polygon points="918.0,552.8 920.6,553.1 934.6,550.0 932.0,549.7" fill="#d6edfe" stroke="#d6edfe" stroke-width="0.4"/><polygon points="920.6,553.1 923.3,553.0 937.3,549.9 934.6,550.0" fill="#d7edfe" stroke="#d7edfe" stroke-width="0.4"/><polygon points="923.3,553.0 926.1,552.8 940.0,549.7 937.3,549.9" fill="#d7eefe" stroke="#d7eefe" stroke-width="0.4"/><polygon points="926.1,552.8 928.8,552.4 942.8,549.3 940.0,549.7" fill="#d7eefe" stroke="#d7eefe" stroke-width="0.4"/><polygon points="928.8,552.4 931.7,552.2 945.6,549.1 942.8,549.3" fill="#d7eefe" stroke="#d7eefe" stroke-width="0.4"/><polygon points="931.7,552.2 934.5,552.2 948.4,549.1 945.6,549.1" fill="#d7edfe" stroke="#d7edfe" stroke-width="0.4"/><polygon points="934.5,552.2 937.3,552.6 951.1,549.5 948.4,549.1" fill="#d6edfe" stroke="#d6edfe" stroke-width="0.4"/><polygon points="937.3,552.6 940.0,553.3 953.9,550.1 951.1,549.5" fill="#d6edfe" stroke="#d6edfe" stroke-width="0.4"/><polygon points="940.0,553.3 942.7,553.9 956.6,550.7 953.9,550.1" fill="#d6edfe" stroke="#d6edfe" stroke-width="0.4"/><polygon points="942.7,553.9 945.5,554.5 959.3,551.3 956.6,550.7" fill="#d6edfe" stroke="#d6edfe" stroke-width="0.4"/><polygon points="945.5,554.5 948.2,555.1 962.0,551.9 959.3,551.3" fill="#d6edfe" stroke="#d6edfe" stroke-width="0.4"/><polygon points="948.2,555.1 951.0,555.8 964.8,552.6 962.0,551.9" fill="#d6edfe" stroke="#d6edfe" stroke-width="0.4"/><polygon points="951.0,555.8 953.7,556.6 967.5,553.4 964.8,552.6" fill="#d6edfe" stroke="#d6edfe" stroke-width="0.4"/><polygon points="953.7,556.6 956.5,557.6 970.3,554.4 967.5,553.4" fill="#d6edfe" stroke="#d6edfe" stroke-width="0.4"/><polygon points="956.5,557.6 959.2,558.8 973.0,555.5 970.3,554.4" fill="#d6edfe" stroke="#d6edfe" stroke-width="0.4"/><polygon points="959.2,558.8 962.0,560.2 975.7,556.9 973.0,555.5" fill="#d6edfe" stroke="#d6edfe" stroke-width="0.4"/><polygon points="962.0,560.2 964.7,561.8 978.5,558.6 975.7,556.9" fill="#d7eefe" stroke="#d7eefe" stroke-width="0.4"/><polygon points="964.7,561.8 967.5,564.1 981.2,560.8 978.5,558.6" fill="#d8eefe" stroke="#d8eefe" stroke-width="0.4"/><polygon points="967.5,564.1 970.1,567.0 983.8,563.7 981.2,560.8" fill="#daeffe" stroke="#daeffe" stroke-width="0.4"/><polygon points="970.1,567.0 972.7,570.3 986.4,567.0 983.8,563.7" fill="#dbf0fe" stroke="#dbf0fe" stroke-width="0.4"/><polygon points="972.7,570.3 975.3,573.8 988.9,570.4 986.4,567.0" fill="#dcf0fe" stroke="#dcf0fe" stroke-width="0.4"/><polygon points="975.3,573.8 977.8,577.4 991.5,573.9 988.9,570.4" fill="#dcf0fe" stroke="#dcf0fe" stroke-width="0.4"/><polygon points="977.8,577.4 980.3,580.8 994.0,577.3 991.5,573.9" fill="#dcf0fe" stroke="#dcf0fe" stroke-width="0.4"/><polygon points="980.3,580.8 982.8,583.8 996.5,580.2 994.0,577.3" fill="#dbeffe" stroke="#dbeffe" stroke-width="0.4"/><polygon points="982.8,583.8 985.4,586.2 999.0,582.7 996.5,580.2" fill="#d9eefe" stroke="#d9eefe" stroke-width="0.4"/><polygon points="985.4,586.2 988.0,587.9 1001.6,584.3 999.0,582.7" fill="#d7eefe" stroke="#d7eefe" stroke-width="0.4"/><polygon points="988.0,587.9 990.6,588.7 1004.2,585.1 1001.6,584.3" fill="#d6edfe" stroke="#d6edfe" stroke-width="0.4"/><polygon points="990.6,588.7 993.3,588.3 1006.9,584.7 1004.2,585.1" fill="#d8eefe" stroke="#d8eefe" stroke-width="0.4"/><polygon points="884.8,499.2 887.8,499.1 890.6,501.1 893.1,504.9 895.4,509.9 897.7,515.8 899.8,522.2 901.9,528.7 904.0,535.0 906.2,540.7 908.4,545.3 910.7,548.6 913.0,550.7 915.5,552.1 918.0,552.8 920.6,553.1 923.3,553.0 926.1,552.8 928.8,552.4 931.7,552.2 934.5,552.2 937.3,552.6 940.0,553.3 942.7,553.9 945.5,554.5 948.2,555.1 951.0,555.8 953.7,556.6 956.5,557.6 959.2,558.8 962.0,560.2 964.7,561.8 967.5,564.1 970.1,567.0 972.7,570.3 975.3,573.8 977.8,577.4 980.3,580.8 982.8,583.8 985.4,586.2 988.0,587.9 990.6,588.7 993.3,588.3 993.7,591.4 990.5,591.9 987.5,590.9 984.6,589.1 981.9,586.4 979.2,583.3 976.6,579.8 974.1,576.3 971.6,572.8 969.1,569.6 966.6,566.8 964.0,564.7 961.4,563.1 958.8,561.8 956.1,560.6 953.4,559.7 950.7,558.9 948.0,558.2 945.2,557.5 942.5,557.0 939.8,556.4 937.1,555.7 934.4,555.3 931.7,555.3 929.0,555.5 926.2,555.9 923.4,556.1 920.6,556.2 917.8,555.9 915.1,555.1 912.4,553.6 909.7,551.2 907.2,547.5 904.8,542.5 902.6,536.6 900.4,530.2 898.3,523.7 896.2,517.4 894.1,511.7 891.9,507.0 889.7,503.7 887.5,502.1 885.1,502.2" fill="#badaf6" stroke="#badaf6" stroke-width="0.3"/><polygon points="993.7,591.4 996.9,589.6 1000.2,587.0 1003.5,583.7 1006.8,580.2 1010.1,576.8 1013.3,573.8 1016.3,571.6 1019.2,570.5 1032.7,567.1 1029.8,568.2 1026.8,570.4 1023.6,573.3 1020.3,576.7 1017.0,580.1 1013.8,583.4 1010.5,586.0 1007.3,587.8" fill="#485c70" stroke="#485c70" stroke-width="0.5"/><polygon points="993.7,591.4 996.9,589.6 1010.5,586.0 1007.3,587.8" fill="#485c70" stroke="#485c70" stroke-width="0.4"/><polygon points="996.9,589.6 1000.2,587.0 1013.8,583.4 1010.5,586.0" fill="#485c70" stroke="#485c70" stroke-width="0.4"/><polygon points="1000.2,587.0 1003.5,583.7 1017.0,580.1 1013.8,583.4" fill="#485c70" stroke="#485c70" stroke-width="0.4"/><polygon points="1003.5,583.7 1006.8,580.2 1020.3,576.7 1017.0,580.1" fill="#485c70" stroke="#485c70" stroke-width="0.4"/><polygon points="1006.8,580.2 1010.1,576.8 1023.6,573.3 1020.3,576.7" fill="#485c70" stroke="#485c70" stroke-width="0.4"/><polygon points="1010.1,576.8 1013.3,573.8 1026.8,570.4 1023.6,573.3" fill="#485c70" stroke="#485c70" stroke-width="0.4"/><polygon points="1013.3,573.8 1016.3,571.6 1029.8,568.2 1026.8,570.4" fill="#485c70" stroke="#485c70" stroke-width="0.4"/><polygon points="1016.3,571.6 1019.2,570.5 1032.7,567.1 1029.8,568.2" fill="#485c70" stroke="#485c70" stroke-width="0.4"/><polygon points="993.3,588.3 996.2,586.7 999.3,584.2 1002.5,581.0 1005.8,577.5 1009.1,574.0 1012.4,570.9 1015.7,568.6 1019.1,567.3 1019.2,570.5 1016.3,571.6 1013.3,573.8 1010.1,576.8 1006.8,580.2 1003.5,583.7 1000.2,587.0 996.9,589.6 993.7,591.4" fill="#badaf6" stroke="#badaf6" stroke-width="0.3"/><polygon points="1019.1,567.3 1022.3,567.6 1025.4,569.7 1028.2,573.2 1030.9,577.8 1033.4,583.2 1035.8,588.9 1038.3,594.6 1040.7,600.0 1043.2,604.8 1045.7,608.5 1048.3,610.9 1051.0,612.1 1053.8,612.2 1056.8,611.6 1070.1,607.7 1067.1,608.3 1064.2,608.1 1061.6,607.0 1059.0,604.6 1056.5,600.9 1054.0,596.2 1051.6,590.9 1049.2,585.2 1046.8,579.6 1044.3,574.3 1041.6,569.7 1038.8,566.2 1035.8,564.2 1032.5,563.9" fill="#dcf0fe" stroke="#dcf0fe" stroke-width="0.5"/><polygon points="1019.1,567.3 1022.3,567.6 1035.8,564.2 1032.5,563.9" fill="#d7edfe" stroke="#d7edfe" stroke-width="0.4"/><polygon points="1022.3,567.6 1025.4,569.7 1038.8,566.2 1035.8,564.2" fill="#d8eefe" stroke="#d8eefe" stroke-width="0.4"/><polygon points="1025.4,569.7 1028.2,573.2 1041.6,569.7 1038.8,566.2" fill="#dcf0fe" stroke="#dcf0fe" stroke-width="0.4"/><polygon points="1028.2,573.2 1030.9,577.8 1044.3,574.3 1041.6,569.7" fill="#dff2fe" stroke="#dff2fe" stroke-width="0.4"/><polygon points="1030.9,577.8 1033.4,583.2 1046.8,579.6 1044.3,574.3" fill="#e1f3ff" stroke="#e1f3ff" stroke-width="0.4"/><polygon points="1033.4,583.2 1035.8,588.9 1049.2,585.2 1046.8,579.6" fill="#e2f3ff" stroke="#e2f3ff" stroke-width="0.4"/><polygon points="1035.8,588.9 1038.3,594.6 1051.6,590.9 1049.2,585.2" fill="#e3f3ff" stroke="#e3f3ff" stroke-width="0.4"/><polygon points="1038.3,594.6 1040.7,600.0 1054.0,596.2 1051.6,590.9" fill="#e2f3ff" stroke="#e2f3ff" stroke-width="0.4"/><polygon points="1040.7,600.0 1043.2,604.8 1056.5,600.9 1054.0,596.2" fill="#e0f2fe" stroke="#e0f2fe" stroke-width="0.4"/><polygon points="1043.2,604.8 1045.7,608.5 1059.0,604.6 1056.5,600.9" fill="#ddf1fe" stroke="#ddf1fe" stroke-width="0.4"/><polygon points="1045.7,608.5 1048.3,610.9 1061.6,607.0 1059.0,604.6" fill="#d9effe" stroke="#d9effe" stroke-width="0.4"/><polygon points="1048.3,610.9 1051.0,612.1 1064.2,608.1 1061.6,607.0" fill="#d7edfe" stroke="#d7edfe" stroke-width="0.4"/><polygon points="1051.0,612.1 1053.8,612.2 1067.1,608.3 1064.2,608.1" fill="#d7edfe" stroke="#d7edfe" stroke-width="0.4"/><polygon points="1053.8,612.2 1056.8,611.6 1070.1,607.7 1067.1,608.3" fill="#d8eefe" stroke="#d8eefe" stroke-width="0.4"/><polygon points="1019.1,567.3 1022.3,567.6 1025.4,569.7 1028.2,573.2 1030.9,577.8 1033.4,583.2 1035.8,588.9 1038.3,594.6 1040.7,600.0 1043.2,604.8 1045.7,608.5 1048.3,610.9 1051.0,612.1 1053.8,612.2 1056.8,611.6 1057.2,614.8 1053.9,615.5 1050.7,615.3 1047.5,613.9 1044.5,611.1 1041.8,607.0 1039.2,602.0 1036.7,596.5 1034.3,590.7 1031.8,585.1 1029.4,579.9 1026.9,575.6 1024.4,572.4 1021.9,570.7 1019.2,570.5" fill="#badaf6" stroke="#badaf6" stroke-width="0.3"/><polygon points="1057.2,614.8 1060.5,613.6 1063.8,612.0 1067.1,610.3 1070.3,608.8 1073.5,607.6 1086.6,603.7 1083.5,604.8 1080.3,606.4 1077.0,608.1 1073.7,609.6 1070.4,610.9" fill="#485c70" stroke="#485c70" stroke-width="0.5"/><polygon points="1057.2,614.8 1060.5,613.6 1073.7,609.6 1070.4,610.9" fill="#485c70" stroke="#485c70" stroke-width="0.4"/><polygon points="1060.5,613.6 1063.8,612.0 1077.0,608.1 1073.7,609.6" fill="#485c70" stroke="#485c70" stroke-width="0.4"/><polygon points="1063.8,612.0 1067.1,610.3 1080.3,606.4 1077.0,608.1" fill="#485c70" stroke="#485c70" stroke-width="0.4"/><polygon points="1067.1,610.3 1070.3,608.8 1083.5,604.8 1080.3,606.4" fill="#485c70" stroke="#485c70" stroke-width="0.4"/><polygon points="1070.3,608.8 1073.5,607.6 1086.6,603.7 1083.5,604.8" fill="#485c70" stroke="#485c70" stroke-width="0.4"/><polygon points="1056.8,611.6 1060.0,610.4 1063.2,608.9 1066.5,607.2 1069.8,605.6 1073.1,604.4 1073.5,607.6 1070.3,608.8 1067.1,610.3 1063.8,612.0 1060.5,613.6 1057.2,614.8" fill="#badaf6" stroke="#badaf6" stroke-width="0.3"/><polygon points="1073.1,604.4 1076.5,603.7 1079.8,603.9 1082.9,604.9 1086.0,606.5 1089.0,608.5 1092.0,610.8 1094.9,613.3 1097.8,615.9 1100.7,618.4 1103.6,620.8 1106.6,622.9 1109.5,624.6 1122.5,620.4 1119.5,618.7 1116.6,616.7 1113.7,614.3 1110.8,611.8 1107.9,609.3 1105.0,606.8 1102.1,604.5 1099.1,602.5 1096.0,601.0 1092.9,600.0 1089.6,599.8 1086.3,600.5" fill="#d8eefe" stroke="#d8eefe" stroke-width="0.5"/><polygon points="1073.1,604.4 1076.5,603.7 1089.6,599.8 1086.3,600.5" fill="#d8eefe" stroke="#d8eefe" stroke-width="0.4"/><polygon points="1076.5,603.7 1079.8,603.9 1092.9,600.0 1089.6,599.8" fill="#d7edfe" stroke="#d7edfe" stroke-width="0.4"/><polygon points="1079.8,603.9 1082.9,604.9 1096.0,601.0 1092.9,600.0" fill="#d6edfe" stroke="#d6edfe" stroke-width="0.4"/><polygon points="1082.9,604.9 1086.0,606.5 1099.1,602.5 1096.0,601.0" fill="#d6edfe" stroke="#d6edfe" stroke-width="0.4"/><polygon points="1086.0,606.5 1089.0,608.5 1102.1,604.5 1099.1,602.5" fill="#d7eefe" stroke="#d7eefe" stroke-width="0.4"/><polygon points="1089.0,608.5 1092.0,610.8 1105.0,606.8 1102.1,604.5" fill="#d8eefe" stroke="#d8eefe" stroke-width="0.4"/><polygon points="1092.0,610.8 1094.9,613.3 1107.9,609.3 1105.0,606.8" fill="#d8eefe" stroke="#d8eefe" stroke-width="0.4"/><polygon points="1094.9,613.3 1097.8,615.9 1110.8,611.8 1107.9,609.3" fill="#d9eefe" stroke="#d9eefe" stroke-width="0.4"/><polygon points="1097.8,615.9 1100.7,618.4 1113.7,614.3 1110.8,611.8" fill="#d9eefe" stroke="#d9eefe" stroke-width="0.4"/><polygon points="1100.7,618.4 1103.6,620.8 1116.6,616.7 1113.7,614.3" fill="#d8eefe" stroke="#d8eefe" stroke-width="0.4"/><polygon points="1103.6,620.8 1106.6,622.9 1119.5,618.7 1116.6,616.7" fill="#d7eefe" stroke="#d7eefe" stroke-width="0.4"/><polygon points="1106.6,622.9 1109.5,624.6 1122.5,620.4 1119.5,618.7" fill="#d7edfe" stroke="#d7edfe" stroke-width="0.4"/><polygon points="1073.1,604.4 1076.5,603.7 1079.8,603.9 1082.9,604.9 1086.0,606.5 1089.0,608.5 1092.0,610.8 1094.9,613.3 1097.8,615.9 1100.7,618.4 1103.6,620.8 1106.6,622.9 1109.5,624.6 1108.9,627.7 1105.8,625.9 1102.8,623.8 1099.8,621.4 1096.9,618.8 1094.0,616.2 1091.1,613.7 1088.2,611.5 1085.3,609.6 1082.4,608.1 1079.5,607.1 1076.6,607.0 1073.5,607.6" fill="#badaf6" stroke="#badaf6" stroke-width="0.3"/><polygon points="1109.5,624.6 1122.5,620.4 1121.8,623.5 1108.9,627.7" fill="#798b9b" /><polygon points="831.3,579.6 833.8,580.9 836.3,582.8 838.8,584.9 841.2,587.2 843.6,589.3 846.0,590.9 848.4,591.9 850.8,592.1 865.4,588.6 863.0,588.5 860.6,587.4 858.2,585.8 855.8,583.8 853.4,581.5 851.0,579.4 848.5,577.5 846.0,576.3" fill="#fff8e7" stroke="#fff8e7" stroke-width="0.5"/><polygon points="831.3,579.6 833.8,580.9 848.5,577.5 846.0,576.3" fill="#fff9e9" stroke="#fff9e9" stroke-width="0.4"/><polygon points="833.8,580.9 836.3,582.8 851.0,579.4 848.5,577.5" fill="#fff8e7" stroke="#fff8e7" stroke-width="0.4"/><polygon points="836.3,582.8 838.8,584.9 853.4,581.5 851.0,579.4" fill="#fff6e5" stroke="#fff6e5" stroke-width="0.4"/><polygon points="838.8,584.9 841.2,587.2 855.8,583.8 853.4,581.5" fill="#fff5e4" stroke="#fff5e4" stroke-width="0.4"/><polygon points="841.2,587.2 843.6,589.3 858.2,585.8 855.8,583.8" fill="#fff6e5" stroke="#fff6e5" stroke-width="0.4"/><polygon points="843.6,589.3 846.0,590.9 860.6,587.4 858.2,585.8" fill="#fff8e7" stroke="#fff8e7" stroke-width="0.4"/><polygon points="846.0,590.9 848.4,591.9 863.0,588.5 860.6,587.4" fill="#fffae9" stroke="#fffae9" stroke-width="0.4"/><polygon points="848.4,591.9 850.8,592.1 865.4,588.6 863.0,588.5" fill="#fff8e8" stroke="#fff8e8" stroke-width="0.4"/><polygon points="831.3,579.6 833.8,580.9 836.3,582.8 838.8,584.9 841.2,587.2 843.6,589.3 846.0,590.9 848.4,591.9 850.8,592.1 851.0,595.2 848.2,595.0 845.5,593.8 843.0,592.1 840.5,589.9 838.1,587.7 835.7,585.5 833.3,583.8 830.9,582.6" fill="#fac6a6" stroke="#fac6a6" stroke-width="0.3"/><polygon points="851.0,595.2 853.9,594.1 856.9,591.6 860.1,586.8 863.4,579.5 866.8,570.4 870.3,560.3 873.9,549.8 877.4,539.7 880.8,530.8 884.1,523.7 887.0,519.4 889.3,518.3 903.8,515.6 901.5,516.6 898.6,520.9 895.4,527.9 892.0,536.7 888.5,546.7 884.9,557.1 881.4,567.1 878.0,576.1 874.7,583.3 871.5,588.1 868.5,590.6 865.6,591.6" fill="#846456" stroke="#846456" stroke-width="0.5"/><polygon points="851.0,595.2 853.9,594.1 868.5,590.6 865.6,591.6" fill="#846456" stroke="#846456" stroke-width="0.4"/><polygon points="853.9,594.1 856.9,591.6 871.5,588.1 868.5,590.6" fill="#846456" stroke="#846456" stroke-width="0.4"/><polygon points="856.9,591.6 860.1,586.8 874.7,583.3 871.5,588.1" fill="#846456" stroke="#846456" stroke-width="0.4"/><polygon points="860.1,586.8 863.4,579.5 878.0,576.1 874.7,583.3" fill="#846456" stroke="#846456" stroke-width="0.4"/><polygon points="863.4,579.5 866.8,570.4 881.4,567.1 878.0,576.1" fill="#846456" stroke="#846456" stroke-width="0.4"/><polygon points="866.8,570.4 870.3,560.3 884.9,557.1 881.4,567.1" fill="#846456" stroke="#846456" stroke-width="0.4"/><polygon points="870.3,560.3 873.9,549.8 888.5,546.7 884.9,557.1" fill="#846456" stroke="#846456" stroke-width="0.4"/><polygon points="873.9,549.8 877.4,539.7 892.0,536.7 888.5,546.7" fill="#846456" stroke="#846456" stroke-width="0.4"/><polygon points="877.4,539.7 880.8,530.8 895.4,527.9 892.0,536.7" fill="#846456" stroke="#846456" stroke-width="0.4"/><polygon points="880.8,530.8 884.1,523.7 898.6,520.9 895.4,527.9" fill="#846456" stroke="#846456" stroke-width="0.4"/><polygon points="884.1,523.7 887.0,519.4 901.5,516.6 898.6,520.9" fill="#846456" stroke="#846456" stroke-width="0.4"/><polygon points="887.0,519.4 889.3,518.3 903.8,515.6 901.5,516.6" fill="#846456" stroke="#846456" stroke-width="0.4"/><polygon points="850.8,592.1 853.3,591.2 856.0,589.0 858.8,584.6 862.0,577.6 865.4,568.7 868.9,558.6 872.4,548.2 876.0,538.0 879.4,528.9 882.8,521.5 886.1,516.7 889.5,515.2 889.3,518.3 887.0,519.4 884.1,523.7 880.8,530.8 877.4,539.7 873.9,549.8 870.3,560.3 866.8,570.4 863.4,579.5 860.1,586.8 856.9,591.6 853.9,594.1 851.0,595.2" fill="#fac6a6" stroke="#fac6a6" stroke-width="0.3"/><polygon points="889.5,515.2 892.5,518.3 894.9,524.7 897.0,533.5 898.9,544.1 900.6,555.8 902.3,567.9 904.1,579.6 905.9,590.2 907.9,599.0 910.0,605.1 912.2,609.2 914.6,612.1 917.1,614.0 919.6,615.1 922.3,615.6 925.0,615.6 927.8,615.2 930.7,614.6 933.6,614.1 936.4,613.7 939.3,613.0 953.5,609.1 950.7,609.8 947.8,610.2 944.9,610.8 942.1,611.3 939.3,611.7 936.6,611.7 933.9,611.3 931.4,610.1 928.9,608.2 926.6,605.4 924.3,601.4 922.2,595.3 920.3,586.7 918.5,576.2 916.8,564.6 915.1,552.6 913.3,541.0 911.5,530.5 909.4,521.8 907.1,515.5 904.1,512.5" fill="#ffe8d2" stroke="#ffe8d2" stroke-width="0.5"/><polygon points="889.5,515.2 892.5,518.3 907.1,515.5 904.1,512.5" fill="#fff0dd" stroke="#fff0dd" stroke-width="0.4"/><polygon points="892.5,518.3 894.9,524.7 909.4,521.8 907.1,515.5" fill="#ffe0c9" stroke="#ffe0c9" stroke-width="0.4"/><polygon points="894.9,524.7 897.0,533.5 911.5,530.5 909.4,521.8" fill="#ffd8be" stroke="#ffd8be" stroke-width="0.4"/><polygon points="897.0,533.5 898.9,544.1 913.3,541.0 911.5,530.5" fill="#ffd5ba" stroke="#ffd5ba" stroke-width="0.4"/><polygon points="898.9,544.1 900.6,555.8 915.1,552.6 913.3,541.0" fill="#ffd4b8" stroke="#ffd4b8" stroke-width="0.4"/><polygon points="900.6,555.8 902.3,567.9 916.8,564.6 915.1,552.6" fill="#ffd3b7" stroke="#ffd3b7" stroke-width="0.4"/><polygon points="902.3,567.9 904.1,579.6 918.5,576.2 916.8,564.6" fill="#ffd3b8" stroke="#ffd3b8" stroke-width="0.4"/><polygon points="904.1,579.6 905.9,590.2 920.3,586.7 918.5,576.2" fill="#ffd5b9" stroke="#ffd5b9" stroke-width="0.4"/><polygon points="905.9,590.2 907.9,599.0 922.2,595.3 920.3,586.7" fill="#ffd7bd" stroke="#ffd7bd" stroke-width="0.4"/><polygon points="907.9,599.0 910.0,605.1 924.3,601.4 922.2,595.3" fill="#ffddc5" stroke="#ffddc5" stroke-width="0.4"/><polygon points="910.0,605.1 912.2,609.2 926.6,605.4 924.3,601.4" fill="#ffe7d1" stroke="#ffe7d1" stroke-width="0.4"/><polygon points="912.2,609.2 914.6,612.1 928.9,608.2 926.6,605.4" fill="#fff0dd" stroke="#fff0dd" stroke-width="0.4"/><polygon points="914.6,612.1 917.1,614.0 931.4,610.1 928.9,608.2" fill="#fff6e5" stroke="#fff6e5" stroke-width="0.4"/><polygon points="917.1,614.0 919.6,615.1 933.9,611.3 931.4,610.1" fill="#fff9e9" stroke="#fff9e9" stroke-width="0.4"/><polygon points="919.6,615.1 922.3,615.6 936.6,611.7 933.9,611.3" fill="#fffae9" stroke="#fffae9" stroke-width="0.4"/><polygon points="922.3,615.6 925.0,615.6 939.3,611.7 936.6,611.7" fill="#fff8e8" stroke="#fff8e8" stroke-width="0.4"/><polygon points="925.0,615.6 927.8,615.2 942.1,611.3 939.3,611.7" fill="#fff7e6" stroke="#fff7e6" stroke-width="0.4"/><polygon points="927.8,615.2 930.7,614.6 944.9,610.8 942.1,611.3" fill="#fff6e5" stroke="#fff6e5" stroke-width="0.4"/><polygon points="930.7,614.6 933.6,614.1 947.8,610.2 944.9,610.8" fill="#fff6e5" stroke="#fff6e5" stroke-width="0.4"/><polygon points="933.6,614.1 936.4,613.7 950.7,609.8 947.8,610.2" fill="#fff6e5" stroke="#fff6e5" stroke-width="0.4"/><polygon points="936.4,613.7 939.3,613.0 953.5,609.1 950.7,609.8" fill="#fff4e3" stroke="#fff4e3" stroke-width="0.4"/><polygon points="889.5,515.2 892.5,518.3 894.9,524.7 897.0,533.5 898.9,544.1 900.6,555.8 902.3,567.9 904.1,579.6 905.9,590.2 907.9,599.0 910.0,605.1 912.2,609.2 914.6,612.1 917.1,614.0 919.6,615.1 922.3,615.6 925.0,615.6 927.8,615.2 930.7,614.6 933.6,614.1 936.4,613.7 939.3,613.0 939.7,616.1 936.7,616.8 933.8,617.2 930.9,617.8 928.0,618.3 925.1,618.7 922.2,618.7 919.3,618.2 916.5,616.9 913.8,614.8 911.1,611.5 908.6,607.0 906.3,600.3 904.2,591.2 902.4,580.4 900.6,568.6 898.9,556.6 897.2,545.0 895.3,534.6 893.4,526.1 891.3,520.5 889.3,518.3" fill="#fac6a6" stroke="#fac6a6" stroke-width="0.3"/><polygon points="939.7,616.1 942.8,614.7 945.8,612.7 949.0,610.4 952.1,608.1 955.1,605.9 958.2,604.0 961.1,602.6 975.2,598.8 972.3,600.2 969.3,602.1 966.2,604.3 963.1,606.6 960.0,608.8 957.0,610.8 953.9,612.2" fill="#846456" stroke="#846456" stroke-width="0.5"/><polygon points="939.7,616.1 942.8,614.7 957.0,610.8 953.9,612.2" fill="#846456" stroke="#846456" stroke-width="0.4"/><polygon points="942.8,614.7 945.8,612.7 960.0,608.8 957.0,610.8" fill="#846456" stroke="#846456" stroke-width="0.4"/><polygon points="945.8,612.7 949.0,610.4 963.1,606.6 960.0,608.8" fill="#846456" stroke="#846456" stroke-width="0.4"/><polygon points="949.0,610.4 952.1,608.1 966.2,604.3 963.1,606.6" fill="#846456" stroke="#846456" stroke-width="0.4"/><polygon points="952.1,608.1 955.1,605.9 969.3,602.1 966.2,604.3" fill="#846456" stroke="#846456" stroke-width="0.4"/><polygon points="955.1,605.9 958.2,604.0 972.3,600.2 969.3,602.1" fill="#846456" stroke="#846456" stroke-width="0.4"/><polygon points="958.2,604.0 961.1,602.6 975.2,598.8 972.3,600.2" fill="#846456" stroke="#846456" stroke-width="0.4"/><polygon points="939.3,613.0 942.2,611.6 945.1,609.7 948.2,607.5 951.3,605.2 954.4,602.9 957.6,600.9 960.7,599.5 961.1,602.6 958.2,604.0 955.1,605.9 952.1,608.1 949.0,610.4 945.8,612.7 942.8,614.7 939.7,616.1" fill="#fac6a6" stroke="#fac6a6" stroke-width="0.3"/><polygon points="960.7,599.5 963.8,598.7 966.9,599.0 969.9,600.4 972.8,602.7 975.5,605.8 978.2,609.3 980.8,613.2 983.4,617.2 986.0,621.1 988.6,624.7 991.2,627.9 993.8,630.4 996.6,632.4 999.3,634.3 1002.2,635.8 1005.0,637.3 1007.9,638.5 1010.8,639.7 1013.7,640.7 1016.7,641.7 1019.6,642.7 1022.6,643.8 1025.6,644.8 1028.5,645.7 1031.5,646.6 1034.5,647.4 1037.6,648.1 1040.6,648.8 1043.7,649.5 1046.7,650.2 1049.8,650.8 1052.9,651.5 1056.0,652.1 1059.1,652.6 1062.2,653.1 1065.3,653.5 1068.5,654.0 1071.6,654.4 1074.8,654.9 1078.0,655.4 1081.2,656.0 1084.4,656.7 1097.8,652.1 1094.6,651.4 1091.5,650.8 1088.3,650.3 1085.2,649.8 1082.0,649.4 1078.9,649.0 1075.8,648.5 1072.7,648.1 1069.6,647.6 1066.5,647.0 1063.4,646.3 1060.4,645.7 1057.3,645.1 1054.3,644.4 1051.3,643.7 1048.3,643.0 1045.3,642.2 1042.3,641.3 1039.3,640.4 1036.4,639.4 1033.4,638.4 1030.5,637.4 1027.6,636.4 1024.6,635.4 1021.8,634.2 1018.9,633.0 1016.1,631.6 1013.3,630.1 1010.5,628.3 1007.8,626.2 1005.1,623.7 1002.6,620.6 1000.0,617.0 997.4,613.2 994.8,609.3 992.2,605.4 989.6,601.9 986.9,598.9 984.0,596.6 981.0,595.2 978.0,595.0 974.8,595.7" fill="#fff7e6" stroke="#fff7e6" stroke-width="0.5"/><polygon points="960.7,599.5 963.8,598.7 978.0,595.0 974.8,595.7" fill="#fff5e4" stroke="#fff5e4" stroke-width="0.4"/><polygon points="963.8,598.7 966.9,599.0 981.0,595.2 978.0,595.0" fill="#fff9e8" stroke="#fff9e8" stroke-width="0.4"/><polygon points="966.9,599.0 969.9,600.4 984.0,596.6 981.0,595.2" fill="#fff9e9" stroke="#fff9e9" stroke-width="0.4"/><polygon points="969.9,600.4 972.8,602.7 986.9,598.9 984.0,596.6" fill="#fff6e5" stroke="#fff6e5" stroke-width="0.4"/><polygon points="972.8,602.7 975.5,605.8 989.6,601.9 986.9,598.9" fill="#fff2e0" stroke="#fff2e0" stroke-width="0.4"/><polygon points="975.5,605.8 978.2,609.3 992.2,605.4 989.6,601.9" fill="#ffefdb" stroke="#ffefdb" stroke-width="0.4"/><polygon points="978.2,609.3 980.8,613.2 994.8,609.3 992.2,605.4" fill="#ffedd8" stroke="#ffedd8" stroke-width="0.4"/><polygon points="980.8,613.2 983.4,617.2 997.4,613.2 994.8,609.3" fill="#ffecd7" stroke="#ffecd7" stroke-width="0.4"/><polygon points="983.4,617.2 986.0,621.1 1000.0,617.0 997.4,613.2" fill="#ffecd8" stroke="#ffecd8" stroke-width="0.4"/><polygon points="986.0,621.1 988.6,624.7 1002.6,620.6 1000.0,617.0" fill="#ffeeda" stroke="#ffeeda" stroke-width="0.4"/><polygon points="988.6,624.7 991.2,627.9 1005.1,623.7 1002.6,620.6" fill="#fff0de" stroke="#fff0de" stroke-width="0.4"/><polygon points="991.2,627.9 993.8,630.4 1007.8,626.2 1005.1,623.7" fill="#fff4e2" stroke="#fff4e2" stroke-width="0.4"/><polygon points="993.8,630.4 996.6,632.4 1010.5,628.3 1007.8,626.2" fill="#fff7e6" stroke="#fff7e6" stroke-width="0.4"/><polygon points="996.6,632.4 999.3,634.3 1013.3,630.1 1010.5,628.3" fill="#fff8e7" stroke="#fff8e7" stroke-width="0.4"/><polygon points="999.3,634.3 1002.2,635.8 1016.1,631.6 1013.3,630.1" fill="#fff9e9" stroke="#fff9e9" stroke-width="0.4"/><polygon points="1002.2,635.8 1005.0,637.3 1018.9,633.0 1016.1,631.6" fill="#fff9e9" stroke="#fff9e9" stroke-width="0.4"/><polygon points="1005.0,637.3 1007.9,638.5 1021.8,634.2 1018.9,633.0" fill="#fffaea" stroke="#fffaea" stroke-width="0.4"/><polygon points="1007.9,638.5 1010.8,639.7 1024.6,635.4 1021.8,634.2" fill="#fffaea" stroke="#fffaea" stroke-width="0.4"/><polygon points="1010.8,639.7 1013.7,640.7 1027.6,636.4 1024.6,635.4" fill="#fffaea" stroke="#fffaea" stroke-width="0.4"/><polygon points="1013.7,640.7 1016.7,641.7 1030.5,637.4 1027.6,636.4" fill="#fffaea" stroke="#fffaea" stroke-width="0.4"/><polygon points="1016.7,641.7 1019.6,642.7 1033.4,638.4 1030.5,637.4" fill="#fffaea" stroke="#fffaea" stroke-width="0.4"/><polygon points="1019.6,642.7 1022.6,643.8 1036.4,639.4 1033.4,638.4" fill="#fffaea" stroke="#fffaea" stroke-width="0.4"/><polygon points="1022.6,643.8 1025.6,644.8 1039.3,640.4 1036.4,639.4" fill="#fffaea" stroke="#fffaea" stroke-width="0.4"/><polygon points="1025.6,644.8 1028.5,645.7 1042.3,641.3 1039.3,640.4" fill="#fffaea" stroke="#fffaea" stroke-width="0.4"/><polygon points="1028.5,645.7 1031.5,646.6 1045.3,642.2 1042.3,641.3" fill="#fffaea" stroke="#fffaea" stroke-width="0.4"/><polygon points="1031.5,646.6 1034.5,647.4 1048.3,643.0 1045.3,642.2" fill="#fffaea" stroke="#fffaea" stroke-width="0.4"/><polygon points="1034.5,647.4 1037.6,648.1 1051.3,643.7 1048.3,643.0" fill="#fffaea" stroke="#fffaea" stroke-width="0.4"/><polygon points="1037.6,648.1 1040.6,648.8 1054.3,644.4 1051.3,643.7" fill="#fffaea" stroke="#fffaea" stroke-width="0.4"/><polygon points="1040.6,648.8 1043.7,649.5 1057.3,645.1 1054.3,644.4" fill="#fffaea" stroke="#fffaea" stroke-width="0.4"/><polygon points="1043.7,649.5 1046.7,650.2 1060.4,645.7 1057.3,645.1" fill="#fffaea" stroke="#fffaea" stroke-width="0.4"/><polygon points="1046.7,650.2 1049.8,650.8 1063.4,646.3 1060.4,645.7" fill="#fffaea" stroke="#fffaea" stroke-width="0.4"/><polygon points="1049.8,650.8 1052.9,651.5 1066.5,647.0 1063.4,646.3" fill="#fffaea" stroke="#fffaea" stroke-width="0.4"/><polygon points="1052.9,651.5 1056.0,652.1 1069.6,647.6 1066.5,647.0" fill="#fffaea" stroke="#fffaea" stroke-width="0.4"/><polygon points="1056.0,652.1 1059.1,652.6 1072.7,648.1 1069.6,647.6" fill="#fffaea" stroke="#fffaea" stroke-width="0.4"/><polygon points="1059.1,652.6 1062.2,653.1 1075.8,648.5 1072.7,648.1" fill="#fffae9" stroke="#fffae9" stroke-width="0.4"/><polygon points="1062.2,653.1 1065.3,653.5 1078.9,649.0 1075.8,648.5" fill="#fff9e9" stroke="#fff9e9" stroke-width="0.4"/><polygon points="1065.3,653.5 1068.5,654.0 1082.0,649.4 1078.9,649.0" fill="#fff9e9" stroke="#fff9e9" stroke-width="0.4"/><polygon points="1068.5,654.0 1071.6,654.4 1085.2,649.8 1082.0,649.4" fill="#fff9e9" stroke="#fff9e9" stroke-width="0.4"/><polygon points="1071.6,654.4 1074.8,654.9 1088.3,650.3 1085.2,649.8" fill="#fffae9" stroke="#fffae9" stroke-width="0.4"/><polygon points="1074.8,654.9 1078.0,655.4 1091.5,650.8 1088.3,650.3" fill="#fffae9" stroke="#fffae9" stroke-width="0.4"/><polygon points="1078.0,655.4 1081.2,656.0 1094.6,651.4 1091.5,650.8" fill="#fffaea" stroke="#fffaea" stroke-width="0.4"/><polygon points="1081.2,656.0 1084.4,656.7 1097.8,652.1 1094.6,651.4" fill="#fffaea" stroke="#fffaea" stroke-width="0.4"/><polygon points="960.7,599.5 963.8,598.7 966.9,599.0 969.9,600.4 972.8,602.7 975.5,605.8 978.2,609.3 980.8,613.2 983.4,617.2 986.0,621.1 988.6,624.7 991.2,627.9 993.8,630.4 996.6,632.4 999.3,634.3 1002.2,635.8 1005.0,637.3 1007.9,638.5 1010.8,639.7 1013.7,640.7 1016.7,641.7 1019.6,642.7 1022.6,643.8 1025.6,644.8 1028.5,645.7 1031.5,646.6 1034.5,647.4 1037.6,648.1 1040.6,648.8 1043.7,649.5 1046.7,650.2 1049.8,650.8 1052.9,651.5 1056.0,652.1 1059.1,652.6 1062.2,653.1 1065.3,653.5 1068.5,654.0 1071.6,654.4 1074.8,654.9 1078.0,655.4 1081.2,656.0 1084.4,656.7 1084.1,660.0 1081.0,659.3 1077.8,658.7 1074.6,658.2 1071.5,657.7 1068.3,657.3 1065.2,656.8 1062.0,656.4 1058.9,655.9 1055.8,655.4 1052.7,654.8 1049.6,654.1 1046.5,653.5 1043.4,652.8 1040.4,652.1 1037.3,651.4 1034.3,650.6 1031.2,649.8 1028.2,649.0 1025.2,648.0 1022.2,647.0 1019.3,645.9 1016.3,644.9 1013.3,643.9 1010.4,642.8 1007.4,641.7 1004.5,640.4 1001.6,638.9 998.7,637.3 995.8,635.4 993.0,633.3 990.2,630.6 987.4,627.2 984.8,623.5 982.2,619.6 979.6,615.6 977.0,611.8 974.4,608.4 971.9,605.6 969.3,603.4 966.6,602.2 963.9,601.9 961.1,602.6" fill="#fac6a6" stroke="#fac6a6" stroke-width="0.3"/><polygon points="1084.4,656.7 1097.8,652.1 1097.5,655.4 1084.1,660.0" fill="#a98472" /><line x1="796.9" y1="640.3" x2="808.9" y2="640.0" stroke="#cfcfcf" stroke-width="0.8"/><line x1="798.8" y1="614.7" x2="810.8" y2="614.4" stroke="#cfcfcf" stroke-width="0.8"/><line x1="800.8" y1="589.0" x2="812.8" y2="588.7" stroke="#cfcfcf" stroke-width="0.8"/><line x1="802.8" y1="563.1" x2="814.8" y2="562.8" stroke="#cfcfcf" stroke-width="0.8"/><line x1="804.7" y1="537.0" x2="816.7" y2="536.7" stroke="#cfcfcf" stroke-width="0.8"/><line x1="806.7" y1="510.7" x2="818.7" y2="510.4" stroke="#cfcfcf" stroke-width="0.8"/><line x1="808.7" y1="484.3" x2="820.7" y2="484.0" stroke="#cfcfcf" stroke-width="0.8"/><line x1="810.8" y1="457.8" x2="822.8" y2="457.5" stroke="#cfcfcf" stroke-width="0.8"/><line x1="812.8" y1="431.0" x2="824.8" y2="430.7" stroke="#cfcfcf" stroke-width="0.8"/><line x1="814.8" y1="404.1" x2="826.8" y2="403.8" stroke="#cfcfcf" stroke-width="0.8"/><line x1="816.9" y1="377.0" x2="828.9" y2="376.7" stroke="#cfcfcf" stroke-width="0.8"/><line x1="819.0" y1="349.8" x2="831.0" y2="349.5" stroke="#cfcfcf" stroke-width="0.8"/><line x1="821.0" y1="322.3" x2="833.0" y2="322.0" stroke="#cfcfcf" stroke-width="0.8"/><line x1="823.1" y1="294.7" x2="835.1" y2="294.4" stroke="#cfcfcf" stroke-width="0.8"/><g font-family="Liberation Sans, sans-serif" font-size="11" fill="#222" letter-spacing="-0.1"><text x="800.4" y="642.6" text-anchor="end">-40000</text><text x="802.3" y="617.0" text-anchor="end">-20000</text><text x="804.3" y="591.3" text-anchor="end">0</text><text x="806.3" y="565.4" text-anchor="end">20000</text><text x="808.2" y="539.3" text-anchor="end">40000</text><text x="810.2" y="513.0" text-anchor="end">60000</text><text x="812.2" y="486.6" text-anchor="end">80000</text><text x="814.3" y="460.1" text-anchor="end">100000</text><text x="816.3" y="433.3" text-anchor="end">120000</text><text x="818.3" y="406.4" text-anchor="end">140000</text><text x="820.4" y="379.3" text-anchor="end">160000</text><text x="822.5" y="352.1" text-anchor="end">180000</text><text x="824.5" y="324.6" text-anchor="end">200000</text><text x="826.6" y="297.0" text-anchor="end">220000</text><text x="818.7" y="670.5" text-anchor="middle">Januar 2017</text><text x="844.7" y="678.5" text-anchor="middle">Februar 2017</text><text x="870.3" y="687.0" text-anchor="middle">März 2017</text><text x="897.4" y="696.4" text-anchor="middle">April 2017</text><text x="923.8" y="705.2" text-anchor="middle">Mai 2017</text><text x="953.5" y="713.9" text-anchor="middle">Juni 2017</text><text x="980.3" y="723.4" text-anchor="middle">Juli 2017</text><text x="1009.7" y="732.8" text-anchor="middle">August 2017</text><text x="1039.9" y="743.7" text-anchor="middle">September 2017</text><text x="1070.4" y="753.1" text-anchor="middle">Oktober 2017</text></g></svg>
</body></html>
